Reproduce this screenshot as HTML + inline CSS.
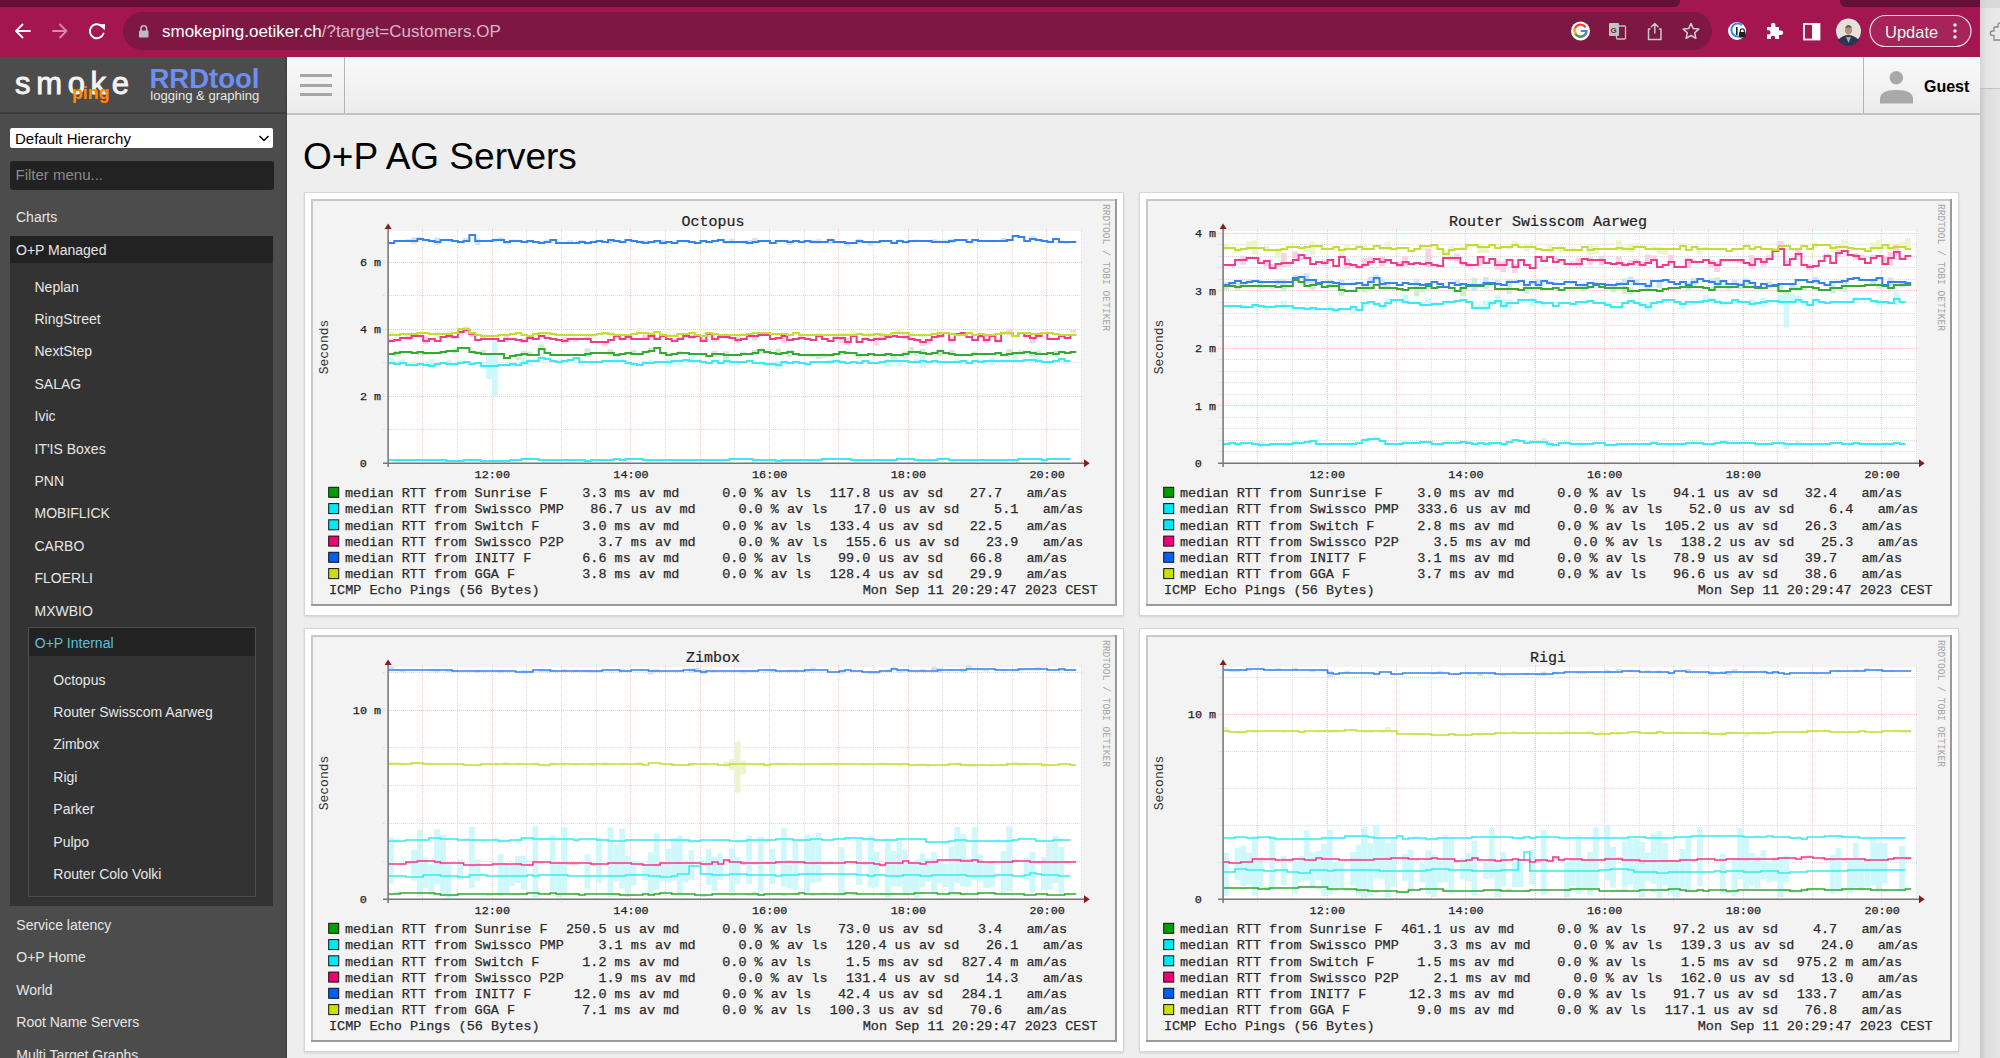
<!DOCTYPE html>
<html><head><meta charset="utf-8"><title>SmokePing</title>
<style>
html,body{margin:0;padding:0;width:2000px;height:1058px;overflow:hidden;background:#eee;font-family:"Liberation Sans",sans-serif}
</style></head><body>
<div style="position:absolute;left:0;top:0;width:1980px;height:57px;background:#a3164f"></div>
<div style="position:absolute;left:0;top:0;width:1680px;height:7px;background:#660f36;border-bottom-right-radius:6px"></div>
<div style="position:absolute;left:1840px;top:0;width:140px;height:7px;background:#660f36;border-bottom-left-radius:6px"></div>
<div style="position:absolute;left:123px;top:12px;width:1589px;height:38px;background:#7e1843;border-radius:19px"></div>
<svg style="position:absolute;left:0;top:0" width="1980" height="57">
<g fill="none" stroke="#fff" stroke-width="1.8" stroke-linecap="round" stroke-linejoin="round">
<path d="M16.5 31 L30 31 M22.5 24.5 L16 31 L22.5 37.5"/>
</g>
<g fill="none" stroke="#d98aa8" stroke-width="1.8" stroke-linecap="round" stroke-linejoin="round">
<path d="M53 31 L66.5 31 M60 24.5 L66.5 31 L60 37.5"/>
</g>
<g fill="none" stroke="#fff" stroke-width="1.9" stroke-linecap="round">
<path d="M103.5 33.5 A7 7 0 1 1 101.5 26"/>
</g>
<path d="M98.5 24.5 L105 24 L104.8 30.3 Z" fill="#fff"/>
<rect x="139" y="30.5" width="9.5" height="7" rx="1" fill="#b9bdc0"/>
<path d="M141 31 V28.5 A2.8 2.8 0 0 1 146.6 28.5 V31" fill="none" stroke="#b9bdc0" stroke-width="1.6"/>
<!-- google G -->
<circle cx="1580.5" cy="31" r="9.5" fill="#fff"/>
<path d="M1585.6 27.3 A6 6 0 1 0 1586.4 32" fill="none" stroke="#ea4335" stroke-width="2.2"/>
<path d="M1575.3 28.5 A6 6 0 0 0 1575.5 34" fill="none" stroke="#fbbc05" stroke-width="2.2"/>
<path d="M1575.5 34 A6 6 0 0 0 1584.5 35.5" fill="none" stroke="#34a853" stroke-width="2.2"/>
<path d="M1580.8 31 H1586.5 A6 6 0 0 1 1584.5 35.5" fill="none" stroke="#4285f4" stroke-width="2.2"/>
<!-- translate -->
<rect x="1609" y="23" width="10" height="13" rx="1" fill="#c2c2c2"/>
<rect x="1616.5" y="26" width="9" height="13" rx="1" fill="none" stroke="#c2c2c2" stroke-width="1.3"/>
<text x="1610.5" y="33" font-family='"Liberation Sans",sans-serif' font-size="8" font-weight="bold" fill="#7e1843">G</text>
<!-- share -->
<path d="M1650 29 H1648.5 V39.5 H1661 V29 H1659.5 M1654.8 33 V23.5 M1651.5 26.8 L1654.8 23.5 L1658 26.8" fill="none" stroke="#c7c7c7" stroke-width="1.5" stroke-linejoin="round" stroke-linecap="round"/>
<!-- star -->
<path d="M1691 23.5 L1693.3 28.6 L1698.8 29.1 L1694.7 32.8 L1695.9 38.3 L1691 35.5 L1686.1 38.3 L1687.3 32.8 L1683.2 29.1 L1688.7 28.6 Z" fill="none" stroke="#d0d0d0" stroke-width="1.5" stroke-linejoin="round"/>
<!-- 1password-ish -->
<circle cx="1737" cy="31" r="9" fill="#fff"/>
<path d="M1742 25 A6.5 6.5 0 1 0 1743 34" fill="none" stroke="#2f8cf0" stroke-width="2"/>
<rect x="1736" y="27" width="1.6" height="8" fill="#222"/>
<rect x="1739" y="32" width="6.5" height="5.5" rx="0.8" fill="#222"/>
<path d="M1740.3 32.5 V30.8 A2 2 0 0 1 1744.3 30.8 V32.5" fill="none" stroke="#222" stroke-width="1.2"/>
<!-- puzzle -->
<path d="M1767 27 H1771 V25 A2.2 2.2 0 0 1 1775.4 25 V27 H1779 V30.5 H1781 A2.2 2.2 0 0 1 1781 34.9 H1779 V39 H1775 V37 A2.2 2.2 0 0 0 1771 37 V39 H1767 V34.5 H1769 A2.2 2.2 0 0 0 1769 30.3 H1767 Z" fill="#fff"/>
<!-- sidebar icon -->
<rect x="1804" y="24" width="15.5" height="15.5" fill="none" stroke="#fff" stroke-width="1.8"/>
<rect x="1812" y="24" width="7.5" height="15.5" fill="#fff"/>
<!-- avatar -->
<circle cx="1848.5" cy="31" r="12.5" fill="#e6e2da"/>
<path d="M1838 40 Q1848 30 1859 40 A12.5 12.5 0 0 1 1838 40 Z" fill="#2a3550"/>
<path d="M1846 37 L1848.5 43 L1851 37 Z" fill="#b5a89a"/>
<ellipse cx="1848.5" cy="30" rx="3.6" ry="4.6" fill="#b89078"/>
<path d="M1844.8 27.5 Q1848.5 22.5 1852.2 27.5 Z" fill="#555"/>
<!-- update btn -->
<rect x="1870" y="15.5" width="101" height="31" rx="15.5" fill="#a6245a" stroke="#e8d8de" stroke-width="1.2"/>
<circle cx="1955" cy="25" r="1.7" fill="#e3f5e6"/><circle cx="1955" cy="31" r="1.7" fill="#e3f5e6"/><circle cx="1955" cy="37" r="1.7" fill="#e3f5e6"/>
</svg>
<div style="position:absolute;left:162px;top:22px;font:17px 'Liberation Sans', sans-serif;color:#fff;white-space:nowrap;line-height:20px">smokeping.oetiker.ch<span style="color:#d8b5c6">/?target=Customers.OP</span></div>
<div style="position:absolute;left:1885px;top:21.5px;font:16.5px 'Liberation Sans', sans-serif;color:#e3f5e6;white-space:nowrap;line-height:20px">Update</div>
<div style="position:absolute;left:1980px;top:0;width:20px;height:1058px;background:linear-gradient(to right,#c8c8c8,#dcdcdc 30%,#e6e6e6)"></div>
<div style="position:absolute;left:1980px;top:0;width:20px;height:88px;background:linear-gradient(to right,#d4d4d4,#e6e6e6 35%,#e9e9e9);border-bottom:1px solid #c4c4c4"></div>
<div style="position:absolute;left:1980px;top:0;width:20px;height:8px;background:linear-gradient(to right,#cfcfcf,#dadada 35%)"></div>
<svg style="position:absolute;left:1980px;top:0" width="20" height="60"><path d="M14 27 H18 V25 A2.2 2.2 0 0 1 22.4 25 V27 M14 27 V31 H12.5 A2.2 2.2 0 0 0 12.5 35.4 H14 V40 H22" fill="none" stroke="#8a8a8a" stroke-width="1.3"/></svg>
<div style="position:absolute;left:0;top:57px;width:287px;height:1001px;background:#4c4c4c"></div>
<div style="position:absolute;left:285px;top:57px;width:2px;height:1001px;background:#444"></div>
<div style="position:absolute;left:0;top:112px;width:287px;height:2px;background:#3c3c3c"></div>
<svg style="position:absolute;left:0;top:57px" width="287" height="56">
<text x="15" y="37" font-family='"Liberation Sans",sans-serif' font-size="31" fill="#f4f4f4" stroke="#f4f4f4" stroke-width="0.9" textLength="114" lengthAdjust="spacing">smoke</text>
<text x="72" y="42.3" font-family='"Liberation Sans",sans-serif' font-size="18" font-weight="bold" fill="#ff8a00" textLength="37.5" lengthAdjust="spacingAndGlyphs">ping</text>
<text x="149.5" y="30.5" font-family='"Liberation Sans",sans-serif' font-size="27" font-weight="bold" fill="#6b8ff5" textLength="110" lengthAdjust="spacingAndGlyphs">RRDtool</text>
<text x="150.3" y="43.3" font-family='"Liberation Sans",sans-serif' font-size="12.5" fill="#e8e8e8" textLength="109" lengthAdjust="spacingAndGlyphs">logging &amp; graphing</text>
</svg>
<div style="position:absolute;left:10px;top:128px;width:263px;height:20px;background:#fff;border-radius:2px"></div>
<div style="position:absolute;left:15px;top:128.5px;font:15px 'Liberation Sans', sans-serif;color:#000;line-height:20px;white-space:nowrap">Default Hierarchy</div>
<svg style="position:absolute;left:258px;top:133px" width="12" height="10"><path d="M1.5 3 L6 7.5 L10.5 3" fill="none" stroke="#000" stroke-width="1.5"/></svg>
<div style="position:absolute;left:10px;top:161px;width:264px;height:29px;background:#222;border-radius:3px"></div>
<div style="position:absolute;left:15.5px;top:165px;font:15px 'Liberation Sans', sans-serif;color:#8a8a8a;line-height:20px;white-space:nowrap">Filter menu...</div>
<div style="position:absolute;left:16px;top:209.2px;font:14px 'Liberation Sans', sans-serif;color:#e6e6e6;line-height:16px;white-space:nowrap">Charts</div>
<div style="position:absolute;left:10px;top:236px;width:263px;height:670px;background:#333"></div>
<div style="position:absolute;left:10px;top:236px;width:263px;height:27px;background:#222"></div>
<div style="position:absolute;left:16px;top:241.7px;font:14px 'Liberation Sans', sans-serif;color:#e6e6e6;line-height:16px;white-space:nowrap">O+P Managed</div>
<div style="position:absolute;left:34.5px;top:278.5px;font:14px 'Liberation Sans', sans-serif;color:#e6e6e6;line-height:16px;white-space:nowrap">Neplan</div>
<div style="position:absolute;left:34.5px;top:310.9px;font:14px 'Liberation Sans', sans-serif;color:#e6e6e6;line-height:16px;white-space:nowrap">RingStreet</div>
<div style="position:absolute;left:34.5px;top:343.3px;font:14px 'Liberation Sans', sans-serif;color:#e6e6e6;line-height:16px;white-space:nowrap">NextStep</div>
<div style="position:absolute;left:34.5px;top:375.7px;font:14px 'Liberation Sans', sans-serif;color:#e6e6e6;line-height:16px;white-space:nowrap">SALAG</div>
<div style="position:absolute;left:34.5px;top:408.09999999999997px;font:14px 'Liberation Sans', sans-serif;color:#e6e6e6;line-height:16px;white-space:nowrap">Ivic</div>
<div style="position:absolute;left:34.5px;top:440.5px;font:14px 'Liberation Sans', sans-serif;color:#e6e6e6;line-height:16px;white-space:nowrap">IT'IS Boxes</div>
<div style="position:absolute;left:34.5px;top:472.9px;font:14px 'Liberation Sans', sans-serif;color:#e6e6e6;line-height:16px;white-space:nowrap">PNN</div>
<div style="position:absolute;left:34.5px;top:505.3px;font:14px 'Liberation Sans', sans-serif;color:#e6e6e6;line-height:16px;white-space:nowrap">MOBIFLICK</div>
<div style="position:absolute;left:34.5px;top:537.7px;font:14px 'Liberation Sans', sans-serif;color:#e6e6e6;line-height:16px;white-space:nowrap">CARBO</div>
<div style="position:absolute;left:34.5px;top:570.1px;font:14px 'Liberation Sans', sans-serif;color:#e6e6e6;line-height:16px;white-space:nowrap">FLOERLI</div>
<div style="position:absolute;left:34.5px;top:602.5px;font:14px 'Liberation Sans', sans-serif;color:#e6e6e6;line-height:16px;white-space:nowrap">MXWBIO</div>
<div style="position:absolute;left:28px;top:627px;width:226px;height:268px;border:1px solid #4e4e4e;background:#333"></div>
<div style="position:absolute;left:29px;top:628px;width:226px;height:28px;background:#222"></div>
<div style="position:absolute;left:34.8px;top:635.0px;font:14px 'Liberation Sans', sans-serif;color:#5bc0de;line-height:16px;white-space:nowrap">O+P Internal</div>
<div style="position:absolute;left:53.3px;top:671.6px;font:14px 'Liberation Sans', sans-serif;color:#e6e6e6;line-height:16px;white-space:nowrap">Octopus</div>
<div style="position:absolute;left:53.3px;top:704.0px;font:14px 'Liberation Sans', sans-serif;color:#e6e6e6;line-height:16px;white-space:nowrap">Router Swisscom Aarweg</div>
<div style="position:absolute;left:53.3px;top:736.4px;font:14px 'Liberation Sans', sans-serif;color:#e6e6e6;line-height:16px;white-space:nowrap">Zimbox</div>
<div style="position:absolute;left:53.3px;top:768.8px;font:14px 'Liberation Sans', sans-serif;color:#e6e6e6;line-height:16px;white-space:nowrap">Rigi</div>
<div style="position:absolute;left:53.3px;top:801.2px;font:14px 'Liberation Sans', sans-serif;color:#e6e6e6;line-height:16px;white-space:nowrap">Parker</div>
<div style="position:absolute;left:53.3px;top:833.6px;font:14px 'Liberation Sans', sans-serif;color:#e6e6e6;line-height:16px;white-space:nowrap">Pulpo</div>
<div style="position:absolute;left:53.3px;top:866.0px;font:14px 'Liberation Sans', sans-serif;color:#e6e6e6;line-height:16px;white-space:nowrap">Router Colo Volki</div>
<div style="position:absolute;left:16.3px;top:917.0px;font:14px 'Liberation Sans', sans-serif;color:#e6e6e6;line-height:16px;white-space:nowrap">Service latency</div>
<div style="position:absolute;left:16.3px;top:949.4px;font:14px 'Liberation Sans', sans-serif;color:#e6e6e6;line-height:16px;white-space:nowrap">O+P Home</div>
<div style="position:absolute;left:16.3px;top:981.8px;font:14px 'Liberation Sans', sans-serif;color:#e6e6e6;line-height:16px;white-space:nowrap">World</div>
<div style="position:absolute;left:16.3px;top:1014.2px;font:14px 'Liberation Sans', sans-serif;color:#e6e6e6;line-height:16px;white-space:nowrap">Root Name Servers</div>
<div style="position:absolute;left:16.3px;top:1046.6px;font:14px 'Liberation Sans', sans-serif;color:#e6e6e6;line-height:16px;white-space:nowrap">Multi Target Graphs</div>
<div style="position:absolute;left:287px;top:57px;width:1693px;height:56px;background:linear-gradient(#f9f9f9,#ececec)"></div>
<div style="position:absolute;left:287px;top:113px;width:1693px;height:2px;background:#c2c2c2"></div>
<div style="position:absolute;left:287px;top:115px;width:1693px;height:943px;background:#eeeeee"></div>
<div style="position:absolute;left:344px;top:57px;width:1px;height:56px;background:#b4b4b4"></div>
<div style="position:absolute;left:1863px;top:57px;width:1px;height:56px;background:#b4b4b4"></div>
<div style="position:absolute;left:299.5px;top:74.3px;width:32.5px;height:3px;background:#a6a6a6"></div>
<div style="position:absolute;left:299.5px;top:83.6px;width:32.5px;height:3px;background:#a6a6a6"></div>
<div style="position:absolute;left:299.5px;top:92.9px;width:32.5px;height:3px;background:#a6a6a6"></div>
<svg style="position:absolute;left:1870px;top:60px" width="60" height="50">
<circle cx="26.3" cy="17.7" r="6.8" fill="#a9a9a9"/>
<path d="M10 43.5 V39 Q10 30 26.3 30 Q43 30 43 39 V43.5 Z" fill="#a9a9a9"/>
</svg>
<div style="position:absolute;left:1924px;top:76.5px;font:bold 16px 'Liberation Sans', sans-serif;color:#000;line-height:20px;white-space:nowrap">Guest</div>
<div style="position:absolute;left:303px;top:134.5px;font:37px 'Liberation Sans', sans-serif;color:#000;line-height:44px;white-space:nowrap">O+P AG Servers</div>
<div style="position:absolute;left:304px;top:192px;width:818px;height:422px;background:#fff;border:1px solid #d6d6d6;box-shadow:0 1px 2px rgba(0,0,0,0.12)"></div>
<div style="position:absolute;left:1139px;top:192px;width:818px;height:422px;background:#fff;border:1px solid #d6d6d6;box-shadow:0 1px 2px rgba(0,0,0,0.12)"></div>
<div style="position:absolute;left:304px;top:628px;width:818px;height:422px;background:#fff;border:1px solid #d6d6d6;box-shadow:0 1px 2px rgba(0,0,0,0.12)"></div>
<div style="position:absolute;left:1139px;top:628px;width:818px;height:422px;background:#fff;border:1px solid #d6d6d6;box-shadow:0 1px 2px rgba(0,0,0,0.12)"></div>
<svg width="806" height="407" style="position:absolute;left:311px;top:199px" shape-rendering="auto">
<rect x="0" y="0" width="806" height="407" fill="#f3f3f3"/>
<rect x="0" y="0" width="806" height="2" fill="#c9c9c9"/><rect x="0" y="0" width="2" height="407" fill="#c9c9c9"/>
<rect x="0" y="405" width="806" height="2" fill="#9a9a9a"/><rect x="804" y="0" width="2" height="407" fill="#9a9a9a"/>
<rect x="78" y="32.0" width="693.0" height="231.8" fill="#ffffff"/>
<path d="M72 230.5 H772.0" stroke="#dcdcdc" stroke-width="1" stroke-dasharray="1,1"/>
<path d="M72 163.5 H772.0" stroke="#dcdcdc" stroke-width="1" stroke-dasharray="1,1"/>
<path d="M72 96.5 H772.0" stroke="#dcdcdc" stroke-width="1" stroke-dasharray="1,1"/>
<path d="M72 264.5 H772.0" stroke="#f8c8c8" stroke-width="1" stroke-dasharray="1,1"/>
<path d="M72 197.5 H772.0" stroke="#f8c8c8" stroke-width="1" stroke-dasharray="1,1"/>
<path d="M72 130.5 H772.0" stroke="#f8c8c8" stroke-width="1" stroke-dasharray="1,1"/>
<path d="M72 63.5 H772.0" stroke="#f8c8c8" stroke-width="1" stroke-dasharray="1,1"/>
<path d="M111.5 30.0 V267.8" stroke="#f8c8c8" stroke-width="1" stroke-dasharray="1,1"/>
<path d="M146.5 30.0 V265.8" stroke="#dedede" stroke-width="1" stroke-dasharray="1,1"/>
<path d="M181.5 30.0 V267.8" stroke="#f8c8c8" stroke-width="1" stroke-dasharray="1,1"/>
<path d="M215.5 30.0 V265.8" stroke="#dedede" stroke-width="1" stroke-dasharray="1,1"/>
<path d="M250.5 30.0 V267.8" stroke="#f8c8c8" stroke-width="1" stroke-dasharray="1,1"/>
<path d="M285.5 30.0 V265.8" stroke="#dedede" stroke-width="1" stroke-dasharray="1,1"/>
<path d="M319.5 30.0 V267.8" stroke="#f8c8c8" stroke-width="1" stroke-dasharray="1,1"/>
<path d="M354.5 30.0 V265.8" stroke="#dedede" stroke-width="1" stroke-dasharray="1,1"/>
<path d="M389.5 30.0 V267.8" stroke="#f8c8c8" stroke-width="1" stroke-dasharray="1,1"/>
<path d="M423.5 30.0 V265.8" stroke="#dedede" stroke-width="1" stroke-dasharray="1,1"/>
<path d="M458.5 30.0 V267.8" stroke="#f8c8c8" stroke-width="1" stroke-dasharray="1,1"/>
<path d="M493.5 30.0 V265.8" stroke="#dedede" stroke-width="1" stroke-dasharray="1,1"/>
<path d="M527.5 30.0 V267.8" stroke="#f8c8c8" stroke-width="1" stroke-dasharray="1,1"/>
<path d="M562.5 30.0 V265.8" stroke="#dedede" stroke-width="1" stroke-dasharray="1,1"/>
<path d="M597.5 30.0 V267.8" stroke="#f8c8c8" stroke-width="1" stroke-dasharray="1,1"/>
<path d="M631.5 30.0 V265.8" stroke="#dedede" stroke-width="1" stroke-dasharray="1,1"/>
<path d="M666.5 30.0 V267.8" stroke="#f8c8c8" stroke-width="1" stroke-dasharray="1,1"/>
<path d="M701.5 30.0 V265.8" stroke="#dedede" stroke-width="1" stroke-dasharray="1,1"/>
<path d="M735.5 30.0 V267.8" stroke="#f8c8c8" stroke-width="1" stroke-dasharray="1,1"/>
<path d="M770.5 30.0 V265.8" stroke="#dedede" stroke-width="1" stroke-dasharray="1,1"/>
<rect x="77.00" y="158.44" width="5.78" height="7.89" fill="#cef8fa"/>
<rect x="82.78" y="161.59" width="5.78" height="3.73" fill="#cef8fa"/>
<rect x="88.56" y="160.34" width="5.78" height="4.05" fill="#cef8fa"/>
<rect x="100.12" y="165.99" width="5.78" height="2.00" fill="#cef8fa"/>
<rect x="117.45" y="160.02" width="5.78" height="7.66" fill="#cef8fa"/>
<rect x="134.79" y="161.36" width="5.78" height="3.58" fill="#cef8fa"/>
<rect x="140.57" y="163.89" width="5.78" height="2.59" fill="#cef8fa"/>
<rect x="146.35" y="161.29" width="5.78" height="3.46" fill="#cef8fa"/>
<rect x="169.47" y="165.35" width="5.78" height="4.07" fill="#cef8fa"/>
<rect x="175.25" y="158.06" width="5.78" height="8.97" fill="#cef8fa"/>
<rect x="192.58" y="165.22" width="5.78" height="2.48" fill="#cef8fa"/>
<rect x="198.36" y="164.87" width="5.78" height="2.97" fill="#cef8fa"/>
<rect x="209.92" y="159.09" width="5.78" height="6.36" fill="#cef8fa"/>
<rect x="215.70" y="160.18" width="5.78" height="7.16" fill="#cef8fa"/>
<rect x="221.48" y="159.68" width="5.78" height="3.01" fill="#cef8fa"/>
<rect x="227.26" y="155.31" width="5.78" height="6.57" fill="#cef8fa"/>
<rect x="233.04" y="157.85" width="5.78" height="3.31" fill="#cef8fa"/>
<rect x="250.38" y="161.97" width="5.78" height="2.00" fill="#cef8fa"/>
<rect x="256.15" y="160.11" width="5.78" height="2.09" fill="#cef8fa"/>
<rect x="267.71" y="161.29" width="5.78" height="5.63" fill="#cef8fa"/>
<rect x="273.49" y="162.58" width="5.78" height="2.00" fill="#cef8fa"/>
<rect x="279.27" y="162.91" width="5.78" height="2.56" fill="#cef8fa"/>
<rect x="296.61" y="160.97" width="5.78" height="2.60" fill="#cef8fa"/>
<rect x="302.39" y="159.31" width="5.78" height="5.38" fill="#cef8fa"/>
<rect x="308.17" y="160.50" width="5.78" height="2.00" fill="#cef8fa"/>
<rect x="313.95" y="163.41" width="5.78" height="2.71" fill="#cef8fa"/>
<rect x="319.72" y="164.11" width="5.78" height="2.00" fill="#cef8fa"/>
<rect x="331.28" y="161.67" width="5.78" height="3.61" fill="#cef8fa"/>
<rect x="337.06" y="161.12" width="5.78" height="3.76" fill="#cef8fa"/>
<rect x="354.40" y="160.08" width="5.78" height="8.14" fill="#cef8fa"/>
<rect x="365.96" y="160.38" width="5.78" height="5.70" fill="#cef8fa"/>
<rect x="377.52" y="156.73" width="5.78" height="6.97" fill="#cef8fa"/>
<rect x="389.07" y="162.28" width="5.78" height="2.00" fill="#cef8fa"/>
<rect x="400.63" y="161.77" width="5.78" height="2.56" fill="#cef8fa"/>
<rect x="417.97" y="161.47" width="5.78" height="5.74" fill="#cef8fa"/>
<rect x="423.75" y="162.94" width="5.78" height="3.86" fill="#cef8fa"/>
<rect x="441.09" y="162.53" width="5.78" height="2.47" fill="#cef8fa"/>
<rect x="446.87" y="163.40" width="5.78" height="3.24" fill="#cef8fa"/>
<rect x="452.65" y="163.48" width="5.78" height="3.45" fill="#cef8fa"/>
<rect x="464.20" y="161.85" width="5.78" height="7.95" fill="#cef8fa"/>
<rect x="493.10" y="164.65" width="5.78" height="2.00" fill="#cef8fa"/>
<rect x="516.22" y="160.86" width="5.78" height="4.33" fill="#cef8fa"/>
<rect x="527.77" y="161.82" width="5.78" height="2.00" fill="#cef8fa"/>
<rect x="574.01" y="160.07" width="5.78" height="7.57" fill="#cef8fa"/>
<rect x="585.57" y="160.65" width="5.78" height="6.52" fill="#cef8fa"/>
<rect x="602.90" y="160.22" width="5.78" height="5.01" fill="#cef8fa"/>
<rect x="608.68" y="156.92" width="5.78" height="11.94" fill="#cef8fa"/>
<rect x="626.02" y="162.54" width="5.78" height="3.85" fill="#cef8fa"/>
<rect x="631.80" y="162.29" width="5.78" height="2.00" fill="#cef8fa"/>
<rect x="643.36" y="160.41" width="5.78" height="4.29" fill="#cef8fa"/>
<rect x="649.14" y="160.65" width="5.78" height="3.98" fill="#cef8fa"/>
<rect x="666.47" y="161.14" width="5.78" height="2.42" fill="#cef8fa"/>
<rect x="678.03" y="158.84" width="5.78" height="7.91" fill="#cef8fa"/>
<rect x="689.59" y="160.50" width="5.78" height="3.35" fill="#cef8fa"/>
<rect x="701.15" y="157.25" width="5.78" height="6.44" fill="#cef8fa"/>
<rect x="718.49" y="159.10" width="5.78" height="3.19" fill="#cef8fa"/>
<rect x="724.27" y="156.90" width="5.78" height="5.21" fill="#cef8fa"/>
<rect x="747.38" y="158.48" width="5.78" height="3.99" fill="#cef8fa"/>
<rect x="753.16" y="161.73" width="5.78" height="3.32" fill="#cef8fa"/>
<rect x="181.02" y="139.96" width="5.78" height="56.90" fill="#cef8fa"/>
<rect x="175.25" y="156.70" width="5.78" height="23.43" fill="#cef8fa"/>
<rect x="82.78" y="151.81" width="5.78" height="5.89" fill="#d2ecd2"/>
<rect x="94.34" y="152.37" width="5.78" height="2.00" fill="#d2ecd2"/>
<rect x="105.90" y="152.12" width="5.78" height="3.73" fill="#d2ecd2"/>
<rect x="111.68" y="154.01" width="5.78" height="2.00" fill="#d2ecd2"/>
<rect x="117.45" y="153.62" width="5.78" height="2.00" fill="#d2ecd2"/>
<rect x="129.01" y="152.44" width="5.78" height="2.00" fill="#d2ecd2"/>
<rect x="140.57" y="149.51" width="5.78" height="4.83" fill="#d2ecd2"/>
<rect x="163.69" y="152.15" width="5.78" height="2.00" fill="#d2ecd2"/>
<rect x="169.47" y="151.00" width="5.78" height="4.30" fill="#d2ecd2"/>
<rect x="175.25" y="154.35" width="5.78" height="2.44" fill="#d2ecd2"/>
<rect x="204.14" y="155.07" width="5.78" height="6.25" fill="#d2ecd2"/>
<rect x="209.92" y="151.93" width="5.78" height="4.96" fill="#d2ecd2"/>
<rect x="215.70" y="152.73" width="5.78" height="4.09" fill="#d2ecd2"/>
<rect x="227.26" y="145.38" width="5.78" height="6.39" fill="#d2ecd2"/>
<rect x="244.60" y="154.95" width="5.78" height="2.21" fill="#d2ecd2"/>
<rect x="273.49" y="149.33" width="5.78" height="9.18" fill="#d2ecd2"/>
<rect x="296.61" y="150.23" width="5.78" height="6.36" fill="#d2ecd2"/>
<rect x="302.39" y="154.21" width="5.78" height="3.45" fill="#d2ecd2"/>
<rect x="319.72" y="150.80" width="5.78" height="4.95" fill="#d2ecd2"/>
<rect x="325.50" y="154.91" width="5.78" height="2.00" fill="#d2ecd2"/>
<rect x="331.28" y="152.95" width="5.78" height="2.00" fill="#d2ecd2"/>
<rect x="337.06" y="148.64" width="5.78" height="4.13" fill="#d2ecd2"/>
<rect x="360.18" y="153.71" width="5.78" height="2.00" fill="#d2ecd2"/>
<rect x="365.96" y="152.21" width="5.78" height="2.24" fill="#d2ecd2"/>
<rect x="400.63" y="151.68" width="5.78" height="6.40" fill="#d2ecd2"/>
<rect x="412.19" y="152.23" width="5.78" height="8.61" fill="#d2ecd2"/>
<rect x="429.53" y="152.65" width="5.78" height="3.32" fill="#d2ecd2"/>
<rect x="441.09" y="150.83" width="5.78" height="3.31" fill="#d2ecd2"/>
<rect x="446.87" y="149.67" width="5.78" height="3.81" fill="#d2ecd2"/>
<rect x="452.65" y="152.94" width="5.78" height="2.00" fill="#d2ecd2"/>
<rect x="464.20" y="149.53" width="5.78" height="6.54" fill="#d2ecd2"/>
<rect x="469.98" y="152.92" width="5.78" height="2.00" fill="#d2ecd2"/>
<rect x="475.76" y="151.23" width="5.78" height="6.63" fill="#d2ecd2"/>
<rect x="481.54" y="154.72" width="5.78" height="2.02" fill="#d2ecd2"/>
<rect x="498.88" y="156.31" width="5.78" height="2.00" fill="#d2ecd2"/>
<rect x="504.66" y="155.89" width="5.78" height="4.04" fill="#d2ecd2"/>
<rect x="510.44" y="154.40" width="5.78" height="4.57" fill="#d2ecd2"/>
<rect x="516.22" y="156.26" width="5.78" height="2.00" fill="#d2ecd2"/>
<rect x="527.77" y="152.32" width="5.78" height="3.66" fill="#d2ecd2"/>
<rect x="533.55" y="151.88" width="5.78" height="3.42" fill="#d2ecd2"/>
<rect x="545.11" y="155.46" width="5.78" height="4.11" fill="#d2ecd2"/>
<rect x="579.79" y="156.15" width="5.78" height="4.51" fill="#d2ecd2"/>
<rect x="591.35" y="152.55" width="5.78" height="6.97" fill="#d2ecd2"/>
<rect x="597.12" y="148.00" width="5.78" height="4.95" fill="#d2ecd2"/>
<rect x="602.90" y="152.65" width="5.78" height="4.02" fill="#d2ecd2"/>
<rect x="608.68" y="149.97" width="5.78" height="6.16" fill="#d2ecd2"/>
<rect x="614.46" y="154.35" width="5.78" height="2.00" fill="#d2ecd2"/>
<rect x="620.24" y="153.43" width="5.78" height="2.00" fill="#d2ecd2"/>
<rect x="626.02" y="150.25" width="5.78" height="6.83" fill="#d2ecd2"/>
<rect x="637.58" y="150.71" width="5.78" height="4.09" fill="#d2ecd2"/>
<rect x="654.92" y="154.87" width="5.78" height="2.00" fill="#d2ecd2"/>
<rect x="660.70" y="152.68" width="5.78" height="3.57" fill="#d2ecd2"/>
<rect x="672.25" y="154.37" width="5.78" height="2.08" fill="#d2ecd2"/>
<rect x="695.37" y="150.02" width="5.78" height="7.52" fill="#d2ecd2"/>
<rect x="701.15" y="153.93" width="5.78" height="2.27" fill="#d2ecd2"/>
<rect x="706.93" y="151.13" width="5.78" height="2.71" fill="#d2ecd2"/>
<rect x="718.49" y="152.23" width="5.78" height="5.67" fill="#d2ecd2"/>
<rect x="724.27" y="151.32" width="5.78" height="4.78" fill="#d2ecd2"/>
<rect x="730.05" y="154.53" width="5.78" height="2.00" fill="#d2ecd2"/>
<rect x="741.60" y="151.70" width="5.78" height="5.92" fill="#d2ecd2"/>
<rect x="77.00" y="139.68" width="5.78" height="4.43" fill="#f9d2e4"/>
<rect x="94.34" y="135.00" width="5.78" height="6.09" fill="#f9d2e4"/>
<rect x="111.68" y="137.51" width="5.78" height="7.72" fill="#f9d2e4"/>
<rect x="134.79" y="136.48" width="5.78" height="2.00" fill="#f9d2e4"/>
<rect x="140.57" y="138.02" width="5.78" height="2.00" fill="#f9d2e4"/>
<rect x="146.35" y="130.21" width="5.78" height="5.28" fill="#f9d2e4"/>
<rect x="152.13" y="127.67" width="5.78" height="5.08" fill="#f9d2e4"/>
<rect x="157.91" y="133.38" width="5.78" height="4.80" fill="#f9d2e4"/>
<rect x="169.47" y="135.79" width="5.78" height="3.84" fill="#f9d2e4"/>
<rect x="192.58" y="136.87" width="5.78" height="6.19" fill="#f9d2e4"/>
<rect x="198.36" y="139.45" width="5.78" height="2.00" fill="#f9d2e4"/>
<rect x="204.14" y="139.99" width="5.78" height="2.00" fill="#f9d2e4"/>
<rect x="209.92" y="139.44" width="5.78" height="4.70" fill="#f9d2e4"/>
<rect x="250.38" y="138.55" width="5.78" height="6.30" fill="#f9d2e4"/>
<rect x="256.15" y="138.54" width="5.78" height="2.10" fill="#f9d2e4"/>
<rect x="261.93" y="138.45" width="5.78" height="4.26" fill="#f9d2e4"/>
<rect x="273.49" y="137.34" width="5.78" height="3.58" fill="#f9d2e4"/>
<rect x="290.83" y="142.61" width="5.78" height="4.68" fill="#f9d2e4"/>
<rect x="302.39" y="136.88" width="5.78" height="2.66" fill="#f9d2e4"/>
<rect x="308.17" y="139.60" width="5.78" height="2.00" fill="#f9d2e4"/>
<rect x="313.95" y="137.80" width="5.78" height="2.74" fill="#f9d2e4"/>
<rect x="331.28" y="133.55" width="5.78" height="6.88" fill="#f9d2e4"/>
<rect x="337.06" y="134.65" width="5.78" height="3.94" fill="#f9d2e4"/>
<rect x="342.84" y="138.00" width="5.78" height="2.31" fill="#f9d2e4"/>
<rect x="365.96" y="134.74" width="5.78" height="5.54" fill="#f9d2e4"/>
<rect x="377.52" y="135.78" width="5.78" height="4.18" fill="#f9d2e4"/>
<rect x="383.30" y="133.54" width="5.78" height="4.16" fill="#f9d2e4"/>
<rect x="389.07" y="138.53" width="5.78" height="5.12" fill="#f9d2e4"/>
<rect x="394.85" y="134.63" width="5.78" height="3.80" fill="#f9d2e4"/>
<rect x="400.63" y="139.40" width="5.78" height="3.82" fill="#f9d2e4"/>
<rect x="423.75" y="136.23" width="5.78" height="7.98" fill="#f9d2e4"/>
<rect x="441.09" y="136.80" width="5.78" height="4.58" fill="#f9d2e4"/>
<rect x="469.98" y="136.60" width="5.78" height="7.53" fill="#f9d2e4"/>
<rect x="487.32" y="137.13" width="5.78" height="2.77" fill="#f9d2e4"/>
<rect x="493.10" y="138.74" width="5.78" height="2.00" fill="#f9d2e4"/>
<rect x="504.66" y="133.91" width="5.78" height="5.52" fill="#f9d2e4"/>
<rect x="522.00" y="137.28" width="5.78" height="2.07" fill="#f9d2e4"/>
<rect x="527.77" y="138.93" width="5.78" height="5.28" fill="#f9d2e4"/>
<rect x="533.55" y="139.04" width="5.78" height="6.89" fill="#f9d2e4"/>
<rect x="550.89" y="137.79" width="5.78" height="2.79" fill="#f9d2e4"/>
<rect x="562.45" y="135.39" width="5.78" height="11.21" fill="#f9d2e4"/>
<rect x="568.23" y="135.75" width="5.78" height="5.56" fill="#f9d2e4"/>
<rect x="579.79" y="136.18" width="5.78" height="2.00" fill="#f9d2e4"/>
<rect x="591.35" y="135.41" width="5.78" height="4.71" fill="#f9d2e4"/>
<rect x="597.12" y="139.08" width="5.78" height="2.96" fill="#f9d2e4"/>
<rect x="608.68" y="142.22" width="5.78" height="4.74" fill="#f9d2e4"/>
<rect x="614.46" y="139.95" width="5.78" height="5.49" fill="#f9d2e4"/>
<rect x="626.02" y="135.08" width="5.78" height="3.54" fill="#f9d2e4"/>
<rect x="637.58" y="137.74" width="5.78" height="5.95" fill="#f9d2e4"/>
<rect x="666.47" y="136.25" width="5.78" height="2.90" fill="#f9d2e4"/>
<rect x="672.25" y="135.45" width="5.78" height="8.74" fill="#f9d2e4"/>
<rect x="683.81" y="140.60" width="5.78" height="3.60" fill="#f9d2e4"/>
<rect x="689.59" y="132.27" width="5.78" height="3.72" fill="#f9d2e4"/>
<rect x="695.37" y="129.97" width="5.78" height="6.27" fill="#f9d2e4"/>
<rect x="718.49" y="138.44" width="5.78" height="5.83" fill="#f9d2e4"/>
<rect x="724.27" y="133.46" width="5.78" height="3.64" fill="#f9d2e4"/>
<rect x="758.94" y="131.09" width="5.78" height="5.88" fill="#f9d2e4"/>
<rect x="77.00" y="132.74" width="5.78" height="4.47" fill="#eef4cc"/>
<rect x="88.56" y="134.51" width="5.78" height="2.00" fill="#eef4cc"/>
<rect x="105.90" y="133.74" width="5.78" height="3.99" fill="#eef4cc"/>
<rect x="123.23" y="132.49" width="5.78" height="7.26" fill="#eef4cc"/>
<rect x="134.79" y="131.78" width="5.78" height="3.87" fill="#eef4cc"/>
<rect x="152.13" y="128.63" width="5.78" height="4.01" fill="#eef4cc"/>
<rect x="209.92" y="134.61" width="5.78" height="2.00" fill="#eef4cc"/>
<rect x="227.26" y="133.70" width="5.78" height="2.00" fill="#eef4cc"/>
<rect x="233.04" y="132.99" width="5.78" height="6.51" fill="#eef4cc"/>
<rect x="238.82" y="134.89" width="5.78" height="2.00" fill="#eef4cc"/>
<rect x="256.15" y="134.07" width="5.78" height="2.91" fill="#eef4cc"/>
<rect x="273.49" y="135.13" width="5.78" height="2.00" fill="#eef4cc"/>
<rect x="279.27" y="135.31" width="5.78" height="3.47" fill="#eef4cc"/>
<rect x="290.83" y="133.73" width="5.78" height="2.15" fill="#eef4cc"/>
<rect x="296.61" y="135.17" width="5.78" height="2.00" fill="#eef4cc"/>
<rect x="313.95" y="135.32" width="5.78" height="4.46" fill="#eef4cc"/>
<rect x="325.50" y="129.03" width="5.78" height="6.29" fill="#eef4cc"/>
<rect x="331.28" y="133.73" width="5.78" height="2.00" fill="#eef4cc"/>
<rect x="348.62" y="133.74" width="5.78" height="2.80" fill="#eef4cc"/>
<rect x="354.40" y="133.72" width="5.78" height="3.11" fill="#eef4cc"/>
<rect x="360.18" y="134.73" width="5.78" height="2.42" fill="#eef4cc"/>
<rect x="365.96" y="134.33" width="5.78" height="3.96" fill="#eef4cc"/>
<rect x="377.52" y="132.87" width="5.78" height="2.45" fill="#eef4cc"/>
<rect x="383.30" y="133.95" width="5.78" height="3.42" fill="#eef4cc"/>
<rect x="400.63" y="134.13" width="5.78" height="2.00" fill="#eef4cc"/>
<rect x="412.19" y="134.44" width="5.78" height="5.19" fill="#eef4cc"/>
<rect x="423.75" y="135.20" width="5.78" height="3.56" fill="#eef4cc"/>
<rect x="429.53" y="133.36" width="5.78" height="2.52" fill="#eef4cc"/>
<rect x="452.65" y="133.87" width="5.78" height="2.53" fill="#eef4cc"/>
<rect x="464.20" y="134.62" width="5.78" height="2.00" fill="#eef4cc"/>
<rect x="481.54" y="133.52" width="5.78" height="2.36" fill="#eef4cc"/>
<rect x="487.32" y="134.08" width="5.78" height="2.31" fill="#eef4cc"/>
<rect x="493.10" y="135.71" width="5.78" height="2.26" fill="#eef4cc"/>
<rect x="504.66" y="133.84" width="5.78" height="3.14" fill="#eef4cc"/>
<rect x="527.77" y="133.86" width="5.78" height="4.47" fill="#eef4cc"/>
<rect x="533.55" y="133.56" width="5.78" height="2.92" fill="#eef4cc"/>
<rect x="539.33" y="132.01" width="5.78" height="3.78" fill="#eef4cc"/>
<rect x="545.11" y="133.66" width="5.78" height="2.35" fill="#eef4cc"/>
<rect x="550.89" y="134.49" width="5.78" height="2.06" fill="#eef4cc"/>
<rect x="556.67" y="133.81" width="5.78" height="4.19" fill="#eef4cc"/>
<rect x="562.45" y="133.89" width="5.78" height="4.10" fill="#eef4cc"/>
<rect x="568.23" y="133.69" width="5.78" height="3.31" fill="#eef4cc"/>
<rect x="579.79" y="133.09" width="5.78" height="2.00" fill="#eef4cc"/>
<rect x="585.57" y="130.99" width="5.78" height="4.19" fill="#eef4cc"/>
<rect x="597.12" y="132.47" width="5.78" height="5.33" fill="#eef4cc"/>
<rect x="608.68" y="135.95" width="5.78" height="2.00" fill="#eef4cc"/>
<rect x="614.46" y="134.95" width="5.78" height="2.00" fill="#eef4cc"/>
<rect x="626.02" y="131.48" width="5.78" height="3.10" fill="#eef4cc"/>
<rect x="643.36" y="134.59" width="5.78" height="2.82" fill="#eef4cc"/>
<rect x="649.14" y="133.07" width="5.78" height="4.35" fill="#eef4cc"/>
<rect x="678.03" y="135.23" width="5.78" height="2.50" fill="#eef4cc"/>
<rect x="689.59" y="132.65" width="5.78" height="3.39" fill="#eef4cc"/>
<rect x="712.71" y="133.93" width="5.78" height="4.76" fill="#eef4cc"/>
<rect x="724.27" y="133.79" width="5.78" height="2.00" fill="#eef4cc"/>
<rect x="758.94" y="132.95" width="5.78" height="3.61" fill="#eef4cc"/>
<rect x="77.00" y="43.31" width="5.78" height="2.00" fill="#d2e2fa"/>
<rect x="94.34" y="40.17" width="5.78" height="2.11" fill="#d2e2fa"/>
<rect x="100.12" y="38.39" width="5.78" height="6.38" fill="#d2e2fa"/>
<rect x="105.90" y="38.12" width="5.78" height="2.91" fill="#d2e2fa"/>
<rect x="123.23" y="38.61" width="5.78" height="7.20" fill="#d2e2fa"/>
<rect x="140.57" y="40.98" width="5.78" height="2.00" fill="#d2e2fa"/>
<rect x="152.13" y="38.78" width="5.78" height="4.23" fill="#d2e2fa"/>
<rect x="157.91" y="35.01" width="5.78" height="2.00" fill="#d2e2fa"/>
<rect x="163.69" y="39.50" width="5.78" height="6.56" fill="#d2e2fa"/>
<rect x="181.03" y="39.60" width="5.78" height="3.71" fill="#d2e2fa"/>
<rect x="186.80" y="38.37" width="5.78" height="4.18" fill="#d2e2fa"/>
<rect x="192.58" y="42.76" width="5.78" height="2.37" fill="#d2e2fa"/>
<rect x="198.36" y="40.48" width="5.78" height="3.06" fill="#d2e2fa"/>
<rect x="204.14" y="40.83" width="5.78" height="2.00" fill="#d2e2fa"/>
<rect x="215.70" y="41.31" width="5.78" height="2.00" fill="#d2e2fa"/>
<rect x="227.26" y="41.68" width="5.78" height="2.76" fill="#d2e2fa"/>
<rect x="233.04" y="40.66" width="5.78" height="3.22" fill="#d2e2fa"/>
<rect x="256.15" y="41.21" width="5.78" height="3.30" fill="#d2e2fa"/>
<rect x="267.71" y="41.02" width="5.78" height="2.85" fill="#d2e2fa"/>
<rect x="290.83" y="41.79" width="5.78" height="2.05" fill="#d2e2fa"/>
<rect x="296.61" y="40.35" width="5.78" height="4.10" fill="#d2e2fa"/>
<rect x="319.72" y="41.60" width="5.78" height="2.00" fill="#d2e2fa"/>
<rect x="325.50" y="41.48" width="5.78" height="2.52" fill="#d2e2fa"/>
<rect x="331.28" y="41.43" width="5.78" height="3.27" fill="#d2e2fa"/>
<rect x="342.84" y="41.54" width="5.78" height="2.16" fill="#d2e2fa"/>
<rect x="348.62" y="41.05" width="5.78" height="4.88" fill="#d2e2fa"/>
<rect x="371.74" y="41.72" width="5.78" height="2.00" fill="#d2e2fa"/>
<rect x="394.85" y="42.42" width="5.78" height="2.00" fill="#d2e2fa"/>
<rect x="412.19" y="42.95" width="5.78" height="2.00" fill="#d2e2fa"/>
<rect x="417.97" y="39.72" width="5.78" height="4.65" fill="#d2e2fa"/>
<rect x="429.53" y="41.62" width="5.78" height="3.12" fill="#d2e2fa"/>
<rect x="435.31" y="40.89" width="5.78" height="4.21" fill="#d2e2fa"/>
<rect x="441.09" y="39.10" width="5.78" height="3.94" fill="#d2e2fa"/>
<rect x="452.65" y="41.22" width="5.78" height="2.00" fill="#d2e2fa"/>
<rect x="469.98" y="40.78" width="5.78" height="2.15" fill="#d2e2fa"/>
<rect x="475.76" y="41.38" width="5.78" height="4.66" fill="#d2e2fa"/>
<rect x="487.32" y="42.27" width="5.78" height="2.00" fill="#d2e2fa"/>
<rect x="498.88" y="40.89" width="5.78" height="3.78" fill="#d2e2fa"/>
<rect x="504.66" y="40.26" width="5.78" height="4.72" fill="#d2e2fa"/>
<rect x="516.22" y="39.59" width="5.78" height="5.03" fill="#d2e2fa"/>
<rect x="522.00" y="41.95" width="5.78" height="2.00" fill="#d2e2fa"/>
<rect x="527.77" y="42.73" width="5.78" height="2.00" fill="#d2e2fa"/>
<rect x="533.55" y="44.17" width="5.78" height="2.69" fill="#d2e2fa"/>
<rect x="545.11" y="39.77" width="5.78" height="4.78" fill="#d2e2fa"/>
<rect x="556.67" y="41.80" width="5.78" height="4.84" fill="#d2e2fa"/>
<rect x="568.23" y="41.14" width="5.78" height="2.00" fill="#d2e2fa"/>
<rect x="579.79" y="42.37" width="5.78" height="2.39" fill="#d2e2fa"/>
<rect x="585.57" y="40.49" width="5.78" height="2.00" fill="#d2e2fa"/>
<rect x="591.35" y="42.77" width="5.78" height="2.00" fill="#d2e2fa"/>
<rect x="597.12" y="41.56" width="5.78" height="2.00" fill="#d2e2fa"/>
<rect x="602.90" y="40.57" width="5.78" height="2.00" fill="#d2e2fa"/>
<rect x="620.24" y="40.29" width="5.78" height="3.37" fill="#d2e2fa"/>
<rect x="626.02" y="41.22" width="5.78" height="2.63" fill="#d2e2fa"/>
<rect x="631.80" y="40.74" width="5.78" height="3.09" fill="#d2e2fa"/>
<rect x="637.58" y="40.01" width="5.78" height="4.05" fill="#d2e2fa"/>
<rect x="678.03" y="41.41" width="5.78" height="2.00" fill="#d2e2fa"/>
<rect x="689.59" y="38.92" width="5.78" height="3.74" fill="#d2e2fa"/>
<rect x="706.93" y="36.92" width="5.78" height="2.00" fill="#d2e2fa"/>
<rect x="718.49" y="37.30" width="5.78" height="2.70" fill="#d2e2fa"/>
<rect x="741.60" y="39.32" width="5.78" height="2.00" fill="#d2e2fa"/>
<rect x="747.38" y="41.34" width="5.78" height="2.38" fill="#d2e2fa"/>
<rect x="753.16" y="42.81" width="5.78" height="2.00" fill="#d2e2fa"/>
<path d="M77.50 164.00H83.28V165.00H89.06V164.00H94.84V166.00H100.62V166.00H106.40V165.00H112.18V166.00H117.95V167.00H123.73V165.00H129.51V164.00H135.29V165.00H141.07V165.00H146.85V164.00H152.63V163.00H158.41V165.00H164.19V164.00H169.97V167.00H175.75V167.00H181.53V167.00H187.30V166.00H193.08V166.00H198.86V165.00H204.64V166.00H210.42V164.00H216.20V162.00H221.98V162.00H227.76V159.00H233.54V160.00H239.32V162.00H245.10V163.00H250.88V162.00H256.65V161.00H262.43V159.00H268.21V163.00H273.99V163.00H279.77V163.00H285.55V163.00H291.33V162.00H297.11V162.00H302.89V162.00H308.67V162.00H314.45V164.00H320.22V165.00H326.00V166.00H331.78V164.00H337.56V164.00H343.34V163.00H349.12V163.00H354.90V163.00H360.68V162.00H366.46V162.00H372.24V161.00H378.02V162.00H383.80V162.00H389.57V163.00H395.35V164.00H401.13V162.00H406.91V164.00H412.69V162.00H418.47V163.00H424.25V163.00H430.03V163.00H435.81V162.00H441.59V164.00H447.37V164.00H453.15V165.00H458.92V165.00H464.70V166.00H470.48V163.00H476.26V164.00H482.04V163.00H487.82V164.00H493.60V165.00H499.38V163.00H505.16V163.00H510.94V163.00H516.72V163.00H522.50V162.00H528.27V163.00H534.05V164.00H539.83V163.00H545.61V164.00H551.39V162.00H557.17V164.00H562.95V164.00H568.73V163.00H574.51V162.00H580.29V162.00H586.07V162.00H591.85V162.00H597.62V163.00H603.40V163.00H609.18V162.00H614.96V163.00H620.74V162.00H626.52V163.00H632.30V163.00H638.08V163.00H643.86V163.00H649.64V162.00H655.42V164.00H661.20V162.00H666.97V163.00H672.75V162.00H678.53V162.00H684.31V162.00H690.09V162.00H695.87V162.00H701.65V162.00H707.43V162.00H713.21V161.00H718.99V161.00H724.77V162.00H730.55V163.00H736.33V163.00H742.10V162.00H747.88V160.00H753.66V162.00H759.44" fill="none" stroke="#3ce8f4" stroke-width="2" stroke-linejoin="miter"/>
<path d="M77.50 155.00H83.28V154.00H89.06V153.00H94.84V153.00H100.62V154.00H106.40V153.00H112.18V154.00H117.95V154.00H123.73V154.00H129.51V153.00H135.29V152.00H141.07V152.00H146.85V149.00H152.63V149.00H158.41V153.00H164.19V154.00H169.97V155.00H175.75V155.00H181.53V155.00H187.30V155.00H193.08V159.00H198.86V157.00H204.64V156.00H210.42V155.00H216.20V156.00H221.98V156.00H227.76V150.00H233.54V154.00H239.32V156.00H245.10V156.00H250.88V156.00H256.65V156.00H262.43V156.00H268.21V156.00H273.99V155.00H279.77V154.00H285.55V154.00H291.33V154.00H297.11V154.00H302.89V156.00H308.67V155.00H314.45V154.00H320.22V155.00H326.00V155.00H331.78V153.00H337.56V152.00H343.34V149.00H349.12V154.00H354.90V156.00H360.68V155.00H366.46V154.00H372.24V154.00H378.02V155.00H383.80V155.00H389.57V155.00H395.35V157.00H401.13V155.00H406.91V155.00H412.69V156.00H418.47V156.00H424.25V156.00H430.03V155.00H435.81V155.00H441.59V154.00H447.37V151.00H453.15V153.00H458.92V154.00H464.70V155.00H470.48V154.00H476.26V153.00H482.04V155.00H487.82V156.00H493.60V156.00H499.38V156.00H505.16V156.00H510.94V156.00H516.72V156.00H522.50V155.00H528.27V153.00H534.05V154.00H539.83V154.00H545.61V156.00H551.39V156.00H557.17V155.00H562.95V156.00H568.73V156.00H574.51V155.00H580.29V156.00H586.07V156.00H591.85V155.00H597.62V153.00H603.40V153.00H609.18V154.00H614.96V155.00H620.74V154.00H626.52V152.00H632.30V154.00H638.08V155.00H643.86V156.00H649.64V156.00H655.42V156.00H661.20V155.00H666.97V155.00H672.75V155.00H678.53V155.00H684.31V154.00H690.09V156.00H695.87V155.00H701.65V154.00H707.43V154.00H713.21V153.00H718.99V154.00H724.77V155.00H730.55V155.00H736.33V154.00H742.10V155.00H747.88V153.00H753.66V154.00H759.44V153.00H765.22" fill="none" stroke="#36a836" stroke-width="2" stroke-linejoin="miter"/>
<path d="M77.50 142.00H83.28V141.00H89.06V139.00H94.84V139.00H100.62V137.00H106.40V137.00H112.18V142.00H117.95V140.00H123.73V142.00H129.51V138.00H135.29V137.00H141.07V138.00H146.85V133.00H152.63V131.00H158.41V135.00H164.19V141.00H169.97V140.00H175.75V140.00H181.53V140.00H187.30V142.00H193.08V140.00H198.86V140.00H204.64V141.00H210.42V142.00H216.20V139.00H221.98V140.00H227.76V137.00H233.54V139.00H239.32V140.00H245.10V141.00H250.88V142.00H256.65V140.00H262.43V140.00H268.21V140.00H273.99V140.00H279.77V143.00H285.55V143.00H291.33V143.00H297.11V141.00H302.89V137.00H308.67V140.00H314.45V138.00H320.22V140.00H326.00V140.00H331.78V140.00H337.56V137.00H343.34V140.00H349.12V137.00H354.90V140.00H360.68V142.00H366.46V140.00H372.24V137.00H378.02V138.00H383.80V137.00H389.57V142.00H395.35V135.00H401.13V140.00H406.91V138.00H412.69V138.00H418.47V139.00H424.25V141.00H430.03V140.00H435.81V137.00H441.59V137.00H447.37V136.00H453.15V136.00H458.92V140.00H464.70V139.00H470.48V137.00H476.26V141.00H482.04V140.00H487.82V139.00H493.60V140.00H499.38V141.00H505.16V137.00H510.94V140.00H516.72V142.00H522.50V139.00H528.27V139.00H534.05V143.00H539.83V137.00H545.61V143.00H551.39V140.00H557.17V141.00H562.95V140.00H568.73V140.00H574.51V138.00H580.29V137.00H586.07V138.00H591.85V138.00H597.62V140.00H603.40V141.00H609.18V143.00H614.96V141.00H620.74V138.00H626.52V137.00H632.30V134.00H638.08V141.00H643.86V135.00H649.64V134.00H655.42V138.00H661.20V141.00H666.97V137.00H672.75V141.00H678.53V137.00H684.31V142.00H690.09V134.00H695.87V134.00H701.65V137.00H707.43V134.00H713.21V137.00H718.99V139.00H724.77V137.00H730.55V134.00H736.33V140.00H742.10V140.00H747.88V137.00H753.66V139.00H759.44V136.00H765.22" fill="none" stroke="#f03a8c" stroke-width="2" stroke-linejoin="miter"/>
<path d="M77.50 136.00H83.28V136.00H89.06V135.00H94.84V135.00H100.62V135.00H106.40V134.00H112.18V134.00H117.95V135.00H123.73V135.00H129.51V135.00H135.29V135.00H141.07V134.00H146.85V130.00H152.63V130.00H158.41V134.00H164.19V136.00H169.97V137.00H175.75V137.00H181.53V137.00H187.30V136.00H193.08V136.00H198.86V135.00H204.64V134.00H210.42V136.00H216.20V137.00H221.98V135.00H227.76V134.00H233.54V134.00H239.32V135.00H245.10V136.00H250.88V136.00H256.65V136.00H262.43V136.00H268.21V136.00H273.99V136.00H279.77V136.00H285.55V135.00H291.33V134.00H297.11V135.00H302.89V136.00H308.67V136.00H314.45V136.00H320.22V135.00H326.00V134.00H331.78V134.00H337.56V135.00H343.34V133.00H349.12V136.00H354.90V137.00H360.68V137.00H366.46V135.00H372.24V135.00H378.02V134.00H383.80V136.00H389.57V137.00H395.35V134.00H401.13V135.00H406.91V136.00H412.69V136.00H418.47V136.00H424.25V136.00H430.03V136.00H435.81V135.00H441.59V134.00H447.37V134.00H453.15V134.00H458.92V135.00H464.70V135.00H470.48V135.00H476.26V136.00H482.04V134.00H487.82V136.00H493.60V136.00H499.38V136.00H505.16V136.00H510.94V136.00H516.72V136.00H522.50V136.00H528.27V136.00H534.05V136.00H539.83V136.00H545.61V135.00H551.39V136.00H557.17V136.00H562.95V135.00H568.73V136.00H574.51V136.00H580.29V134.00H586.07V134.00H591.85V134.00H597.62V136.00H603.40V136.00H609.18V136.00H614.96V136.00H620.74V135.00H626.52V134.00H632.30V134.00H638.08V135.00H643.86V136.00H649.64V136.00H655.42V134.00H661.20V136.00H666.97V135.00H672.75V136.00H678.53V136.00H684.31V135.00H690.09V134.00H695.87V134.00H701.65V137.00H707.43V134.00H713.21V134.00H718.99V135.00H724.77V135.00H730.55V134.00H736.33V134.00H742.10V135.00H747.88V136.00H753.66V136.00H759.44V136.00H765.22" fill="none" stroke="#c4dc34" stroke-width="2" stroke-linejoin="miter"/>
<path d="M77.50 44.00H83.28V42.00H89.06V42.00H94.84V42.00H100.62V42.00H106.40V40.00H112.18V41.00H117.95V42.00H123.73V43.00H129.51V41.00H135.29V41.00H141.07V42.00H146.85V43.00H152.63V42.00H158.41V36.00H164.19V42.00H169.97V42.00H175.75V42.00H181.53V41.00H187.30V41.00H193.08V43.00H198.86V42.00H204.64V42.00H210.42V43.00H216.20V42.00H221.98V43.00H227.76V44.00H233.54V43.00H239.32V41.00H245.10V44.00H250.88V44.00H256.65V44.00H262.43V44.00H268.21V43.00H273.99V44.00H279.77V43.00H285.55V42.00H291.33V43.00H297.11V41.00H302.89V42.00H308.67V43.00H314.45V41.00H320.22V42.00H326.00V43.00H331.78V44.00H337.56V43.00H343.34V42.00H349.12V44.00H354.90V43.00H360.68V44.00H366.46V42.00H372.24V42.00H378.02V43.00H383.80V44.00H389.57V42.00H395.35V43.00H401.13V42.00H406.91V41.00H412.69V43.00H418.47V43.00H424.25V43.00H430.03V43.00H435.81V44.00H441.59V43.00H447.37V42.00H453.15V42.00H458.92V44.00H464.70V42.00H470.48V42.00H476.26V43.00H482.04V42.00H487.82V43.00H493.60V42.00H499.38V43.00H505.16V43.00H510.94V43.00H516.72V41.00H522.50V43.00H528.27V43.00H534.05V44.00H539.83V44.00H545.61V42.00H551.39V43.00H557.17V43.00H562.95V43.00H568.73V42.00H574.51V42.00H580.29V44.00H586.07V42.00H591.85V43.00H597.62V42.00H603.40V42.00H609.18V42.00H614.96V42.00H620.74V43.00H626.52V43.00H632.30V43.00H638.08V42.00H643.86V41.00H649.64V41.00H655.42V43.00H661.20V41.00H666.97V42.00H672.75V42.00H678.53V42.00H684.31V42.00H690.09V42.00H695.87V41.00H701.65V37.00H707.43V38.00H713.21V42.00H718.99V40.00H724.77V41.00H730.55V42.00H736.33V43.00H742.10V40.00H747.88V43.00H753.66V43.00H759.44V43.00H765.22" fill="none" stroke="#3482ec" stroke-width="2" stroke-linejoin="miter"/>
<path d="M77.50 261.00H83.28V261.00H89.06V261.00H94.84V261.00H100.62V261.00H106.40V261.00H112.18V261.00H117.95V261.00H123.73V261.00H129.51V261.00H135.29V262.00H141.07V262.00H146.85V262.00H152.63V261.00H158.41V261.00H164.19V261.00H169.97V262.00H175.75V262.00H181.53V262.00H187.30V262.00H193.08V262.00H198.86V261.00H204.64V261.00H210.42V260.00H216.20V260.00H221.98V260.00H227.76V261.00H233.54V261.00H239.32V261.00H245.10V261.00H250.88V261.00H256.65V261.00H262.43V261.00H268.21V261.00H273.99V262.00H279.77V261.00H285.55V261.00H291.33V261.00H297.11V261.00H302.89V260.00H308.67V261.00H314.45V260.00H320.22V260.00H326.00V260.00H331.78V261.00H337.56V261.00H343.34V261.00H349.12V261.00H354.90V261.00H360.68V261.00H366.46V261.00H372.24V261.00H378.02V261.00H383.80V261.00H389.57V261.00H395.35V261.00H401.13V261.00H406.91V261.00H412.69V261.00H418.47V260.00H424.25V260.00H430.03V260.00H435.81V260.00H441.59V261.00H447.37V261.00H453.15V261.00H458.92V261.00H464.70V262.00H470.48V261.00H476.26V261.00H482.04V261.00H487.82V261.00H493.60V261.00H499.38V261.00H505.16V261.00H510.94V260.00H516.72V260.00H522.50V260.00H528.27V260.00H534.05V260.00H539.83V261.00H545.61V261.00H551.39V261.00H557.17V261.00H562.95V261.00H568.73V261.00H574.51V261.00H580.29V261.00H586.07V260.00H591.85V260.00H597.62V260.00H603.40V261.00H609.18V261.00H614.96V261.00H620.74V261.00H626.52V260.00H632.30V260.00H638.08V261.00H643.86V261.00H649.64V261.00H655.42V261.00H661.20V261.00H666.97V261.00H672.75V261.00H678.53V261.00H684.31V261.00H690.09V261.00H695.87V261.00H701.65V261.00H707.43V260.00H713.21V260.00H718.99V260.00H724.77V260.00H730.55V261.00H736.33V260.00H742.10V260.00H747.88V260.00H753.66V260.00H759.44" fill="none" stroke="#3ce8f4" stroke-width="2" stroke-linejoin="miter"/>
<path d="M77.1 29 V268" stroke="#757575" stroke-width="1.5"/>
<path d="M72 264.2 H777" stroke="#757575" stroke-width="1.5"/>
<path d="M73.6 30 L77.1 24.5 L80.6 30 Z" fill="#8b1a1a"/>
<path d="M773 260.2 L778.7 264.2 L773 268.2 Z" fill="#8b1a1a"/>
<text x="402" y="27.2" font-family='"Liberation Mono", monospace' font-size="15" fill="#222" stroke="#222" stroke-width="0.2" text-anchor="middle">Octopus</text>
<text x="55.8" y="268.1" font-family='"Liberation Mono", monospace' font-size="11.8" fill="#222" stroke="#222" stroke-width="0.25" text-anchor="end" xml:space="preserve">0</text>
<text x="70.2" y="201.2" font-family='"Liberation Mono", monospace' font-size="11.8" fill="#222" stroke="#222" stroke-width="0.25" text-anchor="end" xml:space="preserve">2 m</text>
<text x="70.2" y="134.2" font-family='"Liberation Mono", monospace' font-size="11.8" fill="#222" stroke="#222" stroke-width="0.25" text-anchor="end" xml:space="preserve">4 m</text>
<text x="70.2" y="67.3" font-family='"Liberation Mono", monospace' font-size="11.8" fill="#222" stroke="#222" stroke-width="0.25" text-anchor="end" xml:space="preserve">6 m</text>
<text x="181.3" y="278.8" font-family='"Liberation Mono", monospace' font-size="11.8" fill="#222" stroke="#222" stroke-width="0.25" text-anchor="middle">12:00</text>
<text x="320.0" y="278.8" font-family='"Liberation Mono", monospace' font-size="11.8" fill="#222" stroke="#222" stroke-width="0.25" text-anchor="middle">14:00</text>
<text x="458.7" y="278.8" font-family='"Liberation Mono", monospace' font-size="11.8" fill="#222" stroke="#222" stroke-width="0.25" text-anchor="middle">16:00</text>
<text x="597.4" y="278.8" font-family='"Liberation Mono", monospace' font-size="11.8" fill="#222" stroke="#222" stroke-width="0.25" text-anchor="middle">18:00</text>
<text x="736.1" y="278.8" font-family='"Liberation Mono", monospace' font-size="11.8" fill="#222" stroke="#222" stroke-width="0.25" text-anchor="middle">20:00</text>
<text transform="translate(16.5,148) rotate(-90)" font-family='"Liberation Mono", monospace' font-size="13" fill="#333" text-anchor="middle">Seconds</text>
<text transform="translate(791.5,5) rotate(90)" font-family='"Liberation Mono", monospace' font-size="10.5" fill="#a8a8a8" textLength="127" lengthAdjust="spacingAndGlyphs">RRDTOOL / TOBI OETIKER</text>
<rect x="17.7" y="288.3" width="10" height="10" fill="#009f00" stroke="#111" stroke-width="1"/>
<text x="34.0" y="298.00" font-family='"Liberation Mono", monospace' font-size="13.5" fill="#2a2a2a" stroke="#2a2a2a" stroke-width="0.25" xml:space="preserve">median RTT from Sunrise F</text>
<text x="255.0" y="298.00" font-family='"Liberation Mono", monospace' font-size="13.5" fill="#2a2a2a" stroke="#2a2a2a" stroke-width="0.25" xml:space="preserve">  3.3 ms av md </text>
<text x="395.0" y="298.00" font-family='"Liberation Mono", monospace' font-size="13.5" fill="#2a2a2a" stroke="#2a2a2a" stroke-width="0.25" xml:space="preserve">  0.0 % av ls</text>
<text x="518.8" y="298.00" font-family='"Liberation Mono", monospace' font-size="13.5" fill="#2a2a2a" stroke="#2a2a2a" stroke-width="0.25" xml:space="preserve">117.8 us av sd</text>
<text x="650.7" y="298.00" font-family='"Liberation Mono", monospace' font-size="13.5" fill="#2a2a2a" stroke="#2a2a2a" stroke-width="0.25" xml:space="preserve"> 27.7   am/as</text>
<rect x="17.7" y="304.6" width="10" height="10" fill="#00e8f4" stroke="#111" stroke-width="1"/>
<text x="34.0" y="314.25" font-family='"Liberation Mono", monospace' font-size="13.5" fill="#2a2a2a" stroke="#2a2a2a" stroke-width="0.25" xml:space="preserve">median RTT from Swissco PMP</text>
<text x="271.2" y="314.25" font-family='"Liberation Mono", monospace' font-size="13.5" fill="#2a2a2a" stroke="#2a2a2a" stroke-width="0.25" xml:space="preserve"> 86.7 us av md </text>
<text x="411.2" y="314.25" font-family='"Liberation Mono", monospace' font-size="13.5" fill="#2a2a2a" stroke="#2a2a2a" stroke-width="0.25" xml:space="preserve">  0.0 % av ls</text>
<text x="535.0" y="314.25" font-family='"Liberation Mono", monospace' font-size="13.5" fill="#2a2a2a" stroke="#2a2a2a" stroke-width="0.25" xml:space="preserve"> 17.0 us av sd</text>
<text x="666.9" y="314.25" font-family='"Liberation Mono", monospace' font-size="13.5" fill="#2a2a2a" stroke="#2a2a2a" stroke-width="0.25" xml:space="preserve">  5.1   am/as</text>
<rect x="17.7" y="320.8" width="10" height="10" fill="#00e8f4" stroke="#111" stroke-width="1"/>
<text x="34.0" y="330.50" font-family='"Liberation Mono", monospace' font-size="13.5" fill="#2a2a2a" stroke="#2a2a2a" stroke-width="0.25" xml:space="preserve">median RTT from Switch F </text>
<text x="255.0" y="330.50" font-family='"Liberation Mono", monospace' font-size="13.5" fill="#2a2a2a" stroke="#2a2a2a" stroke-width="0.25" xml:space="preserve">  3.0 ms av md </text>
<text x="395.0" y="330.50" font-family='"Liberation Mono", monospace' font-size="13.5" fill="#2a2a2a" stroke="#2a2a2a" stroke-width="0.25" xml:space="preserve">  0.0 % av ls</text>
<text x="518.8" y="330.50" font-family='"Liberation Mono", monospace' font-size="13.5" fill="#2a2a2a" stroke="#2a2a2a" stroke-width="0.25" xml:space="preserve">133.4 us av sd</text>
<text x="650.7" y="330.50" font-family='"Liberation Mono", monospace' font-size="13.5" fill="#2a2a2a" stroke="#2a2a2a" stroke-width="0.25" xml:space="preserve"> 22.5   am/as</text>
<rect x="17.7" y="337.1" width="10" height="10" fill="#ee0077" stroke="#111" stroke-width="1"/>
<text x="34.0" y="346.75" font-family='"Liberation Mono", monospace' font-size="13.5" fill="#2a2a2a" stroke="#2a2a2a" stroke-width="0.25" xml:space="preserve">median RTT from Swissco P2P</text>
<text x="271.2" y="346.75" font-family='"Liberation Mono", monospace' font-size="13.5" fill="#2a2a2a" stroke="#2a2a2a" stroke-width="0.25" xml:space="preserve">  3.7 ms av md </text>
<text x="411.2" y="346.75" font-family='"Liberation Mono", monospace' font-size="13.5" fill="#2a2a2a" stroke="#2a2a2a" stroke-width="0.25" xml:space="preserve">  0.0 % av ls</text>
<text x="535.0" y="346.75" font-family='"Liberation Mono", monospace' font-size="13.5" fill="#2a2a2a" stroke="#2a2a2a" stroke-width="0.25" xml:space="preserve">155.6 us av sd</text>
<text x="666.9" y="346.75" font-family='"Liberation Mono", monospace' font-size="13.5" fill="#2a2a2a" stroke="#2a2a2a" stroke-width="0.25" xml:space="preserve"> 23.9   am/as</text>
<rect x="17.7" y="353.3" width="10" height="10" fill="#0061ee" stroke="#111" stroke-width="1"/>
<text x="34.0" y="363.00" font-family='"Liberation Mono", monospace' font-size="13.5" fill="#2a2a2a" stroke="#2a2a2a" stroke-width="0.25" xml:space="preserve">median RTT from INIT7 F  </text>
<text x="255.0" y="363.00" font-family='"Liberation Mono", monospace' font-size="13.5" fill="#2a2a2a" stroke="#2a2a2a" stroke-width="0.25" xml:space="preserve">  6.6 ms av md </text>
<text x="395.0" y="363.00" font-family='"Liberation Mono", monospace' font-size="13.5" fill="#2a2a2a" stroke="#2a2a2a" stroke-width="0.25" xml:space="preserve">  0.0 % av ls</text>
<text x="518.8" y="363.00" font-family='"Liberation Mono", monospace' font-size="13.5" fill="#2a2a2a" stroke="#2a2a2a" stroke-width="0.25" xml:space="preserve"> 99.0 us av sd</text>
<text x="650.7" y="363.00" font-family='"Liberation Mono", monospace' font-size="13.5" fill="#2a2a2a" stroke="#2a2a2a" stroke-width="0.25" xml:space="preserve"> 66.8   am/as</text>
<rect x="17.7" y="369.6" width="10" height="10" fill="#cce000" stroke="#111" stroke-width="1"/>
<text x="34.0" y="379.25" font-family='"Liberation Mono", monospace' font-size="13.5" fill="#2a2a2a" stroke="#2a2a2a" stroke-width="0.25" xml:space="preserve">median RTT from GGA F    </text>
<text x="255.0" y="379.25" font-family='"Liberation Mono", monospace' font-size="13.5" fill="#2a2a2a" stroke="#2a2a2a" stroke-width="0.25" xml:space="preserve">  3.8 ms av md </text>
<text x="395.0" y="379.25" font-family='"Liberation Mono", monospace' font-size="13.5" fill="#2a2a2a" stroke="#2a2a2a" stroke-width="0.25" xml:space="preserve">  0.0 % av ls</text>
<text x="518.8" y="379.25" font-family='"Liberation Mono", monospace' font-size="13.5" fill="#2a2a2a" stroke="#2a2a2a" stroke-width="0.25" xml:space="preserve">128.4 us av sd</text>
<text x="650.7" y="379.25" font-family='"Liberation Mono", monospace' font-size="13.5" fill="#2a2a2a" stroke="#2a2a2a" stroke-width="0.25" xml:space="preserve"> 29.9   am/as</text>
<text x="18" y="394.8" font-family='"Liberation Mono", monospace' font-size="13.5" fill="#2a2a2a" stroke="#2a2a2a" stroke-width="0.25" xml:space="preserve">ICMP Echo Pings (56 Bytes)</text>
<text x="786.7" y="394.8" font-family='"Liberation Mono", monospace' font-size="13.5" fill="#2a2a2a" stroke="#2a2a2a" stroke-width="0.25" text-anchor="end">Mon Sep 11 20:29:47 2023 CEST</text>
</svg>
<svg width="806" height="407" style="position:absolute;left:1146px;top:199px" shape-rendering="auto">
<rect x="0" y="0" width="806" height="407" fill="#f3f3f3"/>
<rect x="0" y="0" width="806" height="2" fill="#c9c9c9"/><rect x="0" y="0" width="2" height="407" fill="#c9c9c9"/>
<rect x="0" y="405" width="806" height="2" fill="#9a9a9a"/><rect x="804" y="0" width="2" height="407" fill="#9a9a9a"/>
<rect x="78" y="32.0" width="693.0" height="231.8" fill="#ffffff"/>
<path d="M72 252.5 H772.0" stroke="#dcdcdc" stroke-width="1" stroke-dasharray="1,1"/>
<path d="M72 241.5 H772.0" stroke="#dcdcdc" stroke-width="1" stroke-dasharray="1,1"/>
<path d="M72 229.5 H772.0" stroke="#dcdcdc" stroke-width="1" stroke-dasharray="1,1"/>
<path d="M72 218.5 H772.0" stroke="#dcdcdc" stroke-width="1" stroke-dasharray="1,1"/>
<path d="M72 195.5 H772.0" stroke="#dcdcdc" stroke-width="1" stroke-dasharray="1,1"/>
<path d="M72 183.5 H772.0" stroke="#dcdcdc" stroke-width="1" stroke-dasharray="1,1"/>
<path d="M72 172.5 H772.0" stroke="#dcdcdc" stroke-width="1" stroke-dasharray="1,1"/>
<path d="M72 160.5 H772.0" stroke="#dcdcdc" stroke-width="1" stroke-dasharray="1,1"/>
<path d="M72 137.5 H772.0" stroke="#dcdcdc" stroke-width="1" stroke-dasharray="1,1"/>
<path d="M72 126.5 H772.0" stroke="#dcdcdc" stroke-width="1" stroke-dasharray="1,1"/>
<path d="M72 114.5 H772.0" stroke="#dcdcdc" stroke-width="1" stroke-dasharray="1,1"/>
<path d="M72 103.5 H772.0" stroke="#dcdcdc" stroke-width="1" stroke-dasharray="1,1"/>
<path d="M72 80.5 H772.0" stroke="#dcdcdc" stroke-width="1" stroke-dasharray="1,1"/>
<path d="M72 68.5 H772.0" stroke="#dcdcdc" stroke-width="1" stroke-dasharray="1,1"/>
<path d="M72 57.5 H772.0" stroke="#dcdcdc" stroke-width="1" stroke-dasharray="1,1"/>
<path d="M72 45.5 H772.0" stroke="#dcdcdc" stroke-width="1" stroke-dasharray="1,1"/>
<path d="M72 264.5 H772.0" stroke="#f8c8c8" stroke-width="1" stroke-dasharray="1,1"/>
<path d="M72 206.5 H772.0" stroke="#f8c8c8" stroke-width="1" stroke-dasharray="1,1"/>
<path d="M72 149.5 H772.0" stroke="#f8c8c8" stroke-width="1" stroke-dasharray="1,1"/>
<path d="M72 91.5 H772.0" stroke="#f8c8c8" stroke-width="1" stroke-dasharray="1,1"/>
<path d="M72 34.5 H772.0" stroke="#f8c8c8" stroke-width="1" stroke-dasharray="1,1"/>
<path d="M111.5 30.0 V267.8" stroke="#f8c8c8" stroke-width="1" stroke-dasharray="1,1"/>
<path d="M146.5 30.0 V265.8" stroke="#dedede" stroke-width="1" stroke-dasharray="1,1"/>
<path d="M181.5 30.0 V267.8" stroke="#f8c8c8" stroke-width="1" stroke-dasharray="1,1"/>
<path d="M215.5 30.0 V265.8" stroke="#dedede" stroke-width="1" stroke-dasharray="1,1"/>
<path d="M250.5 30.0 V267.8" stroke="#f8c8c8" stroke-width="1" stroke-dasharray="1,1"/>
<path d="M285.5 30.0 V265.8" stroke="#dedede" stroke-width="1" stroke-dasharray="1,1"/>
<path d="M319.5 30.0 V267.8" stroke="#f8c8c8" stroke-width="1" stroke-dasharray="1,1"/>
<path d="M354.5 30.0 V265.8" stroke="#dedede" stroke-width="1" stroke-dasharray="1,1"/>
<path d="M389.5 30.0 V267.8" stroke="#f8c8c8" stroke-width="1" stroke-dasharray="1,1"/>
<path d="M423.5 30.0 V265.8" stroke="#dedede" stroke-width="1" stroke-dasharray="1,1"/>
<path d="M458.5 30.0 V267.8" stroke="#f8c8c8" stroke-width="1" stroke-dasharray="1,1"/>
<path d="M493.5 30.0 V265.8" stroke="#dedede" stroke-width="1" stroke-dasharray="1,1"/>
<path d="M527.5 30.0 V267.8" stroke="#f8c8c8" stroke-width="1" stroke-dasharray="1,1"/>
<path d="M562.5 30.0 V265.8" stroke="#dedede" stroke-width="1" stroke-dasharray="1,1"/>
<path d="M597.5 30.0 V267.8" stroke="#f8c8c8" stroke-width="1" stroke-dasharray="1,1"/>
<path d="M631.5 30.0 V265.8" stroke="#dedede" stroke-width="1" stroke-dasharray="1,1"/>
<path d="M666.5 30.0 V267.8" stroke="#f8c8c8" stroke-width="1" stroke-dasharray="1,1"/>
<path d="M701.5 30.0 V265.8" stroke="#dedede" stroke-width="1" stroke-dasharray="1,1"/>
<path d="M735.5 30.0 V267.8" stroke="#f8c8c8" stroke-width="1" stroke-dasharray="1,1"/>
<path d="M770.5 30.0 V265.8" stroke="#dedede" stroke-width="1" stroke-dasharray="1,1"/>
<rect x="94.34" y="105.21" width="5.78" height="5.02" fill="#cef8fa"/>
<rect x="105.90" y="104.82" width="5.78" height="4.84" fill="#cef8fa"/>
<rect x="111.68" y="106.63" width="5.78" height="2.00" fill="#cef8fa"/>
<rect x="117.45" y="107.35" width="5.78" height="4.40" fill="#cef8fa"/>
<rect x="134.79" y="101.73" width="5.78" height="7.79" fill="#cef8fa"/>
<rect x="163.69" y="108.92" width="5.78" height="3.51" fill="#cef8fa"/>
<rect x="181.03" y="106.64" width="5.78" height="5.37" fill="#cef8fa"/>
<rect x="198.36" y="108.63" width="5.78" height="3.08" fill="#cef8fa"/>
<rect x="204.14" y="105.42" width="5.78" height="8.52" fill="#cef8fa"/>
<rect x="209.92" y="109.69" width="5.78" height="2.22" fill="#cef8fa"/>
<rect x="215.70" y="103.16" width="5.78" height="5.17" fill="#cef8fa"/>
<rect x="227.26" y="102.80" width="5.78" height="4.03" fill="#cef8fa"/>
<rect x="233.04" y="105.75" width="5.78" height="5.05" fill="#cef8fa"/>
<rect x="238.82" y="99.15" width="5.78" height="8.50" fill="#cef8fa"/>
<rect x="256.15" y="95.57" width="5.78" height="9.61" fill="#cef8fa"/>
<rect x="273.49" y="104.47" width="5.78" height="2.00" fill="#cef8fa"/>
<rect x="279.27" y="99.40" width="5.78" height="7.15" fill="#cef8fa"/>
<rect x="325.50" y="105.81" width="5.78" height="3.86" fill="#cef8fa"/>
<rect x="331.28" y="105.69" width="5.78" height="5.22" fill="#cef8fa"/>
<rect x="337.06" y="101.38" width="5.78" height="11.18" fill="#cef8fa"/>
<rect x="342.84" y="101.03" width="5.78" height="5.94" fill="#cef8fa"/>
<rect x="348.62" y="96.04" width="5.78" height="7.80" fill="#cef8fa"/>
<rect x="354.40" y="100.30" width="5.78" height="10.06" fill="#cef8fa"/>
<rect x="360.18" y="100.38" width="5.78" height="10.11" fill="#cef8fa"/>
<rect x="383.30" y="98.97" width="5.78" height="8.37" fill="#cef8fa"/>
<rect x="394.85" y="103.41" width="5.78" height="4.40" fill="#cef8fa"/>
<rect x="423.75" y="102.64" width="5.78" height="4.39" fill="#cef8fa"/>
<rect x="441.09" y="100.79" width="5.78" height="2.00" fill="#cef8fa"/>
<rect x="458.42" y="102.53" width="5.78" height="5.07" fill="#cef8fa"/>
<rect x="464.20" y="108.19" width="5.78" height="2.00" fill="#cef8fa"/>
<rect x="469.98" y="107.83" width="5.78" height="2.29" fill="#cef8fa"/>
<rect x="481.54" y="101.23" width="5.78" height="2.83" fill="#cef8fa"/>
<rect x="487.32" y="102.61" width="5.78" height="2.00" fill="#cef8fa"/>
<rect x="498.88" y="106.64" width="5.78" height="5.60" fill="#cef8fa"/>
<rect x="516.22" y="100.07" width="5.78" height="2.05" fill="#cef8fa"/>
<rect x="533.55" y="104.23" width="5.78" height="5.97" fill="#cef8fa"/>
<rect x="545.11" y="101.99" width="5.78" height="4.26" fill="#cef8fa"/>
<rect x="550.89" y="100.29" width="5.78" height="3.85" fill="#cef8fa"/>
<rect x="556.67" y="96.03" width="5.78" height="8.65" fill="#cef8fa"/>
<rect x="562.45" y="98.40" width="5.78" height="3.38" fill="#cef8fa"/>
<rect x="568.23" y="100.60" width="5.78" height="3.33" fill="#cef8fa"/>
<rect x="574.01" y="101.43" width="5.78" height="5.72" fill="#cef8fa"/>
<rect x="579.79" y="102.17" width="5.78" height="2.11" fill="#cef8fa"/>
<rect x="591.35" y="100.97" width="5.78" height="3.77" fill="#cef8fa"/>
<rect x="602.90" y="100.23" width="5.78" height="5.41" fill="#cef8fa"/>
<rect x="608.68" y="103.43" width="5.78" height="3.57" fill="#cef8fa"/>
<rect x="614.46" y="98.67" width="5.78" height="9.23" fill="#cef8fa"/>
<rect x="620.24" y="101.87" width="5.78" height="3.71" fill="#cef8fa"/>
<rect x="631.80" y="95.88" width="5.78" height="10.39" fill="#cef8fa"/>
<rect x="643.36" y="95.12" width="5.78" height="8.67" fill="#cef8fa"/>
<rect x="649.14" y="96.54" width="5.78" height="5.28" fill="#cef8fa"/>
<rect x="654.92" y="102.21" width="5.78" height="4.30" fill="#cef8fa"/>
<rect x="695.37" y="102.34" width="5.78" height="2.15" fill="#cef8fa"/>
<rect x="706.93" y="97.68" width="5.78" height="4.04" fill="#cef8fa"/>
<rect x="730.05" y="99.76" width="5.78" height="7.07" fill="#cef8fa"/>
<rect x="747.38" y="92.47" width="5.78" height="13.76" fill="#cef8fa"/>
<rect x="637.58" y="94.08" width="5.78" height="34.56" fill="#cef8fa"/>
<rect x="77.00" y="82.90" width="5.78" height="8.42" fill="#d2ecd2"/>
<rect x="88.56" y="83.74" width="5.78" height="7.78" fill="#d2ecd2"/>
<rect x="105.90" y="85.90" width="5.78" height="2.00" fill="#d2ecd2"/>
<rect x="111.68" y="81.13" width="5.78" height="8.61" fill="#d2ecd2"/>
<rect x="123.23" y="86.82" width="5.78" height="3.08" fill="#d2ecd2"/>
<rect x="134.79" y="83.92" width="5.78" height="8.66" fill="#d2ecd2"/>
<rect x="163.69" y="79.83" width="5.78" height="10.89" fill="#d2ecd2"/>
<rect x="181.03" y="80.79" width="5.78" height="8.65" fill="#d2ecd2"/>
<rect x="186.80" y="86.02" width="5.78" height="2.00" fill="#d2ecd2"/>
<rect x="192.58" y="83.51" width="5.78" height="13.19" fill="#d2ecd2"/>
<rect x="215.70" y="87.05" width="5.78" height="6.39" fill="#d2ecd2"/>
<rect x="221.48" y="85.82" width="5.78" height="5.72" fill="#d2ecd2"/>
<rect x="233.04" y="85.44" width="5.78" height="5.18" fill="#d2ecd2"/>
<rect x="238.82" y="87.13" width="5.78" height="4.18" fill="#d2ecd2"/>
<rect x="267.71" y="83.88" width="5.78" height="13.29" fill="#d2ecd2"/>
<rect x="273.49" y="88.49" width="5.78" height="4.80" fill="#d2ecd2"/>
<rect x="290.83" y="86.89" width="5.78" height="2.00" fill="#d2ecd2"/>
<rect x="313.95" y="86.23" width="5.78" height="10.90" fill="#d2ecd2"/>
<rect x="325.50" y="78.87" width="5.78" height="12.39" fill="#d2ecd2"/>
<rect x="331.28" y="86.24" width="5.78" height="2.00" fill="#d2ecd2"/>
<rect x="337.06" y="83.07" width="5.78" height="6.84" fill="#d2ecd2"/>
<rect x="360.18" y="80.18" width="5.78" height="14.47" fill="#d2ecd2"/>
<rect x="377.52" y="88.47" width="5.78" height="6.11" fill="#d2ecd2"/>
<rect x="383.30" y="88.08" width="5.78" height="2.86" fill="#d2ecd2"/>
<rect x="389.07" y="84.28" width="5.78" height="6.63" fill="#d2ecd2"/>
<rect x="394.85" y="89.84" width="5.78" height="2.00" fill="#d2ecd2"/>
<rect x="435.31" y="88.06" width="5.78" height="4.03" fill="#d2ecd2"/>
<rect x="458.42" y="88.14" width="5.78" height="2.00" fill="#d2ecd2"/>
<rect x="464.20" y="86.72" width="5.78" height="6.45" fill="#d2ecd2"/>
<rect x="475.76" y="86.94" width="5.78" height="7.86" fill="#d2ecd2"/>
<rect x="481.54" y="88.71" width="5.78" height="6.44" fill="#d2ecd2"/>
<rect x="498.88" y="84.46" width="5.78" height="6.56" fill="#d2ecd2"/>
<rect x="539.33" y="82.93" width="5.78" height="8.99" fill="#d2ecd2"/>
<rect x="562.45" y="87.50" width="5.78" height="3.42" fill="#d2ecd2"/>
<rect x="568.23" y="78.22" width="5.78" height="9.96" fill="#d2ecd2"/>
<rect x="579.79" y="88.08" width="5.78" height="3.37" fill="#d2ecd2"/>
<rect x="591.35" y="84.02" width="5.78" height="6.03" fill="#d2ecd2"/>
<rect x="597.12" y="83.63" width="5.78" height="5.60" fill="#d2ecd2"/>
<rect x="620.24" y="82.35" width="5.78" height="6.41" fill="#d2ecd2"/>
<rect x="631.80" y="84.14" width="5.78" height="10.09" fill="#d2ecd2"/>
<rect x="637.58" y="91.35" width="5.78" height="4.13" fill="#d2ecd2"/>
<rect x="649.14" y="87.35" width="5.78" height="5.06" fill="#d2ecd2"/>
<rect x="654.92" y="87.20" width="5.78" height="4.32" fill="#d2ecd2"/>
<rect x="666.47" y="89.12" width="5.78" height="2.36" fill="#d2ecd2"/>
<rect x="683.81" y="85.58" width="5.78" height="8.43" fill="#d2ecd2"/>
<rect x="695.37" y="86.26" width="5.78" height="6.54" fill="#d2ecd2"/>
<rect x="730.05" y="84.58" width="5.78" height="5.32" fill="#d2ecd2"/>
<rect x="82.78" y="83.49" width="5.78" height="4.15" fill="#d2e2fa"/>
<rect x="88.56" y="80.77" width="5.78" height="2.29" fill="#d2e2fa"/>
<rect x="94.34" y="82.50" width="5.78" height="3.34" fill="#d2e2fa"/>
<rect x="100.12" y="80.21" width="5.78" height="2.91" fill="#d2e2fa"/>
<rect x="129.01" y="80.46" width="5.78" height="5.58" fill="#d2e2fa"/>
<rect x="134.79" y="80.38" width="5.78" height="3.30" fill="#d2e2fa"/>
<rect x="146.35" y="76.01" width="5.78" height="5.61" fill="#d2e2fa"/>
<rect x="157.91" y="74.18" width="5.78" height="10.38" fill="#d2e2fa"/>
<rect x="181.03" y="82.29" width="5.78" height="5.32" fill="#d2e2fa"/>
<rect x="192.58" y="80.93" width="5.78" height="4.73" fill="#d2e2fa"/>
<rect x="204.14" y="82.85" width="5.78" height="3.54" fill="#d2e2fa"/>
<rect x="215.70" y="84.53" width="5.78" height="2.00" fill="#d2e2fa"/>
<rect x="221.48" y="77.58" width="5.78" height="7.58" fill="#d2e2fa"/>
<rect x="227.26" y="75.40" width="5.78" height="6.00" fill="#d2e2fa"/>
<rect x="233.04" y="80.32" width="5.78" height="6.38" fill="#d2e2fa"/>
<rect x="238.82" y="83.33" width="5.78" height="4.40" fill="#d2e2fa"/>
<rect x="267.71" y="79.67" width="5.78" height="5.10" fill="#d2e2fa"/>
<rect x="308.17" y="81.26" width="5.78" height="5.25" fill="#d2e2fa"/>
<rect x="325.50" y="85.08" width="5.78" height="6.71" fill="#d2e2fa"/>
<rect x="337.06" y="78.01" width="5.78" height="7.13" fill="#d2e2fa"/>
<rect x="348.62" y="80.80" width="5.78" height="4.07" fill="#d2e2fa"/>
<rect x="365.96" y="81.12" width="5.78" height="2.00" fill="#d2e2fa"/>
<rect x="377.52" y="85.50" width="5.78" height="2.00" fill="#d2e2fa"/>
<rect x="383.30" y="83.28" width="5.78" height="2.00" fill="#d2e2fa"/>
<rect x="389.07" y="80.24" width="5.78" height="6.96" fill="#d2e2fa"/>
<rect x="394.85" y="80.64" width="5.78" height="2.80" fill="#d2e2fa"/>
<rect x="400.63" y="82.19" width="5.78" height="3.39" fill="#d2e2fa"/>
<rect x="406.41" y="83.08" width="5.78" height="2.46" fill="#d2e2fa"/>
<rect x="412.19" y="83.91" width="5.78" height="2.00" fill="#d2e2fa"/>
<rect x="423.75" y="82.83" width="5.78" height="2.00" fill="#d2e2fa"/>
<rect x="429.53" y="85.80" width="5.78" height="2.00" fill="#d2e2fa"/>
<rect x="435.31" y="84.33" width="5.78" height="4.47" fill="#d2e2fa"/>
<rect x="446.87" y="83.10" width="5.78" height="3.23" fill="#d2e2fa"/>
<rect x="458.42" y="84.28" width="5.78" height="2.62" fill="#d2e2fa"/>
<rect x="464.20" y="85.83" width="5.78" height="2.00" fill="#d2e2fa"/>
<rect x="469.98" y="82.52" width="5.78" height="4.94" fill="#d2e2fa"/>
<rect x="475.76" y="79.38" width="5.78" height="5.52" fill="#d2e2fa"/>
<rect x="481.54" y="77.56" width="5.78" height="5.29" fill="#d2e2fa"/>
<rect x="487.32" y="80.59" width="5.78" height="4.17" fill="#d2e2fa"/>
<rect x="498.88" y="85.21" width="5.78" height="3.48" fill="#d2e2fa"/>
<rect x="510.44" y="81.47" width="5.78" height="7.40" fill="#d2e2fa"/>
<rect x="545.11" y="79.03" width="5.78" height="7.05" fill="#d2e2fa"/>
<rect x="562.45" y="79.43" width="5.78" height="4.60" fill="#d2e2fa"/>
<rect x="568.23" y="84.16" width="5.78" height="2.46" fill="#d2e2fa"/>
<rect x="574.01" y="81.55" width="5.78" height="2.00" fill="#d2e2fa"/>
<rect x="585.57" y="80.66" width="5.78" height="5.90" fill="#d2e2fa"/>
<rect x="597.12" y="79.12" width="5.78" height="4.78" fill="#d2e2fa"/>
<rect x="602.90" y="82.51" width="5.78" height="2.00" fill="#d2e2fa"/>
<rect x="608.68" y="87.27" width="5.78" height="2.00" fill="#d2e2fa"/>
<rect x="614.46" y="84.17" width="5.78" height="2.00" fill="#d2e2fa"/>
<rect x="631.80" y="84.00" width="5.78" height="2.30" fill="#d2e2fa"/>
<rect x="643.36" y="84.44" width="5.78" height="6.87" fill="#d2e2fa"/>
<rect x="649.14" y="79.79" width="5.78" height="3.60" fill="#d2e2fa"/>
<rect x="666.47" y="77.80" width="5.78" height="6.58" fill="#d2e2fa"/>
<rect x="683.81" y="83.31" width="5.78" height="2.00" fill="#d2e2fa"/>
<rect x="689.59" y="81.36" width="5.78" height="2.52" fill="#d2e2fa"/>
<rect x="695.37" y="80.35" width="5.78" height="4.49" fill="#d2e2fa"/>
<rect x="724.27" y="79.52" width="5.78" height="6.22" fill="#d2e2fa"/>
<rect x="735.83" y="85.28" width="5.78" height="2.00" fill="#d2e2fa"/>
<rect x="741.60" y="78.51" width="5.78" height="9.90" fill="#d2e2fa"/>
<rect x="753.16" y="82.65" width="5.78" height="5.89" fill="#d2e2fa"/>
<rect x="82.78" y="65.54" width="5.78" height="2.00" fill="#f9d2e4"/>
<rect x="94.34" y="56.65" width="5.78" height="9.07" fill="#f9d2e4"/>
<rect x="100.12" y="57.97" width="5.78" height="2.00" fill="#f9d2e4"/>
<rect x="117.45" y="60.78" width="5.78" height="6.77" fill="#f9d2e4"/>
<rect x="123.23" y="64.93" width="5.78" height="4.87" fill="#f9d2e4"/>
<rect x="129.01" y="63.99" width="5.78" height="4.51" fill="#f9d2e4"/>
<rect x="134.79" y="53.73" width="5.78" height="14.41" fill="#f9d2e4"/>
<rect x="140.57" y="62.57" width="5.78" height="4.73" fill="#f9d2e4"/>
<rect x="146.35" y="52.36" width="5.78" height="9.17" fill="#f9d2e4"/>
<rect x="152.13" y="55.20" width="5.78" height="5.76" fill="#f9d2e4"/>
<rect x="175.25" y="60.37" width="5.78" height="6.60" fill="#f9d2e4"/>
<rect x="192.58" y="55.37" width="5.78" height="3.12" fill="#f9d2e4"/>
<rect x="198.36" y="59.86" width="5.78" height="9.97" fill="#f9d2e4"/>
<rect x="204.14" y="65.94" width="5.78" height="2.15" fill="#f9d2e4"/>
<rect x="209.92" y="67.72" width="5.78" height="2.00" fill="#f9d2e4"/>
<rect x="215.70" y="58.69" width="5.78" height="7.47" fill="#f9d2e4"/>
<rect x="221.48" y="57.61" width="5.78" height="8.27" fill="#f9d2e4"/>
<rect x="233.04" y="57.36" width="5.78" height="10.11" fill="#f9d2e4"/>
<rect x="250.38" y="62.58" width="5.78" height="5.46" fill="#f9d2e4"/>
<rect x="256.15" y="56.93" width="5.78" height="10.81" fill="#f9d2e4"/>
<rect x="261.93" y="64.36" width="5.78" height="2.00" fill="#f9d2e4"/>
<rect x="279.27" y="49.23" width="5.78" height="18.89" fill="#f9d2e4"/>
<rect x="302.39" y="58.11" width="5.78" height="3.84" fill="#f9d2e4"/>
<rect x="308.17" y="54.62" width="5.78" height="8.69" fill="#f9d2e4"/>
<rect x="313.95" y="63.46" width="5.78" height="3.40" fill="#f9d2e4"/>
<rect x="319.72" y="63.60" width="5.78" height="4.76" fill="#f9d2e4"/>
<rect x="331.28" y="57.13" width="5.78" height="10.01" fill="#f9d2e4"/>
<rect x="342.84" y="58.51" width="5.78" height="2.23" fill="#f9d2e4"/>
<rect x="348.62" y="60.89" width="5.78" height="9.85" fill="#f9d2e4"/>
<rect x="354.40" y="62.51" width="5.78" height="10.48" fill="#f9d2e4"/>
<rect x="365.96" y="65.01" width="5.78" height="8.96" fill="#f9d2e4"/>
<rect x="394.85" y="59.07" width="5.78" height="4.13" fill="#f9d2e4"/>
<rect x="406.41" y="58.41" width="5.78" height="4.27" fill="#f9d2e4"/>
<rect x="423.75" y="62.41" width="5.78" height="4.62" fill="#f9d2e4"/>
<rect x="429.53" y="58.51" width="5.78" height="9.45" fill="#f9d2e4"/>
<rect x="441.09" y="58.11" width="5.78" height="7.76" fill="#f9d2e4"/>
<rect x="452.65" y="56.90" width="5.78" height="9.49" fill="#f9d2e4"/>
<rect x="469.98" y="57.27" width="5.78" height="9.30" fill="#f9d2e4"/>
<rect x="475.76" y="63.18" width="5.78" height="4.33" fill="#f9d2e4"/>
<rect x="481.54" y="60.76" width="5.78" height="5.46" fill="#f9d2e4"/>
<rect x="487.32" y="59.65" width="5.78" height="3.81" fill="#f9d2e4"/>
<rect x="493.10" y="62.52" width="5.78" height="4.85" fill="#f9d2e4"/>
<rect x="498.88" y="55.69" width="5.78" height="8.23" fill="#f9d2e4"/>
<rect x="504.66" y="56.40" width="5.78" height="5.43" fill="#f9d2e4"/>
<rect x="522.00" y="55.78" width="5.78" height="8.03" fill="#f9d2e4"/>
<rect x="539.33" y="58.63" width="5.78" height="10.43" fill="#f9d2e4"/>
<rect x="545.11" y="61.19" width="5.78" height="2.47" fill="#f9d2e4"/>
<rect x="562.45" y="60.76" width="5.78" height="7.74" fill="#f9d2e4"/>
<rect x="568.23" y="62.37" width="5.78" height="10.62" fill="#f9d2e4"/>
<rect x="574.01" y="60.44" width="5.78" height="2.49" fill="#f9d2e4"/>
<rect x="579.79" y="60.65" width="5.78" height="2.00" fill="#f9d2e4"/>
<rect x="585.57" y="60.55" width="5.78" height="2.00" fill="#f9d2e4"/>
<rect x="591.35" y="60.29" width="5.78" height="4.02" fill="#f9d2e4"/>
<rect x="602.90" y="56.09" width="5.78" height="13.61" fill="#f9d2e4"/>
<rect x="614.46" y="59.33" width="5.78" height="8.44" fill="#f9d2e4"/>
<rect x="620.24" y="56.14" width="5.78" height="4.38" fill="#f9d2e4"/>
<rect x="626.02" y="50.79" width="5.78" height="2.00" fill="#f9d2e4"/>
<rect x="631.80" y="41.99" width="5.78" height="8.67" fill="#f9d2e4"/>
<rect x="637.58" y="62.01" width="5.78" height="4.20" fill="#f9d2e4"/>
<rect x="649.14" y="50.77" width="5.78" height="7.10" fill="#f9d2e4"/>
<rect x="660.70" y="65.06" width="5.78" height="5.95" fill="#f9d2e4"/>
<rect x="678.03" y="54.46" width="5.78" height="3.91" fill="#f9d2e4"/>
<rect x="683.81" y="62.62" width="5.78" height="2.55" fill="#f9d2e4"/>
<rect x="689.59" y="44.82" width="5.78" height="13.27" fill="#f9d2e4"/>
<rect x="706.93" y="54.43" width="5.78" height="6.34" fill="#f9d2e4"/>
<rect x="712.71" y="55.98" width="5.78" height="4.13" fill="#f9d2e4"/>
<rect x="724.27" y="55.78" width="5.78" height="3.43" fill="#f9d2e4"/>
<rect x="735.83" y="57.51" width="5.78" height="7.87" fill="#f9d2e4"/>
<rect x="741.60" y="53.13" width="5.78" height="13.57" fill="#f9d2e4"/>
<rect x="747.38" y="45.03" width="5.78" height="11.40" fill="#f9d2e4"/>
<rect x="77.00" y="45.89" width="5.78" height="5.51" fill="#eef4cc"/>
<rect x="88.56" y="49.44" width="5.78" height="4.16" fill="#eef4cc"/>
<rect x="100.12" y="41.92" width="5.78" height="9.29" fill="#eef4cc"/>
<rect x="105.90" y="41.53" width="5.78" height="14.24" fill="#eef4cc"/>
<rect x="117.45" y="47.07" width="5.78" height="4.89" fill="#eef4cc"/>
<rect x="129.01" y="49.56" width="5.78" height="9.54" fill="#eef4cc"/>
<rect x="157.91" y="47.29" width="5.78" height="4.70" fill="#eef4cc"/>
<rect x="163.69" y="42.59" width="5.78" height="13.96" fill="#eef4cc"/>
<rect x="192.58" y="50.49" width="5.78" height="4.67" fill="#eef4cc"/>
<rect x="198.36" y="45.47" width="5.78" height="4.61" fill="#eef4cc"/>
<rect x="204.14" y="48.89" width="5.78" height="2.04" fill="#eef4cc"/>
<rect x="209.92" y="45.82" width="5.78" height="2.97" fill="#eef4cc"/>
<rect x="215.70" y="45.90" width="5.78" height="5.52" fill="#eef4cc"/>
<rect x="233.04" y="49.01" width="5.78" height="2.00" fill="#eef4cc"/>
<rect x="238.82" y="42.64" width="5.78" height="8.31" fill="#eef4cc"/>
<rect x="244.60" y="49.11" width="5.78" height="2.61" fill="#eef4cc"/>
<rect x="273.49" y="46.54" width="5.78" height="4.46" fill="#eef4cc"/>
<rect x="296.61" y="51.28" width="5.78" height="7.10" fill="#eef4cc"/>
<rect x="302.39" y="47.33" width="5.78" height="5.63" fill="#eef4cc"/>
<rect x="313.95" y="47.42" width="5.78" height="3.97" fill="#eef4cc"/>
<rect x="319.72" y="44.84" width="5.78" height="3.94" fill="#eef4cc"/>
<rect x="325.50" y="45.90" width="5.78" height="2.00" fill="#eef4cc"/>
<rect x="331.28" y="45.34" width="5.78" height="8.72" fill="#eef4cc"/>
<rect x="337.06" y="47.15" width="5.78" height="6.87" fill="#eef4cc"/>
<rect x="360.18" y="46.80" width="5.78" height="3.62" fill="#eef4cc"/>
<rect x="365.96" y="42.06" width="5.78" height="4.65" fill="#eef4cc"/>
<rect x="371.74" y="47.44" width="5.78" height="2.00" fill="#eef4cc"/>
<rect x="377.52" y="45.42" width="5.78" height="6.68" fill="#eef4cc"/>
<rect x="400.63" y="45.78" width="5.78" height="7.70" fill="#eef4cc"/>
<rect x="412.19" y="46.68" width="5.78" height="6.80" fill="#eef4cc"/>
<rect x="423.75" y="48.31" width="5.78" height="4.81" fill="#eef4cc"/>
<rect x="441.09" y="45.34" width="5.78" height="11.06" fill="#eef4cc"/>
<rect x="446.87" y="46.80" width="5.78" height="8.13" fill="#eef4cc"/>
<rect x="458.42" y="48.65" width="5.78" height="2.00" fill="#eef4cc"/>
<rect x="469.98" y="41.21" width="5.78" height="10.27" fill="#eef4cc"/>
<rect x="475.76" y="46.96" width="5.78" height="4.52" fill="#eef4cc"/>
<rect x="481.54" y="45.45" width="5.78" height="7.75" fill="#eef4cc"/>
<rect x="487.32" y="44.29" width="5.78" height="3.56" fill="#eef4cc"/>
<rect x="493.10" y="46.08" width="5.78" height="2.86" fill="#eef4cc"/>
<rect x="504.66" y="47.38" width="5.78" height="3.50" fill="#eef4cc"/>
<rect x="510.44" y="47.72" width="5.78" height="6.97" fill="#eef4cc"/>
<rect x="516.22" y="50.09" width="5.78" height="5.72" fill="#eef4cc"/>
<rect x="527.77" y="48.83" width="5.78" height="2.50" fill="#eef4cc"/>
<rect x="533.55" y="43.74" width="5.78" height="4.75" fill="#eef4cc"/>
<rect x="545.11" y="46.53" width="5.78" height="3.02" fill="#eef4cc"/>
<rect x="550.89" y="48.49" width="5.78" height="7.56" fill="#eef4cc"/>
<rect x="556.67" y="48.11" width="5.78" height="2.74" fill="#eef4cc"/>
<rect x="568.23" y="49.74" width="5.78" height="2.00" fill="#eef4cc"/>
<rect x="585.57" y="48.65" width="5.78" height="2.82" fill="#eef4cc"/>
<rect x="626.02" y="48.82" width="5.78" height="2.49" fill="#eef4cc"/>
<rect x="643.36" y="49.08" width="5.78" height="2.00" fill="#eef4cc"/>
<rect x="666.47" y="43.42" width="5.78" height="5.52" fill="#eef4cc"/>
<rect x="683.81" y="46.41" width="5.78" height="6.52" fill="#eef4cc"/>
<rect x="689.59" y="45.27" width="5.78" height="5.82" fill="#eef4cc"/>
<rect x="695.37" y="41.30" width="5.78" height="6.52" fill="#eef4cc"/>
<rect x="718.49" y="49.40" width="5.78" height="3.51" fill="#eef4cc"/>
<rect x="724.27" y="43.52" width="5.78" height="6.12" fill="#eef4cc"/>
<rect x="730.05" y="41.14" width="5.78" height="10.32" fill="#eef4cc"/>
<rect x="735.83" y="46.17" width="5.78" height="4.07" fill="#eef4cc"/>
<rect x="753.16" y="42.64" width="5.78" height="6.66" fill="#eef4cc"/>
<rect x="758.94" y="39.32" width="5.78" height="11.82" fill="#eef4cc"/>
<rect x="94.34" y="243.12" width="5.78" height="2.00" fill="#cef8fa"/>
<rect x="111.68" y="242.12" width="5.78" height="5.78" fill="#cef8fa"/>
<rect x="123.23" y="244.32" width="5.78" height="2.00" fill="#cef8fa"/>
<rect x="134.79" y="244.52" width="5.78" height="2.00" fill="#cef8fa"/>
<rect x="140.57" y="245.28" width="5.78" height="2.11" fill="#cef8fa"/>
<rect x="146.35" y="241.22" width="5.78" height="5.05" fill="#cef8fa"/>
<rect x="152.13" y="243.84" width="5.78" height="2.24" fill="#cef8fa"/>
<rect x="169.47" y="244.23" width="5.78" height="2.28" fill="#cef8fa"/>
<rect x="181.03" y="244.96" width="5.78" height="2.35" fill="#cef8fa"/>
<rect x="204.14" y="244.19" width="5.78" height="4.79" fill="#cef8fa"/>
<rect x="209.92" y="243.20" width="5.78" height="2.00" fill="#cef8fa"/>
<rect x="215.70" y="239.38" width="5.78" height="2.86" fill="#cef8fa"/>
<rect x="227.26" y="237.20" width="5.78" height="3.21" fill="#cef8fa"/>
<rect x="250.38" y="243.65" width="5.78" height="2.00" fill="#cef8fa"/>
<rect x="256.15" y="241.43" width="5.78" height="3.40" fill="#cef8fa"/>
<rect x="261.93" y="243.18" width="5.78" height="2.49" fill="#cef8fa"/>
<rect x="279.27" y="242.69" width="5.78" height="2.26" fill="#cef8fa"/>
<rect x="319.72" y="241.86" width="5.78" height="3.07" fill="#cef8fa"/>
<rect x="337.06" y="243.29" width="5.78" height="2.20" fill="#cef8fa"/>
<rect x="342.84" y="243.85" width="5.78" height="2.00" fill="#cef8fa"/>
<rect x="348.62" y="243.71" width="5.78" height="2.00" fill="#cef8fa"/>
<rect x="354.40" y="243.64" width="5.78" height="2.05" fill="#cef8fa"/>
<rect x="394.85" y="238.85" width="5.78" height="4.48" fill="#cef8fa"/>
<rect x="400.63" y="242.58" width="5.78" height="5.95" fill="#cef8fa"/>
<rect x="417.97" y="241.88" width="5.78" height="3.69" fill="#cef8fa"/>
<rect x="423.75" y="245.30" width="5.78" height="2.00" fill="#cef8fa"/>
<rect x="429.53" y="243.35" width="5.78" height="5.01" fill="#cef8fa"/>
<rect x="446.87" y="242.37" width="5.78" height="2.65" fill="#cef8fa"/>
<rect x="458.42" y="245.04" width="5.78" height="2.79" fill="#cef8fa"/>
<rect x="464.20" y="245.83" width="5.78" height="2.00" fill="#cef8fa"/>
<rect x="475.76" y="244.59" width="5.78" height="2.52" fill="#cef8fa"/>
<rect x="504.66" y="241.97" width="5.78" height="2.40" fill="#cef8fa"/>
<rect x="522.00" y="244.34" width="5.78" height="3.57" fill="#cef8fa"/>
<rect x="539.33" y="243.04" width="5.78" height="2.00" fill="#cef8fa"/>
<rect x="545.11" y="242.07" width="5.78" height="4.02" fill="#cef8fa"/>
<rect x="556.67" y="245.32" width="5.78" height="2.00" fill="#cef8fa"/>
<rect x="562.45" y="244.79" width="5.78" height="2.00" fill="#cef8fa"/>
<rect x="574.01" y="240.79" width="5.78" height="3.18" fill="#cef8fa"/>
<rect x="585.57" y="242.36" width="5.78" height="3.06" fill="#cef8fa"/>
<rect x="602.90" y="243.28" width="5.78" height="2.00" fill="#cef8fa"/>
<rect x="608.68" y="245.28" width="5.78" height="2.00" fill="#cef8fa"/>
<rect x="620.24" y="244.09" width="5.78" height="2.04" fill="#cef8fa"/>
<rect x="631.80" y="243.75" width="5.78" height="2.00" fill="#cef8fa"/>
<rect x="637.58" y="244.83" width="5.78" height="5.40" fill="#cef8fa"/>
<rect x="649.14" y="241.45" width="5.78" height="4.96" fill="#cef8fa"/>
<rect x="654.92" y="244.47" width="5.78" height="2.00" fill="#cef8fa"/>
<rect x="660.70" y="244.94" width="5.78" height="2.00" fill="#cef8fa"/>
<rect x="672.25" y="244.88" width="5.78" height="2.00" fill="#cef8fa"/>
<rect x="678.03" y="245.13" width="5.78" height="2.00" fill="#cef8fa"/>
<rect x="689.59" y="242.84" width="5.78" height="2.00" fill="#cef8fa"/>
<rect x="701.15" y="243.03" width="5.78" height="4.01" fill="#cef8fa"/>
<rect x="712.71" y="244.16" width="5.78" height="2.31" fill="#cef8fa"/>
<rect x="724.27" y="245.25" width="5.78" height="2.37" fill="#cef8fa"/>
<rect x="730.05" y="245.03" width="5.78" height="2.00" fill="#cef8fa"/>
<rect x="735.83" y="243.03" width="5.78" height="5.50" fill="#cef8fa"/>
<rect x="741.60" y="244.32" width="5.78" height="2.00" fill="#cef8fa"/>
<rect x="753.16" y="244.77" width="5.78" height="2.00" fill="#cef8fa"/>
<path d="M77.50 107.00H83.28V107.00H89.06V107.00H94.84V108.00H100.62V108.00H106.40V106.00H112.18V107.00H117.95V108.00H123.73V108.00H129.51V107.00H135.29V107.00H141.07V107.00H146.85V109.00H152.63V109.00H158.41V110.00H164.19V109.00H169.97V110.00H175.75V110.00H181.53V110.00H187.30V111.00H193.08V110.00H198.86V110.00H204.64V108.00H210.42V111.00H216.20V104.00H221.98V103.00H227.76V105.00H233.54V107.00H239.32V104.00H245.10V101.00H250.88V101.00H256.65V103.00H262.43V104.00H268.21V104.00H273.99V106.00H279.77V106.00H285.55V105.00H291.33V105.00H297.11V103.00H302.89V103.00H308.67V102.00H314.45V101.00H320.22V103.00H326.00V109.00H331.78V109.00H337.56V109.00H343.34V104.00H349.12V102.00H354.90V107.00H360.68V104.00H366.46V104.00H372.24V101.00H378.02V101.00H383.80V101.00H389.57V103.00H395.35V104.00H401.13V104.00H406.91V107.00H412.69V104.00H418.47V104.00H424.25V105.00H430.03V103.00H435.81V103.00H441.59V102.00H447.37V104.00H453.15V104.00H458.92V106.00H464.70V108.00H470.48V108.00H476.26V104.00H482.04V102.00H487.82V104.00H493.60V106.00H499.38V108.00H505.16V104.00H510.94V103.00H516.72V101.00H522.50V101.00H528.27V103.00H534.05V105.00H539.83V103.00H545.61V103.00H551.39V103.00H557.17V102.00H562.95V101.00H568.73V103.00H574.51V104.00H580.29V104.00H586.07V101.00H591.85V103.00H597.62V103.00H603.40V105.00H609.18V104.00H614.96V103.00H620.74V102.00H626.52V102.00H632.30V103.00H638.08V103.00H643.86V103.00H649.64V101.00H655.42V103.00H661.20V106.00H666.97V101.00H672.75V103.00H678.53V104.00H684.31V103.00H690.09V103.00H695.87V103.00H701.65V103.00H707.43V100.00H713.21V100.00H718.99V100.00H724.77V102.00H730.55V103.00H736.33V103.00H742.10V104.00H747.88V100.00H753.66V103.00H759.44" fill="none" stroke="#3ce8f4" stroke-width="2" stroke-linejoin="miter"/>
<path d="M77.50 87.00H83.28V87.00H89.06V88.00H94.84V87.00H100.62V87.00H106.40V87.00H112.18V87.00H117.95V87.00H123.73V87.00H129.51V88.00H135.29V87.00H141.07V87.00H146.85V81.00H152.63V83.00H158.41V87.00H164.19V86.00H169.97V85.00H175.75V88.00H181.53V87.00H187.30V87.00H193.08V91.00H198.86V92.00H204.64V92.00H210.42V89.00H216.20V89.00H221.98V89.00H227.76V86.00H233.54V89.00H239.32V89.00H245.10V89.00H250.88V90.00H256.65V91.00H262.43V89.00H268.21V89.00H273.99V89.00H279.77V87.00H285.55V89.00H291.33V88.00H297.11V88.00H302.89V89.00H308.67V92.00H314.45V89.00H320.22V87.00H326.00V87.00H331.78V87.00H337.56V85.00H343.34V85.00H349.12V90.00H354.90V90.00H360.68V90.00H366.46V90.00H372.24V91.00H378.02V89.00H383.80V89.00H389.57V89.00H395.35V90.00H401.13V90.00H406.91V89.00H412.69V91.00H418.47V89.00H424.25V89.00H430.03V89.00H435.81V89.00H441.59V88.00H447.37V86.00H453.15V88.00H458.92V89.00H464.70V89.00H470.48V89.00H476.26V89.00H482.04V92.00H487.82V92.00H493.60V91.00H499.38V91.00H505.16V91.00H510.94V92.00H516.72V90.00H522.50V89.00H528.27V89.00H534.05V88.00H539.83V88.00H545.61V88.00H551.39V88.00H557.17V89.00H562.95V91.00H568.73V88.00H574.51V88.00H580.29V88.00H586.07V88.00H591.85V86.00H597.62V88.00H603.40V88.00H609.18V89.00H614.96V89.00H620.74V87.00H626.52V87.00H632.30V92.00H638.08V92.00H643.86V90.00H649.64V90.00H655.42V88.00H661.20V88.00H666.97V89.00H672.75V91.00H678.53V91.00H684.31V89.00H690.09V89.00H695.87V87.00H701.65V87.00H707.43V87.00H713.21V87.00H718.99V86.00H724.77V86.00H730.55V86.00H736.33V87.00H742.10V89.00H747.88V86.00H753.66V86.00H759.44V86.00H765.22" fill="none" stroke="#36a836" stroke-width="2" stroke-linejoin="miter"/>
<path d="M77.50 86.00H83.28V84.00H89.06V82.00H94.84V84.00H100.62V83.00H106.40V82.00H112.18V83.00H117.95V83.00H123.73V83.00H129.51V83.00H135.29V83.00H141.07V83.00H146.85V79.00H152.63V78.00H158.41V81.00H164.19V81.00H169.97V84.00H175.75V83.00H181.53V83.00H187.30V84.00H193.08V85.00H198.86V85.00H204.64V85.00H210.42V84.00H216.20V86.00H221.98V83.00H227.76V79.00H233.54V85.00H239.32V84.00H245.10V84.00H250.88V86.00H256.65V84.00H262.43V85.00H268.21V85.00H273.99V86.00H279.77V85.00H285.55V83.00H291.33V85.00H297.11V88.00H302.89V84.00H308.67V86.00H314.45V85.00H320.22V86.00H326.00V86.00H331.78V86.00H337.56V84.00H343.34V84.00H349.12V85.00H354.90V86.00H360.68V83.00H366.46V83.00H372.24V82.00H378.02V86.00H383.80V83.00H389.57V86.00H395.35V82.00H401.13V84.00H406.91V85.00H412.69V85.00H418.47V83.00H424.25V83.00H430.03V86.00H435.81V86.00H441.59V84.00H447.37V85.00H453.15V85.00H458.92V86.00H464.70V86.00H470.48V85.00H476.26V85.00H482.04V82.00H487.82V85.00H493.60V85.00H499.38V87.00H505.16V82.00H510.94V82.00H516.72V81.00H522.50V83.00H528.27V85.00H534.05V83.00H539.83V86.00H545.61V83.00H551.39V80.00H557.17V82.00H562.95V83.00H568.73V85.00H574.51V82.00H580.29V85.00H586.07V85.00H591.85V86.00H597.62V82.00H603.40V84.00H609.18V88.00H614.96V85.00H620.74V87.00H626.52V86.00H632.30V85.00H638.08V85.00H643.86V85.00H649.64V81.00H655.42V81.00H661.20V83.00H666.97V82.00H672.75V84.00H678.53V86.00H684.31V83.00H690.09V83.00H695.87V82.00H701.65V80.00H707.43V79.00H713.21V81.00H718.99V81.00H724.77V81.00H730.55V79.00H736.33V86.00H742.10V83.00H747.88V83.00H753.66V83.00H759.44V84.00H765.22" fill="none" stroke="#3482ec" stroke-width="2" stroke-linejoin="miter"/>
<path d="M77.50 66.00H83.28V66.00H89.06V61.00H94.84V61.00H100.62V59.00H106.40V59.00H112.18V64.00H117.95V62.00H123.73V69.00H129.51V65.00H135.29V64.00H141.07V64.00H146.85V61.00H152.63V56.00H158.41V59.00H164.19V65.00H169.97V63.00H175.75V64.00H181.53V61.00H187.30V67.00H193.08V58.00H198.86V65.00H204.64V66.00H210.42V68.00H216.20V66.00H221.98V63.00H227.76V60.00H233.54V63.00H239.32V61.00H245.10V64.00H250.88V66.00H256.65V63.00H262.43V65.00H268.21V64.00H273.99V65.00H279.77V64.00H285.55V66.00H291.33V67.00H297.11V59.00H302.89V59.00H308.67V59.00H314.45V64.00H320.22V66.00H326.00V66.00H331.78V58.00H337.56V64.00H343.34V60.00H349.12V66.00H354.90V66.00H360.68V61.00H366.46V68.00H372.24V61.00H378.02V66.00H383.80V69.00H389.57V58.00H395.35V62.00H401.13V58.00H406.91V63.00H412.69V61.00H418.47V65.00H424.25V65.00H430.03V65.00H435.81V60.00H441.59V61.00H447.37V61.00H453.15V61.00H458.92V64.00H464.70V65.00H470.48V64.00H476.26V66.00H482.04V65.00H487.82V63.00H493.60V66.00H499.38V64.00H505.16V61.00H510.94V68.00H516.72V66.00H522.50V63.00H528.27V68.00H534.05V68.00H539.83V61.00H545.61V63.00H551.39V63.00H557.17V61.00H562.95V64.00H568.73V66.00H574.51V61.00H580.29V61.00H586.07V61.00H591.85V61.00H597.62V64.00H603.40V66.00H609.18V60.00H614.96V63.00H620.74V60.00H626.52V52.00H632.30V50.00H638.08V66.00H643.86V60.00H649.64V55.00H655.42V66.00H661.20V68.00H666.97V67.00H672.75V62.00H678.53V57.00H684.31V64.00H690.09V54.00H695.87V52.00H701.65V56.00H707.43V57.00H713.21V60.00H718.99V64.00H724.77V59.00H730.55V57.00H736.33V65.00H742.10V59.00H747.88V53.00H753.66V60.00H759.44V57.00H765.22" fill="none" stroke="#f03a8c" stroke-width="2" stroke-linejoin="miter"/>
<path d="M77.50 49.00H83.28V49.00H89.06V51.00H94.84V50.00H100.62V49.00H106.40V49.00H112.18V49.00H117.95V51.00H123.73V51.00H129.51V51.00H135.29V50.00H141.07V48.00H146.85V48.00H152.63V49.00H158.41V48.00H164.19V47.00H169.97V47.00H175.75V50.00H181.53V50.00H187.30V48.00H193.08V51.00H198.86V50.00H204.64V50.00H210.42V48.00H216.20V50.00H221.98V50.00H227.76V47.00H233.54V49.00H239.32V49.00H245.10V50.00H250.88V49.00H256.65V49.00H262.43V52.00H268.21V50.00H273.99V47.00H279.77V47.00H285.55V46.00H291.33V50.00H297.11V55.00H302.89V51.00H308.67V50.00H314.45V50.00H320.22V46.00H326.00V46.00H331.78V48.00H337.56V48.00H343.34V46.00H349.12V49.00H354.90V48.00H360.68V48.00H366.46V46.00H372.24V48.00H378.02V48.00H383.80V48.00H389.57V50.00H395.35V51.00H401.13V51.00H406.91V49.00H412.69V49.00H418.47V51.00H424.25V51.00H430.03V51.00H435.81V48.00H441.59V51.00H447.37V50.00H453.15V50.00H458.92V50.00H464.70V50.00H470.48V49.00H476.26V50.00H482.04V50.00H487.82V48.00H493.60V48.00H499.38V50.00H505.16V50.00H510.94V50.00H516.72V50.00H522.50V50.00H528.27V50.00H534.05V47.00H539.83V51.00H545.61V48.00H551.39V50.00H557.17V50.00H562.95V50.00H568.73V50.00H574.51V50.00H580.29V52.00H586.07V50.00H591.85V50.00H597.62V47.00H603.40V50.00H609.18V48.00H614.96V50.00H620.74V50.00H626.52V51.00H632.30V47.00H638.08V47.00H643.86V50.00H649.64V50.00H655.42V47.00H661.20V50.00H666.97V46.00H672.75V46.00H678.53V46.00H684.31V49.00H690.09V48.00H695.87V48.00H701.65V49.00H707.43V50.00H713.21V50.00H718.99V52.00H724.77V49.00H730.55V49.00H736.33V46.00H742.10V49.00H747.88V48.00H753.66V48.00H759.44V50.00H765.22" fill="none" stroke="#c4dc34" stroke-width="2" stroke-linejoin="miter"/>
<path d="M77.50 245.00H83.28V244.00H89.06V245.00H94.84V244.00H100.62V244.00H106.40V245.00H112.18V246.00H117.95V246.00H123.73V245.00H129.51V245.00H135.29V245.00H141.07V245.00H146.85V244.00H152.63V244.00H158.41V243.00H164.19V242.00H169.97V245.00H175.75V245.00H181.53V245.00H187.30V245.00H193.08V245.00H198.86V245.00H204.64V245.00H210.42V244.00H216.20V241.00H221.98V240.00H227.76V240.00H233.54V242.00H239.32V245.00H245.10V245.00H250.88V245.00H256.65V244.00H262.43V244.00H268.21V244.00H273.99V243.00H279.77V243.00H285.55V245.00H291.33V245.00H297.11V244.00H302.89V244.00H308.67V244.00H314.45V243.00H320.22V244.00H326.00V245.00H331.78V244.00H337.56V245.00H343.34V244.00H349.12V244.00H354.90V245.00H360.68V243.00H366.46V241.00H372.24V242.00H378.02V244.00H383.80V243.00H389.57V243.00H395.35V243.00H401.13V245.00H406.91V246.00H412.69V244.00H418.47V244.00H424.25V245.00H430.03V245.00H435.81V245.00H441.59V245.00H447.37V244.00H453.15V244.00H458.92V246.00H464.70V246.00H470.48V245.00H476.26V245.00H482.04V245.00H487.82V245.00H493.60V245.00H499.38V245.00H505.16V244.00H510.94V245.00H516.72V245.00H522.50V245.00H528.27V245.00H534.05V245.00H539.83V244.00H545.61V244.00H551.39V244.00H557.17V245.00H562.95V245.00H568.73V244.00H574.51V243.00H580.29V244.00H586.07V244.00H591.85V244.00H597.62V244.00H603.40V244.00H609.18V245.00H614.96V245.00H620.74V245.00H626.52V244.00H632.30V244.00H638.08V245.00H643.86V245.00H649.64V245.00H655.42V245.00H661.20V245.00H666.97V245.00H672.75V245.00H678.53V245.00H684.31V244.00H690.09V244.00H695.87V245.00H701.65V245.00H707.43V244.00H713.21V245.00H718.99V245.00H724.77V245.00H730.55V245.00H736.33V245.00H742.10V245.00H747.88V244.00H753.66V245.00H759.44" fill="none" stroke="#3ce8f4" stroke-width="2" stroke-linejoin="miter"/>
<path d="M77.1 29 V268" stroke="#757575" stroke-width="1.5"/>
<path d="M72 264.2 H777" stroke="#757575" stroke-width="1.5"/>
<path d="M73.6 30 L77.1 24.5 L80.6 30 Z" fill="#8b1a1a"/>
<path d="M773 260.2 L778.7 264.2 L773 268.2 Z" fill="#8b1a1a"/>
<text x="402" y="27.2" font-family='"Liberation Mono", monospace' font-size="15" fill="#222" stroke="#222" stroke-width="0.2" text-anchor="middle">Router Swisscom Aarweg</text>
<text x="55.8" y="268.3" font-family='"Liberation Mono", monospace' font-size="11.8" fill="#222" stroke="#222" stroke-width="0.25" text-anchor="end" xml:space="preserve">0</text>
<text x="70.2" y="210.7" font-family='"Liberation Mono", monospace' font-size="11.8" fill="#222" stroke="#222" stroke-width="0.25" text-anchor="end" xml:space="preserve">1 m</text>
<text x="70.2" y="153.1" font-family='"Liberation Mono", monospace' font-size="11.8" fill="#222" stroke="#222" stroke-width="0.25" text-anchor="end" xml:space="preserve">2 m</text>
<text x="70.2" y="95.5" font-family='"Liberation Mono", monospace' font-size="11.8" fill="#222" stroke="#222" stroke-width="0.25" text-anchor="end" xml:space="preserve">3 m</text>
<text x="70.2" y="37.9" font-family='"Liberation Mono", monospace' font-size="11.8" fill="#222" stroke="#222" stroke-width="0.25" text-anchor="end" xml:space="preserve">4 m</text>
<text x="181.3" y="278.8" font-family='"Liberation Mono", monospace' font-size="11.8" fill="#222" stroke="#222" stroke-width="0.25" text-anchor="middle">12:00</text>
<text x="320.0" y="278.8" font-family='"Liberation Mono", monospace' font-size="11.8" fill="#222" stroke="#222" stroke-width="0.25" text-anchor="middle">14:00</text>
<text x="458.7" y="278.8" font-family='"Liberation Mono", monospace' font-size="11.8" fill="#222" stroke="#222" stroke-width="0.25" text-anchor="middle">16:00</text>
<text x="597.4" y="278.8" font-family='"Liberation Mono", monospace' font-size="11.8" fill="#222" stroke="#222" stroke-width="0.25" text-anchor="middle">18:00</text>
<text x="736.1" y="278.8" font-family='"Liberation Mono", monospace' font-size="11.8" fill="#222" stroke="#222" stroke-width="0.25" text-anchor="middle">20:00</text>
<text transform="translate(16.5,148) rotate(-90)" font-family='"Liberation Mono", monospace' font-size="13" fill="#333" text-anchor="middle">Seconds</text>
<text transform="translate(791.5,5) rotate(90)" font-family='"Liberation Mono", monospace' font-size="10.5" fill="#a8a8a8" textLength="127" lengthAdjust="spacingAndGlyphs">RRDTOOL / TOBI OETIKER</text>
<rect x="17.7" y="288.3" width="10" height="10" fill="#009f00" stroke="#111" stroke-width="1"/>
<text x="34.0" y="298.00" font-family='"Liberation Mono", monospace' font-size="13.5" fill="#2a2a2a" stroke="#2a2a2a" stroke-width="0.25" xml:space="preserve">median RTT from Sunrise F</text>
<text x="255.0" y="298.00" font-family='"Liberation Mono", monospace' font-size="13.5" fill="#2a2a2a" stroke="#2a2a2a" stroke-width="0.25" xml:space="preserve">  3.0 ms av md </text>
<text x="395.0" y="298.00" font-family='"Liberation Mono", monospace' font-size="13.5" fill="#2a2a2a" stroke="#2a2a2a" stroke-width="0.25" xml:space="preserve">  0.0 % av ls</text>
<text x="518.8" y="298.00" font-family='"Liberation Mono", monospace' font-size="13.5" fill="#2a2a2a" stroke="#2a2a2a" stroke-width="0.25" xml:space="preserve"> 94.1 us av sd</text>
<text x="650.7" y="298.00" font-family='"Liberation Mono", monospace' font-size="13.5" fill="#2a2a2a" stroke="#2a2a2a" stroke-width="0.25" xml:space="preserve"> 32.4   am/as</text>
<rect x="17.7" y="304.6" width="10" height="10" fill="#00e8f4" stroke="#111" stroke-width="1"/>
<text x="34.0" y="314.25" font-family='"Liberation Mono", monospace' font-size="13.5" fill="#2a2a2a" stroke="#2a2a2a" stroke-width="0.25" xml:space="preserve">median RTT from Swissco PMP</text>
<text x="271.2" y="314.25" font-family='"Liberation Mono", monospace' font-size="13.5" fill="#2a2a2a" stroke="#2a2a2a" stroke-width="0.25" xml:space="preserve">333.6 us av md </text>
<text x="411.2" y="314.25" font-family='"Liberation Mono", monospace' font-size="13.5" fill="#2a2a2a" stroke="#2a2a2a" stroke-width="0.25" xml:space="preserve">  0.0 % av ls</text>
<text x="535.0" y="314.25" font-family='"Liberation Mono", monospace' font-size="13.5" fill="#2a2a2a" stroke="#2a2a2a" stroke-width="0.25" xml:space="preserve"> 52.0 us av sd</text>
<text x="666.9" y="314.25" font-family='"Liberation Mono", monospace' font-size="13.5" fill="#2a2a2a" stroke="#2a2a2a" stroke-width="0.25" xml:space="preserve">  6.4   am/as</text>
<rect x="17.7" y="320.8" width="10" height="10" fill="#00e8f4" stroke="#111" stroke-width="1"/>
<text x="34.0" y="330.50" font-family='"Liberation Mono", monospace' font-size="13.5" fill="#2a2a2a" stroke="#2a2a2a" stroke-width="0.25" xml:space="preserve">median RTT from Switch F </text>
<text x="255.0" y="330.50" font-family='"Liberation Mono", monospace' font-size="13.5" fill="#2a2a2a" stroke="#2a2a2a" stroke-width="0.25" xml:space="preserve">  2.8 ms av md </text>
<text x="395.0" y="330.50" font-family='"Liberation Mono", monospace' font-size="13.5" fill="#2a2a2a" stroke="#2a2a2a" stroke-width="0.25" xml:space="preserve">  0.0 % av ls</text>
<text x="518.8" y="330.50" font-family='"Liberation Mono", monospace' font-size="13.5" fill="#2a2a2a" stroke="#2a2a2a" stroke-width="0.25" xml:space="preserve">105.2 us av sd</text>
<text x="650.7" y="330.50" font-family='"Liberation Mono", monospace' font-size="13.5" fill="#2a2a2a" stroke="#2a2a2a" stroke-width="0.25" xml:space="preserve"> 26.3   am/as</text>
<rect x="17.7" y="337.1" width="10" height="10" fill="#ee0077" stroke="#111" stroke-width="1"/>
<text x="34.0" y="346.75" font-family='"Liberation Mono", monospace' font-size="13.5" fill="#2a2a2a" stroke="#2a2a2a" stroke-width="0.25" xml:space="preserve">median RTT from Swissco P2P</text>
<text x="271.2" y="346.75" font-family='"Liberation Mono", monospace' font-size="13.5" fill="#2a2a2a" stroke="#2a2a2a" stroke-width="0.25" xml:space="preserve">  3.5 ms av md </text>
<text x="411.2" y="346.75" font-family='"Liberation Mono", monospace' font-size="13.5" fill="#2a2a2a" stroke="#2a2a2a" stroke-width="0.25" xml:space="preserve">  0.0 % av ls</text>
<text x="535.0" y="346.75" font-family='"Liberation Mono", monospace' font-size="13.5" fill="#2a2a2a" stroke="#2a2a2a" stroke-width="0.25" xml:space="preserve">138.2 us av sd</text>
<text x="666.9" y="346.75" font-family='"Liberation Mono", monospace' font-size="13.5" fill="#2a2a2a" stroke="#2a2a2a" stroke-width="0.25" xml:space="preserve"> 25.3   am/as</text>
<rect x="17.7" y="353.3" width="10" height="10" fill="#0061ee" stroke="#111" stroke-width="1"/>
<text x="34.0" y="363.00" font-family='"Liberation Mono", monospace' font-size="13.5" fill="#2a2a2a" stroke="#2a2a2a" stroke-width="0.25" xml:space="preserve">median RTT from INIT7 F  </text>
<text x="255.0" y="363.00" font-family='"Liberation Mono", monospace' font-size="13.5" fill="#2a2a2a" stroke="#2a2a2a" stroke-width="0.25" xml:space="preserve">  3.1 ms av md </text>
<text x="395.0" y="363.00" font-family='"Liberation Mono", monospace' font-size="13.5" fill="#2a2a2a" stroke="#2a2a2a" stroke-width="0.25" xml:space="preserve">  0.0 % av ls</text>
<text x="518.8" y="363.00" font-family='"Liberation Mono", monospace' font-size="13.5" fill="#2a2a2a" stroke="#2a2a2a" stroke-width="0.25" xml:space="preserve"> 78.9 us av sd</text>
<text x="650.7" y="363.00" font-family='"Liberation Mono", monospace' font-size="13.5" fill="#2a2a2a" stroke="#2a2a2a" stroke-width="0.25" xml:space="preserve"> 39.7   am/as</text>
<rect x="17.7" y="369.6" width="10" height="10" fill="#cce000" stroke="#111" stroke-width="1"/>
<text x="34.0" y="379.25" font-family='"Liberation Mono", monospace' font-size="13.5" fill="#2a2a2a" stroke="#2a2a2a" stroke-width="0.25" xml:space="preserve">median RTT from GGA F    </text>
<text x="255.0" y="379.25" font-family='"Liberation Mono", monospace' font-size="13.5" fill="#2a2a2a" stroke="#2a2a2a" stroke-width="0.25" xml:space="preserve">  3.7 ms av md </text>
<text x="395.0" y="379.25" font-family='"Liberation Mono", monospace' font-size="13.5" fill="#2a2a2a" stroke="#2a2a2a" stroke-width="0.25" xml:space="preserve">  0.0 % av ls</text>
<text x="518.8" y="379.25" font-family='"Liberation Mono", monospace' font-size="13.5" fill="#2a2a2a" stroke="#2a2a2a" stroke-width="0.25" xml:space="preserve"> 96.6 us av sd</text>
<text x="650.7" y="379.25" font-family='"Liberation Mono", monospace' font-size="13.5" fill="#2a2a2a" stroke="#2a2a2a" stroke-width="0.25" xml:space="preserve"> 38.6   am/as</text>
<text x="18" y="394.8" font-family='"Liberation Mono", monospace' font-size="13.5" fill="#2a2a2a" stroke="#2a2a2a" stroke-width="0.25" xml:space="preserve">ICMP Echo Pings (56 Bytes)</text>
<text x="786.7" y="394.8" font-family='"Liberation Mono", monospace' font-size="13.5" fill="#2a2a2a" stroke="#2a2a2a" stroke-width="0.25" text-anchor="end">Mon Sep 11 20:29:47 2023 CEST</text>
</svg>
<svg width="806" height="407" style="position:absolute;left:311px;top:635px" shape-rendering="auto">
<rect x="0" y="0" width="806" height="407" fill="#f3f3f3"/>
<rect x="0" y="0" width="806" height="2" fill="#c9c9c9"/><rect x="0" y="0" width="2" height="407" fill="#c9c9c9"/>
<rect x="0" y="405" width="806" height="2" fill="#9a9a9a"/><rect x="804" y="0" width="2" height="407" fill="#9a9a9a"/>
<rect x="78" y="32.0" width="693.0" height="231.8" fill="#ffffff"/>
<path d="M72 226.5 H772.0" stroke="#dcdcdc" stroke-width="1" stroke-dasharray="1,1"/>
<path d="M72 188.5 H772.0" stroke="#dcdcdc" stroke-width="1" stroke-dasharray="1,1"/>
<path d="M72 150.5 H772.0" stroke="#dcdcdc" stroke-width="1" stroke-dasharray="1,1"/>
<path d="M72 112.5 H772.0" stroke="#dcdcdc" stroke-width="1" stroke-dasharray="1,1"/>
<path d="M72 37.5 H772.0" stroke="#dcdcdc" stroke-width="1" stroke-dasharray="1,1"/>
<path d="M72 264.5 H772.0" stroke="#f8c8c8" stroke-width="1" stroke-dasharray="1,1"/>
<path d="M72 75.5 H772.0" stroke="#f8c8c8" stroke-width="1" stroke-dasharray="1,1"/>
<path d="M111.5 30.0 V267.8" stroke="#f8c8c8" stroke-width="1" stroke-dasharray="1,1"/>
<path d="M146.5 30.0 V265.8" stroke="#dedede" stroke-width="1" stroke-dasharray="1,1"/>
<path d="M181.5 30.0 V267.8" stroke="#f8c8c8" stroke-width="1" stroke-dasharray="1,1"/>
<path d="M215.5 30.0 V265.8" stroke="#dedede" stroke-width="1" stroke-dasharray="1,1"/>
<path d="M250.5 30.0 V267.8" stroke="#f8c8c8" stroke-width="1" stroke-dasharray="1,1"/>
<path d="M285.5 30.0 V265.8" stroke="#dedede" stroke-width="1" stroke-dasharray="1,1"/>
<path d="M319.5 30.0 V267.8" stroke="#f8c8c8" stroke-width="1" stroke-dasharray="1,1"/>
<path d="M354.5 30.0 V265.8" stroke="#dedede" stroke-width="1" stroke-dasharray="1,1"/>
<path d="M389.5 30.0 V267.8" stroke="#f8c8c8" stroke-width="1" stroke-dasharray="1,1"/>
<path d="M423.5 30.0 V265.8" stroke="#dedede" stroke-width="1" stroke-dasharray="1,1"/>
<path d="M458.5 30.0 V267.8" stroke="#f8c8c8" stroke-width="1" stroke-dasharray="1,1"/>
<path d="M493.5 30.0 V265.8" stroke="#dedede" stroke-width="1" stroke-dasharray="1,1"/>
<path d="M527.5 30.0 V267.8" stroke="#f8c8c8" stroke-width="1" stroke-dasharray="1,1"/>
<path d="M562.5 30.0 V265.8" stroke="#dedede" stroke-width="1" stroke-dasharray="1,1"/>
<path d="M597.5 30.0 V267.8" stroke="#f8c8c8" stroke-width="1" stroke-dasharray="1,1"/>
<path d="M631.5 30.0 V265.8" stroke="#dedede" stroke-width="1" stroke-dasharray="1,1"/>
<path d="M666.5 30.0 V267.8" stroke="#f8c8c8" stroke-width="1" stroke-dasharray="1,1"/>
<path d="M701.5 30.0 V265.8" stroke="#dedede" stroke-width="1" stroke-dasharray="1,1"/>
<path d="M735.5 30.0 V267.8" stroke="#f8c8c8" stroke-width="1" stroke-dasharray="1,1"/>
<path d="M770.5 30.0 V265.8" stroke="#dedede" stroke-width="1" stroke-dasharray="1,1"/>
<rect x="77.00" y="202.63" width="5.78" height="45.93" fill="#cef8fa"/>
<rect x="100.12" y="214.86" width="5.78" height="30.90" fill="#cef8fa"/>
<rect x="105.90" y="194.89" width="5.78" height="66.57" fill="#cef8fa"/>
<rect x="111.68" y="223.13" width="5.78" height="30.19" fill="#cef8fa"/>
<rect x="117.45" y="229.42" width="5.78" height="30.08" fill="#cef8fa"/>
<rect x="123.23" y="194.11" width="5.78" height="55.01" fill="#cef8fa"/>
<rect x="129.01" y="199.99" width="5.78" height="60.99" fill="#cef8fa"/>
<rect x="134.79" y="226.85" width="5.78" height="36.71" fill="#cef8fa"/>
<rect x="146.35" y="224.16" width="5.78" height="20.86" fill="#cef8fa"/>
<rect x="157.91" y="191.83" width="5.78" height="61.58" fill="#cef8fa"/>
<rect x="163.69" y="224.51" width="5.78" height="21.30" fill="#cef8fa"/>
<rect x="186.80" y="218.99" width="5.78" height="41.47" fill="#cef8fa"/>
<rect x="192.58" y="228.42" width="5.78" height="29.48" fill="#cef8fa"/>
<rect x="198.36" y="229.54" width="5.78" height="21.24" fill="#cef8fa"/>
<rect x="204.14" y="220.90" width="5.78" height="27.22" fill="#cef8fa"/>
<rect x="209.92" y="220.69" width="5.78" height="33.81" fill="#cef8fa"/>
<rect x="221.48" y="191.13" width="5.78" height="72.04" fill="#cef8fa"/>
<rect x="238.82" y="200.44" width="5.78" height="56.23" fill="#cef8fa"/>
<rect x="244.60" y="229.47" width="5.78" height="33.24" fill="#cef8fa"/>
<rect x="250.38" y="192.15" width="5.78" height="67.73" fill="#cef8fa"/>
<rect x="273.49" y="219.24" width="5.78" height="34.44" fill="#cef8fa"/>
<rect x="285.05" y="202.32" width="5.78" height="46.21" fill="#cef8fa"/>
<rect x="296.61" y="192.63" width="5.78" height="69.25" fill="#cef8fa"/>
<rect x="302.39" y="208.64" width="5.78" height="37.60" fill="#cef8fa"/>
<rect x="308.17" y="193.72" width="5.78" height="59.57" fill="#cef8fa"/>
<rect x="313.95" y="220.65" width="5.78" height="39.59" fill="#cef8fa"/>
<rect x="319.72" y="226.22" width="5.78" height="24.34" fill="#cef8fa"/>
<rect x="331.28" y="228.78" width="5.78" height="16.16" fill="#cef8fa"/>
<rect x="337.06" y="217.26" width="5.78" height="41.85" fill="#cef8fa"/>
<rect x="342.84" y="198.57" width="5.78" height="56.41" fill="#cef8fa"/>
<rect x="348.62" y="228.63" width="5.78" height="17.65" fill="#cef8fa"/>
<rect x="354.40" y="213.70" width="5.78" height="34.04" fill="#cef8fa"/>
<rect x="360.18" y="203.11" width="5.78" height="42.53" fill="#cef8fa"/>
<rect x="365.96" y="200.43" width="5.78" height="61.16" fill="#cef8fa"/>
<rect x="371.74" y="226.21" width="5.78" height="21.41" fill="#cef8fa"/>
<rect x="377.52" y="215.37" width="5.78" height="29.33" fill="#cef8fa"/>
<rect x="394.85" y="213.93" width="5.78" height="35.88" fill="#cef8fa"/>
<rect x="400.63" y="221.58" width="5.78" height="34.38" fill="#cef8fa"/>
<rect x="406.41" y="218.39" width="5.78" height="26.52" fill="#cef8fa"/>
<rect x="417.97" y="213.46" width="5.78" height="43.74" fill="#cef8fa"/>
<rect x="423.75" y="222.24" width="5.78" height="26.57" fill="#cef8fa"/>
<rect x="435.31" y="200.52" width="5.78" height="48.42" fill="#cef8fa"/>
<rect x="446.87" y="201.78" width="5.78" height="54.94" fill="#cef8fa"/>
<rect x="458.42" y="214.03" width="5.78" height="35.01" fill="#cef8fa"/>
<rect x="469.98" y="192.64" width="5.78" height="58.68" fill="#cef8fa"/>
<rect x="475.76" y="229.44" width="5.78" height="23.82" fill="#cef8fa"/>
<rect x="481.54" y="205.89" width="5.78" height="48.95" fill="#cef8fa"/>
<rect x="493.10" y="199.96" width="5.78" height="57.06" fill="#cef8fa"/>
<rect x="498.88" y="202.82" width="5.78" height="45.12" fill="#cef8fa"/>
<rect x="504.66" y="197.76" width="5.78" height="49.39" fill="#cef8fa"/>
<rect x="527.77" y="212.19" width="5.78" height="48.26" fill="#cef8fa"/>
<rect x="545.11" y="204.98" width="5.78" height="45.01" fill="#cef8fa"/>
<rect x="556.67" y="200.79" width="5.78" height="51.82" fill="#cef8fa"/>
<rect x="562.45" y="216.67" width="5.78" height="35.13" fill="#cef8fa"/>
<rect x="574.01" y="203.63" width="5.78" height="59.44" fill="#cef8fa"/>
<rect x="579.79" y="215.86" width="5.78" height="35.45" fill="#cef8fa"/>
<rect x="585.57" y="205.23" width="5.78" height="46.44" fill="#cef8fa"/>
<rect x="591.35" y="214.62" width="5.78" height="44.71" fill="#cef8fa"/>
<rect x="597.12" y="226.66" width="5.78" height="30.94" fill="#cef8fa"/>
<rect x="602.90" y="224.87" width="5.78" height="38.05" fill="#cef8fa"/>
<rect x="608.68" y="218.26" width="5.78" height="33.77" fill="#cef8fa"/>
<rect x="614.46" y="223.42" width="5.78" height="23.10" fill="#cef8fa"/>
<rect x="620.24" y="217.28" width="5.78" height="41.05" fill="#cef8fa"/>
<rect x="626.02" y="227.17" width="5.78" height="20.71" fill="#cef8fa"/>
<rect x="631.80" y="229.03" width="5.78" height="22.96" fill="#cef8fa"/>
<rect x="637.58" y="211.51" width="5.78" height="45.67" fill="#cef8fa"/>
<rect x="643.36" y="191.99" width="5.78" height="56.13" fill="#cef8fa"/>
<rect x="649.14" y="199.22" width="5.78" height="52.23" fill="#cef8fa"/>
<rect x="654.92" y="226.42" width="5.78" height="25.91" fill="#cef8fa"/>
<rect x="660.70" y="192.05" width="5.78" height="53.25" fill="#cef8fa"/>
<rect x="666.47" y="219.38" width="5.78" height="27.33" fill="#cef8fa"/>
<rect x="672.25" y="227.36" width="5.78" height="25.54" fill="#cef8fa"/>
<rect x="678.03" y="226.46" width="5.78" height="25.24" fill="#cef8fa"/>
<rect x="689.59" y="216.24" width="5.78" height="43.08" fill="#cef8fa"/>
<rect x="695.37" y="191.27" width="5.78" height="65.15" fill="#cef8fa"/>
<rect x="712.71" y="222.68" width="5.78" height="22.37" fill="#cef8fa"/>
<rect x="718.49" y="216.88" width="5.78" height="40.68" fill="#cef8fa"/>
<rect x="730.05" y="221.75" width="5.78" height="32.83" fill="#cef8fa"/>
<rect x="735.83" y="208.16" width="5.78" height="47.06" fill="#cef8fa"/>
<rect x="741.60" y="200.73" width="5.78" height="47.23" fill="#cef8fa"/>
<rect x="747.38" y="212.06" width="5.78" height="46.37" fill="#cef8fa"/>
<rect x="77.00" y="258.53" width="5.78" height="2.00" fill="#d2ecd2"/>
<rect x="82.78" y="256.53" width="5.78" height="2.37" fill="#d2ecd2"/>
<rect x="105.90" y="257.10" width="5.78" height="2.00" fill="#d2ecd2"/>
<rect x="117.45" y="256.97" width="5.78" height="2.58" fill="#d2ecd2"/>
<rect x="123.23" y="258.58" width="5.78" height="2.00" fill="#d2ecd2"/>
<rect x="140.57" y="258.97" width="5.78" height="2.00" fill="#d2ecd2"/>
<rect x="146.35" y="258.55" width="5.78" height="2.00" fill="#d2ecd2"/>
<rect x="175.25" y="259.18" width="5.78" height="2.03" fill="#d2ecd2"/>
<rect x="181.03" y="257.69" width="5.78" height="2.00" fill="#d2ecd2"/>
<rect x="186.80" y="258.61" width="5.78" height="2.00" fill="#d2ecd2"/>
<rect x="198.36" y="258.70" width="5.78" height="2.00" fill="#d2ecd2"/>
<rect x="204.14" y="258.55" width="5.78" height="2.00" fill="#d2ecd2"/>
<rect x="209.92" y="257.89" width="5.78" height="2.13" fill="#d2ecd2"/>
<rect x="233.04" y="257.94" width="5.78" height="2.31" fill="#d2ecd2"/>
<rect x="244.60" y="258.25" width="5.78" height="2.00" fill="#d2ecd2"/>
<rect x="261.93" y="257.92" width="5.78" height="2.23" fill="#d2ecd2"/>
<rect x="302.39" y="259.36" width="5.78" height="2.00" fill="#d2ecd2"/>
<rect x="313.95" y="259.10" width="5.78" height="2.62" fill="#d2ecd2"/>
<rect x="319.72" y="259.00" width="5.78" height="2.00" fill="#d2ecd2"/>
<rect x="331.28" y="258.77" width="5.78" height="2.00" fill="#d2ecd2"/>
<rect x="337.06" y="258.90" width="5.78" height="2.00" fill="#d2ecd2"/>
<rect x="342.84" y="257.65" width="5.78" height="2.00" fill="#d2ecd2"/>
<rect x="348.62" y="256.65" width="5.78" height="2.00" fill="#d2ecd2"/>
<rect x="360.18" y="258.21" width="5.78" height="2.00" fill="#d2ecd2"/>
<rect x="365.96" y="257.48" width="5.78" height="2.00" fill="#d2ecd2"/>
<rect x="371.74" y="258.13" width="5.78" height="2.00" fill="#d2ecd2"/>
<rect x="389.07" y="260.00" width="5.78" height="2.00" fill="#d2ecd2"/>
<rect x="406.41" y="257.65" width="5.78" height="2.00" fill="#d2ecd2"/>
<rect x="412.19" y="257.98" width="5.78" height="2.00" fill="#d2ecd2"/>
<rect x="417.97" y="258.91" width="5.78" height="2.00" fill="#d2ecd2"/>
<rect x="435.31" y="258.91" width="5.78" height="2.00" fill="#d2ecd2"/>
<rect x="441.09" y="256.71" width="5.78" height="4.12" fill="#d2ecd2"/>
<rect x="446.87" y="258.69" width="5.78" height="2.18" fill="#d2ecd2"/>
<rect x="452.65" y="258.69" width="5.78" height="2.00" fill="#d2ecd2"/>
<rect x="458.42" y="257.86" width="5.78" height="2.38" fill="#d2ecd2"/>
<rect x="464.20" y="257.74" width="5.78" height="2.00" fill="#d2ecd2"/>
<rect x="469.98" y="259.28" width="5.78" height="2.00" fill="#d2ecd2"/>
<rect x="481.54" y="258.39" width="5.78" height="2.00" fill="#d2ecd2"/>
<rect x="498.88" y="258.92" width="5.78" height="2.00" fill="#d2ecd2"/>
<rect x="510.44" y="257.32" width="5.78" height="2.23" fill="#d2ecd2"/>
<rect x="522.00" y="258.78" width="5.78" height="2.00" fill="#d2ecd2"/>
<rect x="527.77" y="258.79" width="5.78" height="2.00" fill="#d2ecd2"/>
<rect x="533.55" y="257.64" width="5.78" height="2.00" fill="#d2ecd2"/>
<rect x="539.33" y="258.09" width="5.78" height="2.00" fill="#d2ecd2"/>
<rect x="568.23" y="258.13" width="5.78" height="2.24" fill="#d2ecd2"/>
<rect x="574.01" y="258.89" width="5.78" height="2.00" fill="#d2ecd2"/>
<rect x="579.79" y="257.62" width="5.78" height="2.00" fill="#d2ecd2"/>
<rect x="591.35" y="258.45" width="5.78" height="2.00" fill="#d2ecd2"/>
<rect x="602.90" y="257.55" width="5.78" height="2.00" fill="#d2ecd2"/>
<rect x="608.68" y="257.39" width="5.78" height="2.00" fill="#d2ecd2"/>
<rect x="637.58" y="257.77" width="5.78" height="2.00" fill="#d2ecd2"/>
<rect x="643.36" y="257.95" width="5.78" height="2.00" fill="#d2ecd2"/>
<rect x="649.14" y="258.89" width="5.78" height="2.00" fill="#d2ecd2"/>
<rect x="666.47" y="256.91" width="5.78" height="2.71" fill="#d2ecd2"/>
<rect x="678.03" y="257.51" width="5.78" height="2.00" fill="#d2ecd2"/>
<rect x="689.59" y="258.49" width="5.78" height="2.00" fill="#d2ecd2"/>
<rect x="695.37" y="258.24" width="5.78" height="2.00" fill="#d2ecd2"/>
<rect x="730.05" y="258.27" width="5.78" height="2.00" fill="#d2ecd2"/>
<rect x="753.16" y="257.89" width="5.78" height="2.00" fill="#d2ecd2"/>
<rect x="88.56" y="228.29" width="5.78" height="2.00" fill="#f9d2e4"/>
<rect x="94.34" y="227.06" width="5.78" height="2.00" fill="#f9d2e4"/>
<rect x="100.12" y="227.02" width="5.78" height="2.00" fill="#f9d2e4"/>
<rect x="105.90" y="224.47" width="5.78" height="2.00" fill="#f9d2e4"/>
<rect x="111.68" y="225.21" width="5.78" height="2.00" fill="#f9d2e4"/>
<rect x="123.23" y="226.36" width="5.78" height="2.00" fill="#f9d2e4"/>
<rect x="129.01" y="227.52" width="5.78" height="2.00" fill="#f9d2e4"/>
<rect x="146.35" y="227.05" width="5.78" height="2.00" fill="#f9d2e4"/>
<rect x="157.91" y="230.02" width="5.78" height="2.00" fill="#f9d2e4"/>
<rect x="163.69" y="228.24" width="5.78" height="2.73" fill="#f9d2e4"/>
<rect x="181.03" y="227.94" width="5.78" height="2.00" fill="#f9d2e4"/>
<rect x="192.58" y="228.08" width="5.78" height="2.00" fill="#f9d2e4"/>
<rect x="204.14" y="227.86" width="5.78" height="2.00" fill="#f9d2e4"/>
<rect x="215.70" y="229.10" width="5.78" height="2.00" fill="#f9d2e4"/>
<rect x="221.48" y="225.55" width="5.78" height="2.90" fill="#f9d2e4"/>
<rect x="227.26" y="226.74" width="5.78" height="2.00" fill="#f9d2e4"/>
<rect x="244.60" y="227.56" width="5.78" height="2.00" fill="#f9d2e4"/>
<rect x="250.38" y="227.21" width="5.78" height="2.00" fill="#f9d2e4"/>
<rect x="256.15" y="228.34" width="5.78" height="2.00" fill="#f9d2e4"/>
<rect x="261.93" y="228.28" width="5.78" height="2.00" fill="#f9d2e4"/>
<rect x="279.27" y="227.87" width="5.78" height="3.19" fill="#f9d2e4"/>
<rect x="302.39" y="227.53" width="5.78" height="2.00" fill="#f9d2e4"/>
<rect x="308.17" y="227.44" width="5.78" height="2.00" fill="#f9d2e4"/>
<rect x="325.50" y="228.48" width="5.78" height="2.00" fill="#f9d2e4"/>
<rect x="342.84" y="229.27" width="5.78" height="2.00" fill="#f9d2e4"/>
<rect x="348.62" y="227.51" width="5.78" height="2.00" fill="#f9d2e4"/>
<rect x="354.40" y="227.55" width="5.78" height="2.00" fill="#f9d2e4"/>
<rect x="365.96" y="227.10" width="5.78" height="2.00" fill="#f9d2e4"/>
<rect x="377.52" y="226.86" width="5.78" height="2.00" fill="#f9d2e4"/>
<rect x="389.07" y="228.03" width="5.78" height="2.00" fill="#f9d2e4"/>
<rect x="394.85" y="228.16" width="5.78" height="2.00" fill="#f9d2e4"/>
<rect x="412.19" y="224.96" width="5.78" height="2.00" fill="#f9d2e4"/>
<rect x="423.75" y="226.54" width="5.78" height="2.00" fill="#f9d2e4"/>
<rect x="429.53" y="226.44" width="5.78" height="3.92" fill="#f9d2e4"/>
<rect x="441.09" y="227.58" width="5.78" height="2.00" fill="#f9d2e4"/>
<rect x="446.87" y="227.06" width="5.78" height="2.00" fill="#f9d2e4"/>
<rect x="452.65" y="226.75" width="5.78" height="2.00" fill="#f9d2e4"/>
<rect x="464.20" y="226.37" width="5.78" height="2.00" fill="#f9d2e4"/>
<rect x="469.98" y="226.09" width="5.78" height="2.00" fill="#f9d2e4"/>
<rect x="475.76" y="225.12" width="5.78" height="2.62" fill="#f9d2e4"/>
<rect x="481.54" y="226.55" width="5.78" height="2.00" fill="#f9d2e4"/>
<rect x="487.32" y="226.52" width="5.78" height="2.00" fill="#f9d2e4"/>
<rect x="498.88" y="227.65" width="5.78" height="2.00" fill="#f9d2e4"/>
<rect x="504.66" y="225.90" width="5.78" height="2.43" fill="#f9d2e4"/>
<rect x="510.44" y="227.59" width="5.78" height="2.00" fill="#f9d2e4"/>
<rect x="516.22" y="226.73" width="5.78" height="2.24" fill="#f9d2e4"/>
<rect x="539.33" y="226.61" width="5.78" height="2.00" fill="#f9d2e4"/>
<rect x="550.89" y="227.79" width="5.78" height="2.00" fill="#f9d2e4"/>
<rect x="568.23" y="229.82" width="5.78" height="2.00" fill="#f9d2e4"/>
<rect x="585.57" y="227.68" width="5.78" height="2.00" fill="#f9d2e4"/>
<rect x="597.12" y="227.22" width="5.78" height="2.00" fill="#f9d2e4"/>
<rect x="602.90" y="227.41" width="5.78" height="2.00" fill="#f9d2e4"/>
<rect x="620.24" y="225.41" width="5.78" height="2.00" fill="#f9d2e4"/>
<rect x="643.36" y="224.95" width="5.78" height="2.00" fill="#f9d2e4"/>
<rect x="649.14" y="224.04" width="5.78" height="2.27" fill="#f9d2e4"/>
<rect x="654.92" y="223.96" width="5.78" height="2.18" fill="#f9d2e4"/>
<rect x="660.70" y="224.71" width="5.78" height="2.00" fill="#f9d2e4"/>
<rect x="666.47" y="224.96" width="5.78" height="2.00" fill="#f9d2e4"/>
<rect x="678.03" y="226.27" width="5.78" height="2.00" fill="#f9d2e4"/>
<rect x="701.15" y="224.18" width="5.78" height="2.95" fill="#f9d2e4"/>
<rect x="712.71" y="225.39" width="5.78" height="2.00" fill="#f9d2e4"/>
<rect x="718.49" y="226.46" width="5.78" height="2.00" fill="#f9d2e4"/>
<rect x="724.27" y="226.22" width="5.78" height="2.00" fill="#f9d2e4"/>
<rect x="730.05" y="225.07" width="5.78" height="2.35" fill="#f9d2e4"/>
<rect x="741.60" y="226.75" width="5.78" height="2.00" fill="#f9d2e4"/>
<rect x="753.16" y="226.27" width="5.78" height="2.00" fill="#f9d2e4"/>
<rect x="77.00" y="205.63" width="5.78" height="2.00" fill="#cef8fa"/>
<rect x="82.78" y="203.96" width="5.78" height="3.46" fill="#cef8fa"/>
<rect x="105.90" y="204.38" width="5.78" height="2.00" fill="#cef8fa"/>
<rect x="123.23" y="201.26" width="5.78" height="2.57" fill="#cef8fa"/>
<rect x="129.01" y="203.49" width="5.78" height="2.22" fill="#cef8fa"/>
<rect x="134.79" y="203.09" width="5.78" height="2.00" fill="#cef8fa"/>
<rect x="146.35" y="204.55" width="5.78" height="2.00" fill="#cef8fa"/>
<rect x="152.13" y="202.71" width="5.78" height="2.46" fill="#cef8fa"/>
<rect x="157.91" y="203.80" width="5.78" height="2.00" fill="#cef8fa"/>
<rect x="169.47" y="205.31" width="5.78" height="2.00" fill="#cef8fa"/>
<rect x="181.03" y="203.25" width="5.78" height="2.00" fill="#cef8fa"/>
<rect x="186.80" y="203.67" width="5.78" height="4.21" fill="#cef8fa"/>
<rect x="192.58" y="204.60" width="5.78" height="2.00" fill="#cef8fa"/>
<rect x="204.14" y="204.36" width="5.78" height="4.18" fill="#cef8fa"/>
<rect x="209.92" y="203.20" width="5.78" height="2.00" fill="#cef8fa"/>
<rect x="227.26" y="204.32" width="5.78" height="2.00" fill="#cef8fa"/>
<rect x="233.04" y="202.78" width="5.78" height="2.53" fill="#cef8fa"/>
<rect x="261.93" y="205.13" width="5.78" height="2.00" fill="#cef8fa"/>
<rect x="273.49" y="204.13" width="5.78" height="2.00" fill="#cef8fa"/>
<rect x="313.95" y="204.73" width="5.78" height="2.00" fill="#cef8fa"/>
<rect x="319.72" y="203.91" width="5.78" height="2.00" fill="#cef8fa"/>
<rect x="331.28" y="203.88" width="5.78" height="2.00" fill="#cef8fa"/>
<rect x="337.06" y="204.08" width="5.78" height="2.07" fill="#cef8fa"/>
<rect x="360.18" y="203.41" width="5.78" height="2.51" fill="#cef8fa"/>
<rect x="371.74" y="204.58" width="5.78" height="2.00" fill="#cef8fa"/>
<rect x="377.52" y="205.98" width="5.78" height="2.00" fill="#cef8fa"/>
<rect x="383.30" y="204.88" width="5.78" height="2.00" fill="#cef8fa"/>
<rect x="400.63" y="204.64" width="5.78" height="2.00" fill="#cef8fa"/>
<rect x="406.41" y="204.44" width="5.78" height="2.00" fill="#cef8fa"/>
<rect x="412.19" y="204.41" width="5.78" height="2.27" fill="#cef8fa"/>
<rect x="423.75" y="205.65" width="5.78" height="2.00" fill="#cef8fa"/>
<rect x="429.53" y="205.22" width="5.78" height="2.00" fill="#cef8fa"/>
<rect x="441.09" y="204.51" width="5.78" height="2.00" fill="#cef8fa"/>
<rect x="452.65" y="205.36" width="5.78" height="2.00" fill="#cef8fa"/>
<rect x="464.20" y="204.19" width="5.78" height="2.00" fill="#cef8fa"/>
<rect x="475.76" y="204.21" width="5.78" height="2.00" fill="#cef8fa"/>
<rect x="481.54" y="204.78" width="5.78" height="2.00" fill="#cef8fa"/>
<rect x="487.32" y="204.76" width="5.78" height="2.00" fill="#cef8fa"/>
<rect x="493.10" y="202.91" width="5.78" height="3.33" fill="#cef8fa"/>
<rect x="498.88" y="203.87" width="5.78" height="2.00" fill="#cef8fa"/>
<rect x="504.66" y="203.30" width="5.78" height="2.00" fill="#cef8fa"/>
<rect x="522.00" y="202.91" width="5.78" height="2.00" fill="#cef8fa"/>
<rect x="533.55" y="203.13" width="5.78" height="2.00" fill="#cef8fa"/>
<rect x="550.89" y="204.29" width="5.78" height="2.00" fill="#cef8fa"/>
<rect x="562.45" y="203.77" width="5.78" height="2.00" fill="#cef8fa"/>
<rect x="568.23" y="204.77" width="5.78" height="2.00" fill="#cef8fa"/>
<rect x="579.79" y="204.53" width="5.78" height="2.00" fill="#cef8fa"/>
<rect x="585.57" y="203.89" width="5.78" height="2.00" fill="#cef8fa"/>
<rect x="597.12" y="203.09" width="5.78" height="2.77" fill="#cef8fa"/>
<rect x="602.90" y="203.39" width="5.78" height="2.00" fill="#cef8fa"/>
<rect x="608.68" y="203.65" width="5.78" height="2.00" fill="#cef8fa"/>
<rect x="614.46" y="205.90" width="5.78" height="2.00" fill="#cef8fa"/>
<rect x="631.80" y="206.58" width="5.78" height="3.41" fill="#cef8fa"/>
<rect x="649.14" y="203.76" width="5.78" height="2.00" fill="#cef8fa"/>
<rect x="660.70" y="205.76" width="5.78" height="2.00" fill="#cef8fa"/>
<rect x="672.25" y="205.41" width="5.78" height="2.00" fill="#cef8fa"/>
<rect x="678.03" y="205.83" width="5.78" height="2.00" fill="#cef8fa"/>
<rect x="683.81" y="204.27" width="5.78" height="3.32" fill="#cef8fa"/>
<rect x="689.59" y="205.32" width="5.78" height="2.00" fill="#cef8fa"/>
<rect x="695.37" y="205.28" width="5.78" height="2.00" fill="#cef8fa"/>
<rect x="706.93" y="202.34" width="5.78" height="2.00" fill="#cef8fa"/>
<rect x="724.27" y="205.19" width="5.78" height="2.00" fill="#cef8fa"/>
<rect x="730.05" y="205.35" width="5.78" height="2.00" fill="#cef8fa"/>
<rect x="741.60" y="204.01" width="5.78" height="2.00" fill="#cef8fa"/>
<rect x="747.38" y="203.34" width="5.78" height="2.15" fill="#cef8fa"/>
<rect x="753.16" y="204.04" width="5.78" height="2.00" fill="#cef8fa"/>
<rect x="77.00" y="127.18" width="5.78" height="2.71" fill="#eef4cc"/>
<rect x="82.78" y="127.04" width="5.78" height="2.19" fill="#eef4cc"/>
<rect x="88.56" y="128.22" width="5.78" height="2.00" fill="#eef4cc"/>
<rect x="94.34" y="128.57" width="5.78" height="2.00" fill="#eef4cc"/>
<rect x="100.12" y="127.18" width="5.78" height="2.39" fill="#eef4cc"/>
<rect x="105.90" y="127.98" width="5.78" height="2.00" fill="#eef4cc"/>
<rect x="111.68" y="127.59" width="5.78" height="2.00" fill="#eef4cc"/>
<rect x="117.45" y="127.88" width="5.78" height="2.00" fill="#eef4cc"/>
<rect x="163.69" y="129.43" width="5.78" height="2.00" fill="#eef4cc"/>
<rect x="175.25" y="128.39" width="5.78" height="2.00" fill="#eef4cc"/>
<rect x="181.03" y="127.74" width="5.78" height="3.49" fill="#eef4cc"/>
<rect x="192.58" y="126.99" width="5.78" height="2.68" fill="#eef4cc"/>
<rect x="204.14" y="128.22" width="5.78" height="2.00" fill="#eef4cc"/>
<rect x="221.48" y="127.61" width="5.78" height="2.20" fill="#eef4cc"/>
<rect x="233.04" y="129.79" width="5.78" height="2.00" fill="#eef4cc"/>
<rect x="238.82" y="127.82" width="5.78" height="2.00" fill="#eef4cc"/>
<rect x="250.38" y="128.74" width="5.78" height="2.00" fill="#eef4cc"/>
<rect x="261.93" y="129.28" width="5.78" height="2.00" fill="#eef4cc"/>
<rect x="279.27" y="129.05" width="5.78" height="2.00" fill="#eef4cc"/>
<rect x="290.83" y="127.34" width="5.78" height="3.38" fill="#eef4cc"/>
<rect x="308.17" y="127.74" width="5.78" height="2.30" fill="#eef4cc"/>
<rect x="325.50" y="127.16" width="5.78" height="2.54" fill="#eef4cc"/>
<rect x="360.18" y="128.80" width="5.78" height="2.00" fill="#eef4cc"/>
<rect x="377.52" y="128.21" width="5.78" height="2.94" fill="#eef4cc"/>
<rect x="389.07" y="128.84" width="5.78" height="2.00" fill="#eef4cc"/>
<rect x="412.19" y="126.61" width="5.78" height="5.08" fill="#eef4cc"/>
<rect x="429.53" y="127.92" width="5.78" height="2.00" fill="#eef4cc"/>
<rect x="441.09" y="128.68" width="5.78" height="2.00" fill="#eef4cc"/>
<rect x="446.87" y="128.93" width="5.78" height="2.00" fill="#eef4cc"/>
<rect x="452.65" y="129.60" width="5.78" height="2.00" fill="#eef4cc"/>
<rect x="464.20" y="127.68" width="5.78" height="2.00" fill="#eef4cc"/>
<rect x="469.98" y="128.62" width="5.78" height="2.00" fill="#eef4cc"/>
<rect x="487.32" y="129.06" width="5.78" height="2.31" fill="#eef4cc"/>
<rect x="510.44" y="128.15" width="5.78" height="2.00" fill="#eef4cc"/>
<rect x="516.22" y="128.15" width="5.78" height="2.00" fill="#eef4cc"/>
<rect x="522.00" y="128.03" width="5.78" height="3.04" fill="#eef4cc"/>
<rect x="527.77" y="128.34" width="5.78" height="2.00" fill="#eef4cc"/>
<rect x="550.89" y="128.93" width="5.78" height="2.00" fill="#eef4cc"/>
<rect x="568.23" y="127.75" width="5.78" height="2.38" fill="#eef4cc"/>
<rect x="574.01" y="128.66" width="5.78" height="2.00" fill="#eef4cc"/>
<rect x="579.79" y="128.63" width="5.78" height="2.00" fill="#eef4cc"/>
<rect x="585.57" y="129.19" width="5.78" height="2.00" fill="#eef4cc"/>
<rect x="597.12" y="129.77" width="5.78" height="2.00" fill="#eef4cc"/>
<rect x="602.90" y="128.67" width="5.78" height="2.00" fill="#eef4cc"/>
<rect x="608.68" y="128.37" width="5.78" height="2.60" fill="#eef4cc"/>
<rect x="614.46" y="129.29" width="5.78" height="3.18" fill="#eef4cc"/>
<rect x="620.24" y="129.22" width="5.78" height="2.00" fill="#eef4cc"/>
<rect x="643.36" y="128.45" width="5.78" height="2.00" fill="#eef4cc"/>
<rect x="649.14" y="128.39" width="5.78" height="2.00" fill="#eef4cc"/>
<rect x="654.92" y="130.17" width="5.78" height="2.00" fill="#eef4cc"/>
<rect x="660.70" y="129.49" width="5.78" height="2.25" fill="#eef4cc"/>
<rect x="666.47" y="129.17" width="5.78" height="2.00" fill="#eef4cc"/>
<rect x="678.03" y="129.73" width="5.78" height="2.00" fill="#eef4cc"/>
<rect x="689.59" y="128.75" width="5.78" height="2.00" fill="#eef4cc"/>
<rect x="695.37" y="127.75" width="5.78" height="2.34" fill="#eef4cc"/>
<rect x="701.15" y="126.88" width="5.78" height="2.84" fill="#eef4cc"/>
<rect x="706.93" y="127.54" width="5.78" height="3.68" fill="#eef4cc"/>
<rect x="712.71" y="128.02" width="5.78" height="2.52" fill="#eef4cc"/>
<rect x="730.05" y="128.25" width="5.78" height="3.93" fill="#eef4cc"/>
<rect x="735.83" y="129.41" width="5.78" height="2.00" fill="#eef4cc"/>
<rect x="423.75" y="106.65" width="5.78" height="51.06" fill="#eef4cc"/>
<rect x="429.53" y="125.56" width="5.78" height="13.24" fill="#eef4cc"/>
<rect x="417.97" y="123.67" width="5.78" height="11.35" fill="#eef4cc"/>
<rect x="77.00" y="30.72" width="5.78" height="5.62" fill="#d2e2fa"/>
<rect x="82.78" y="33.97" width="5.78" height="2.21" fill="#d2e2fa"/>
<rect x="88.56" y="34.87" width="5.78" height="2.00" fill="#d2e2fa"/>
<rect x="117.45" y="33.73" width="5.78" height="2.51" fill="#d2e2fa"/>
<rect x="123.23" y="34.77" width="5.78" height="2.00" fill="#d2e2fa"/>
<rect x="134.79" y="34.75" width="5.78" height="2.66" fill="#d2e2fa"/>
<rect x="140.57" y="34.67" width="5.78" height="2.42" fill="#d2e2fa"/>
<rect x="163.69" y="35.71" width="5.78" height="2.27" fill="#d2e2fa"/>
<rect x="186.80" y="35.03" width="5.78" height="3.32" fill="#d2e2fa"/>
<rect x="209.92" y="35.02" width="5.78" height="3.27" fill="#d2e2fa"/>
<rect x="215.70" y="35.13" width="5.78" height="2.00" fill="#d2e2fa"/>
<rect x="227.26" y="34.38" width="5.78" height="2.42" fill="#d2e2fa"/>
<rect x="233.04" y="35.13" width="5.78" height="2.00" fill="#d2e2fa"/>
<rect x="238.82" y="34.64" width="5.78" height="2.00" fill="#d2e2fa"/>
<rect x="250.38" y="34.04" width="5.78" height="2.98" fill="#d2e2fa"/>
<rect x="261.93" y="34.68" width="5.78" height="2.66" fill="#d2e2fa"/>
<rect x="273.49" y="35.57" width="5.78" height="2.00" fill="#d2e2fa"/>
<rect x="279.27" y="35.45" width="5.78" height="2.79" fill="#d2e2fa"/>
<rect x="285.05" y="35.55" width="5.78" height="2.00" fill="#d2e2fa"/>
<rect x="296.61" y="34.39" width="5.78" height="2.00" fill="#d2e2fa"/>
<rect x="308.17" y="33.85" width="5.78" height="2.75" fill="#d2e2fa"/>
<rect x="313.95" y="34.78" width="5.78" height="2.00" fill="#d2e2fa"/>
<rect x="337.06" y="34.74" width="5.78" height="4.73" fill="#d2e2fa"/>
<rect x="342.84" y="34.23" width="5.78" height="2.80" fill="#d2e2fa"/>
<rect x="377.52" y="33.35" width="5.78" height="4.72" fill="#d2e2fa"/>
<rect x="383.30" y="32.92" width="5.78" height="3.41" fill="#d2e2fa"/>
<rect x="389.07" y="34.33" width="5.78" height="4.96" fill="#d2e2fa"/>
<rect x="400.63" y="36.01" width="5.78" height="2.00" fill="#d2e2fa"/>
<rect x="429.53" y="35.84" width="5.78" height="2.79" fill="#d2e2fa"/>
<rect x="435.31" y="35.59" width="5.78" height="2.00" fill="#d2e2fa"/>
<rect x="441.09" y="35.38" width="5.78" height="2.00" fill="#d2e2fa"/>
<rect x="452.65" y="34.36" width="5.78" height="2.00" fill="#d2e2fa"/>
<rect x="458.42" y="33.74" width="5.78" height="3.12" fill="#d2e2fa"/>
<rect x="475.76" y="34.59" width="5.78" height="2.00" fill="#d2e2fa"/>
<rect x="481.54" y="34.60" width="5.78" height="2.00" fill="#d2e2fa"/>
<rect x="493.10" y="34.32" width="5.78" height="2.43" fill="#d2e2fa"/>
<rect x="498.88" y="32.46" width="5.78" height="3.10" fill="#d2e2fa"/>
<rect x="527.77" y="34.64" width="5.78" height="4.30" fill="#d2e2fa"/>
<rect x="556.67" y="36.24" width="5.78" height="2.78" fill="#d2e2fa"/>
<rect x="562.45" y="36.45" width="5.78" height="2.63" fill="#d2e2fa"/>
<rect x="574.01" y="34.37" width="5.78" height="2.91" fill="#d2e2fa"/>
<rect x="579.79" y="32.09" width="5.78" height="3.34" fill="#d2e2fa"/>
<rect x="585.57" y="34.90" width="5.78" height="3.31" fill="#d2e2fa"/>
<rect x="591.35" y="34.80" width="5.78" height="2.00" fill="#d2e2fa"/>
<rect x="608.68" y="33.88" width="5.78" height="2.00" fill="#d2e2fa"/>
<rect x="620.24" y="32.05" width="5.78" height="3.80" fill="#d2e2fa"/>
<rect x="626.02" y="32.95" width="5.78" height="4.82" fill="#d2e2fa"/>
<rect x="637.58" y="34.06" width="5.78" height="2.00" fill="#d2e2fa"/>
<rect x="649.14" y="35.01" width="5.78" height="2.00" fill="#d2e2fa"/>
<rect x="654.92" y="29.92" width="5.78" height="5.33" fill="#d2e2fa"/>
<rect x="660.70" y="33.59" width="5.78" height="2.00" fill="#d2e2fa"/>
<rect x="666.47" y="33.51" width="5.78" height="2.00" fill="#d2e2fa"/>
<rect x="672.25" y="34.34" width="5.78" height="2.26" fill="#d2e2fa"/>
<rect x="689.59" y="33.88" width="5.78" height="2.00" fill="#d2e2fa"/>
<rect x="701.15" y="34.37" width="5.78" height="2.00" fill="#d2e2fa"/>
<rect x="706.93" y="33.21" width="5.78" height="2.97" fill="#d2e2fa"/>
<rect x="712.71" y="33.03" width="5.78" height="2.21" fill="#d2e2fa"/>
<rect x="718.49" y="33.47" width="5.78" height="2.00" fill="#d2e2fa"/>
<rect x="724.27" y="32.07" width="5.78" height="3.57" fill="#d2e2fa"/>
<rect x="747.38" y="33.93" width="5.78" height="2.00" fill="#d2e2fa"/>
<rect x="753.16" y="33.99" width="5.78" height="2.00" fill="#d2e2fa"/>
<rect x="758.94" y="33.99" width="5.78" height="2.00" fill="#d2e2fa"/>
<path d="M77.50 241.00H83.28V241.00H89.06V241.00H94.84V242.00H100.62V242.00H106.40V242.00H112.18V240.00H117.95V240.00H123.73V240.00H129.51V241.00H135.29V241.00H141.07V241.00H146.85V242.00H152.63V242.00H158.41V240.00H164.19V240.00H169.97V240.00H175.75V241.00H181.53V241.00H187.30V241.00H193.08V241.00H198.86V241.00H204.64V241.00H210.42V241.00H216.20V240.00H221.98V241.00H227.76V240.00H233.54V240.00H239.32V240.00H245.10V240.00H250.88V240.00H256.65V241.00H262.43V241.00H268.21V241.00H273.99V241.00H279.77V241.00H285.55V241.00H291.33V241.00H297.11V241.00H302.89V241.00H308.67V241.00H314.45V240.00H320.22V240.00H326.00V240.00H331.78V240.00H337.56V241.00H343.34V241.00H349.12V242.00H354.90V242.00H360.68V241.00H366.46V239.00H372.24V239.00H378.02V231.00H383.80V231.00H389.57V239.00H395.35V239.00H401.13V240.00H406.91V240.00H412.69V240.00H418.47V239.00H424.25V239.00H430.03V239.00H435.81V240.00H441.59V240.00H447.37V240.00H453.15V240.00H458.92V240.00H464.70V241.00H470.48V240.00H476.26V240.00H482.04V240.00H487.82V239.00H493.60V239.00H499.38V239.00H505.16V239.00H510.94V239.00H516.72V239.00H522.50V239.00H528.27V239.00H534.05V239.00H539.83V239.00H545.61V240.00H551.39V240.00H557.17V241.00H562.95V240.00H568.73V240.00H574.51V241.00H580.29V241.00H586.07V241.00H591.85V240.00H597.62V240.00H603.40V240.00H609.18V241.00H614.96V241.00H620.74V240.00H626.52V240.00H632.30V240.00H638.08V240.00H643.86V240.00H649.64V240.00H655.42V241.00H661.20V241.00H666.97V241.00H672.75V241.00H678.53V241.00H684.31V240.00H690.09V240.00H695.87V240.00H701.65V241.00H707.43V241.00H713.21V240.00H718.99V238.00H724.77V239.00H730.55V240.00H736.33V240.00H742.10V240.00H747.88V241.00H753.66V241.00H759.44" fill="none" stroke="#3ce8f4" stroke-width="1.6" stroke-linejoin="miter"/>
<path d="M77.50 259.00H83.28V259.00H89.06V258.00H94.84V258.00H100.62V258.00H106.40V258.00H112.18V258.00H117.95V258.00H123.73V259.00H129.51V260.00H135.29V260.00H141.07V260.00H146.85V259.00H152.63V259.00H158.41V259.00H164.19V259.00H169.97V259.00H175.75V259.00H181.53V259.00H187.30V259.00H193.08V259.00H198.86V259.00H204.64V259.00H210.42V259.00H216.20V258.00H221.98V258.00H227.76V259.00H233.54V259.00H239.32V258.00H245.10V259.00H250.88V259.00H256.65V259.00H262.43V259.00H268.21V260.00H273.99V259.00H279.77V259.00H285.55V259.00H291.33V259.00H297.11V259.00H302.89V259.00H308.67V260.00H314.45V260.00H320.22V260.00H326.00V260.00H331.78V259.00H337.56V260.00H343.34V259.00H349.12V258.00H354.90V258.00H360.68V259.00H366.46V259.00H372.24V259.00H378.02V259.00H383.80V260.00H389.57V260.00H395.35V260.00H401.13V259.00H406.91V259.00H412.69V259.00H418.47V259.00H424.25V259.00H430.03V259.00H435.81V259.00H441.59V259.00H447.37V260.00H453.15V259.00H458.92V259.00H464.70V259.00H470.48V259.00H476.26V259.00H482.04V259.00H487.82V258.00H493.60V259.00H499.38V259.00H505.16V259.00H510.94V259.00H516.72V259.00H522.50V259.00H528.27V259.00H534.05V258.00H539.83V258.00H545.61V259.00H551.39V259.00H557.17V259.00H562.95V259.00H568.73V259.00H574.51V259.00H580.29V259.00H586.07V259.00H591.85V259.00H597.62V259.00H603.40V258.00H609.18V258.00H614.96V258.00H620.74V258.00H626.52V259.00H632.30V259.00H638.08V258.00H643.86V258.00H649.64V259.00H655.42V259.00H661.20V259.00H666.97V258.00H672.75V258.00H678.53V258.00H684.31V259.00H690.09V259.00H695.87V259.00H701.65V259.00H707.43V259.00H713.21V260.00H718.99V260.00H724.77V259.00H730.55V259.00H736.33V260.00H742.10V260.00H747.88V260.00H753.66V259.00H759.44V259.00H765.22" fill="none" stroke="#36a836" stroke-width="1.6" stroke-linejoin="miter"/>
<path d="M77.50 229.00H83.28V229.00H89.06V229.00H94.84V227.00H100.62V227.00H106.40V226.00H112.18V226.00H117.95V226.00H123.73V227.00H129.51V228.00H135.29V228.00H141.07V228.00H146.85V228.00H152.63V230.00H158.41V230.00H164.19V230.00H169.97V230.00H175.75V230.00H181.53V229.00H187.30V229.00H193.08V229.00H198.86V229.00H204.64V229.00H210.42V230.00H216.20V230.00H221.98V227.00H227.76V227.00H233.54V227.00H239.32V228.00H245.10V228.00H250.88V228.00H256.65V228.00H262.43V228.00H268.21V228.00H273.99V228.00H279.77V229.00H285.55V229.00H291.33V229.00H297.11V228.00H302.89V228.00H308.67V228.00H314.45V228.00H320.22V229.00H326.00V229.00H331.78V230.00H337.56V230.00H343.34V230.00H349.12V228.00H354.90V228.00H360.68V228.00H366.46V228.00H372.24V228.00H378.02V228.00H383.80V228.00H389.57V229.00H395.35V229.00H401.13V227.00H406.91V229.00H412.69V225.00H418.47V227.00H424.25V227.00H430.03V228.00H435.81V228.00H441.59V228.00H447.37V228.00H453.15V228.00H458.92V228.00H464.70V227.00H470.48V227.00H476.26V227.00H482.04V227.00H487.82V227.00H493.60V228.00H499.38V228.00H505.16V228.00H510.94V228.00H516.72V228.00H522.50V228.00H528.27V228.00H534.05V227.00H539.83V227.00H545.61V228.00H551.39V228.00H557.17V228.00H562.95V229.00H568.73V230.00H574.51V228.00H580.29V228.00H586.07V228.00H591.85V226.00H597.62V228.00H603.40V228.00H609.18V229.00H614.96V227.00H620.74V227.00H626.52V225.00H632.30V225.00H638.08V225.00H643.86V225.00H649.64V226.00H655.42V226.00H661.20V225.00H666.97V227.00H672.75V227.00H678.53V227.00H684.31V227.00H690.09V227.00H695.87V227.00H701.65V226.00H707.43V226.00H713.21V226.00H718.99V227.00H724.77V227.00H730.55V227.00H736.33V227.00H742.10V227.00H747.88V227.00H753.66V227.00H759.44V227.00H765.22" fill="none" stroke="#f03a8c" stroke-width="1.6" stroke-linejoin="miter"/>
<path d="M77.50 206.00H83.28V206.00H89.06V206.00H94.84V205.00H100.62V205.00H106.40V205.00H112.18V205.00H117.95V203.00H123.73V203.00H129.51V204.00H135.29V204.00H141.07V204.00H146.85V205.00H152.63V205.00H158.41V205.00H164.19V205.00H169.97V205.00H175.75V205.00H181.53V205.00H187.30V206.00H193.08V206.00H198.86V205.00H204.64V205.00H210.42V203.00H216.20V203.00H221.98V204.00H227.76V204.00H233.54V204.00H239.32V204.00H245.10V204.00H250.88V204.00H256.65V204.00H262.43V205.00H268.21V204.00H273.99V204.00H279.77V204.00H285.55V205.00H291.33V205.00H297.11V206.00H302.89V206.00H308.67V206.00H314.45V205.00H320.22V205.00H326.00V205.00H331.78V205.00H337.56V205.00H343.34V205.00H349.12V205.00H354.90V205.00H360.68V205.00H366.46V205.00H372.24V205.00H378.02V206.00H383.80V206.00H389.57V205.00H395.35V205.00H401.13V205.00H406.91V205.00H412.69V205.00H418.47V206.00H424.25V206.00H430.03V206.00H435.81V205.00H441.59V205.00H447.37V205.00H453.15V205.00H458.92V205.00H464.70V204.00H470.48V204.00H476.26V204.00H482.04V205.00H487.82V205.00H493.60V205.00H499.38V204.00H505.16V204.00H510.94V205.00H516.72V205.00H522.50V204.00H528.27V204.00H534.05V203.00H539.83V203.00H545.61V203.00H551.39V204.00H557.17V204.00H562.95V205.00H568.73V205.00H574.51V205.00H580.29V205.00H586.07V204.00H591.85V204.00H597.62V204.00H603.40V204.00H609.18V204.00H614.96V207.00H620.74V207.00H626.52V207.00H632.30V207.00H638.08V206.00H643.86V205.00H649.64V205.00H655.42V206.00H661.20V206.00H666.97V206.00H672.75V206.00H678.53V206.00H684.31V206.00H690.09V206.00H695.87V206.00H701.65V205.00H707.43V204.00H713.21V204.00H718.99V204.00H724.77V206.00H730.55V206.00H736.33V206.00H742.10V205.00H747.88V205.00H753.66V205.00H759.44" fill="none" stroke="#3ce8f4" stroke-width="1.6" stroke-linejoin="miter"/>
<path d="M77.50 129.00H83.28V129.00H89.06V129.00H94.84V129.00H100.62V128.00H106.40V128.00H112.18V129.00H117.95V129.00H123.73V129.00H129.51V129.00H135.29V129.00H141.07V129.00H146.85V129.00H152.63V130.00H158.41V130.00H164.19V130.00H169.97V129.00H175.75V129.00H181.53V129.00H187.30V129.00H193.08V129.00H198.86V129.00H204.64V129.00H210.42V129.00H216.20V129.00H221.98V129.00H227.76V130.00H233.54V130.00H239.32V129.00H245.10V129.00H250.88V129.00H256.65V129.00H262.43V129.00H268.21V129.00H273.99V129.00H279.77V129.00H285.55V129.00H291.33V129.00H297.11V129.00H302.89V129.00H308.67V129.00H314.45V129.00H320.22V129.00H326.00V129.00H331.78V130.00H337.56V128.00H343.34V128.00H349.12V129.00H354.90V129.00H360.68V130.00H366.46V130.00H372.24V130.00H378.02V129.00H383.80V129.00H389.57V129.00H395.35V129.00H401.13V129.00H406.91V130.00H412.69V130.00H418.47V129.00H424.25V129.00H430.03V129.00H435.81V129.00H441.59V129.00H447.37V129.00H453.15V130.00H458.92V129.00H464.70V129.00H470.48V129.00H476.26V129.00H482.04V129.00H487.82V129.00H493.60V129.00H499.38V129.00H505.16V129.00H510.94V129.00H516.72V129.00H522.50V129.00H528.27V129.00H534.05V129.00H539.83V129.00H545.61V129.00H551.39V129.00H557.17V129.00H562.95V129.00H568.73V129.00H574.51V129.00H580.29V129.00H586.07V129.00H591.85V129.00H597.62V130.00H603.40V130.00H609.18V130.00H614.96V130.00H620.74V130.00H626.52V130.00H632.30V130.00H638.08V129.00H643.86V129.00H649.64V130.00H655.42V130.00H661.20V130.00H666.97V130.00H672.75V130.00H678.53V130.00H684.31V130.00H690.09V130.00H695.87V129.00H701.65V129.00H707.43V129.00H713.21V129.00H718.99V129.00H724.77V129.00H730.55V130.00H736.33V130.00H742.10V130.00H747.88V129.00H753.66V129.00H759.44V130.00H765.22" fill="none" stroke="#c4dc34" stroke-width="1.6" stroke-linejoin="miter"/>
<path d="M77.50 35.00H83.28V35.00H89.06V35.00H94.84V35.00H100.62V35.00H106.40V35.00H112.18V35.00H117.95V35.00H123.73V35.00H129.51V35.00H135.29V35.00H141.07V36.00H146.85V36.00H152.63V36.00H158.41V36.00H164.19V36.00H169.97V36.00H175.75V36.00H181.53V36.00H187.30V36.00H193.08V36.00H198.86V36.00H204.64V37.00H210.42V37.00H216.20V37.00H221.98V35.00H227.76V35.00H233.54V35.00H239.32V36.00H245.10V36.00H250.88V36.00H256.65V36.00H262.43V36.00H268.21V36.00H273.99V36.00H279.77V36.00H285.55V36.00H291.33V35.00H297.11V35.00H302.89V35.00H308.67V36.00H314.45V36.00H320.22V35.00H326.00V35.00H331.78V35.00H337.56V36.00H343.34V36.00H349.12V36.00H354.90V36.00H360.68V36.00H366.46V36.00H372.24V35.00H378.02V35.00H383.80V36.00H389.57V37.00H395.35V36.00H401.13V36.00H406.91V36.00H412.69V36.00H418.47V36.00H424.25V36.00H430.03V36.00H435.81V36.00H441.59V36.00H447.37V35.00H453.15V35.00H458.92V35.00H464.70V36.00H470.48V36.00H476.26V36.00H482.04V36.00H487.82V36.00H493.60V35.00H499.38V35.00H505.16V35.00H510.94V35.00H516.72V37.00H522.50V37.00H528.27V36.00H534.05V35.00H539.83V36.00H545.61V36.00H551.39V37.00H557.17V37.00H562.95V37.00H568.73V36.00H574.51V36.00H580.29V34.00H586.07V35.00H591.85V35.00H597.62V36.00H603.40V36.00H609.18V36.00H614.96V36.00H620.74V36.00H626.52V35.00H632.30V35.00H638.08V35.00H643.86V35.00H649.64V35.00H655.42V34.00H661.20V34.00H666.97V34.00H672.75V34.00H678.53V34.00H684.31V35.00H690.09V35.00H695.87V35.00H701.65V35.00H707.43V34.00H713.21V34.00H718.99V34.00H724.77V34.00H730.55V34.00H736.33V35.00H742.10V35.00H747.88V34.00H753.66V35.00H759.44V35.00H765.22" fill="none" stroke="#3482ec" stroke-width="1.6" stroke-linejoin="miter"/>
<path d="M77.1 29 V268" stroke="#757575" stroke-width="1.5"/>
<path d="M72 264.2 H777" stroke="#757575" stroke-width="1.5"/>
<path d="M73.6 30 L77.1 24.5 L80.6 30 Z" fill="#8b1a1a"/>
<path d="M773 260.2 L778.7 264.2 L773 268.2 Z" fill="#8b1a1a"/>
<text x="402" y="27.2" font-family='"Liberation Mono", monospace' font-size="15" fill="#222" stroke="#222" stroke-width="0.2" text-anchor="middle">Zimbox</text>
<text x="55.8" y="267.9" font-family='"Liberation Mono", monospace' font-size="11.8" fill="#222" stroke="#222" stroke-width="0.25" text-anchor="end" xml:space="preserve">0</text>
<text x="70.2" y="78.8" font-family='"Liberation Mono", monospace' font-size="11.8" fill="#222" stroke="#222" stroke-width="0.25" text-anchor="end" xml:space="preserve">10 m</text>
<text x="181.3" y="278.8" font-family='"Liberation Mono", monospace' font-size="11.8" fill="#222" stroke="#222" stroke-width="0.25" text-anchor="middle">12:00</text>
<text x="320.0" y="278.8" font-family='"Liberation Mono", monospace' font-size="11.8" fill="#222" stroke="#222" stroke-width="0.25" text-anchor="middle">14:00</text>
<text x="458.7" y="278.8" font-family='"Liberation Mono", monospace' font-size="11.8" fill="#222" stroke="#222" stroke-width="0.25" text-anchor="middle">16:00</text>
<text x="597.4" y="278.8" font-family='"Liberation Mono", monospace' font-size="11.8" fill="#222" stroke="#222" stroke-width="0.25" text-anchor="middle">18:00</text>
<text x="736.1" y="278.8" font-family='"Liberation Mono", monospace' font-size="11.8" fill="#222" stroke="#222" stroke-width="0.25" text-anchor="middle">20:00</text>
<text transform="translate(16.5,148) rotate(-90)" font-family='"Liberation Mono", monospace' font-size="13" fill="#333" text-anchor="middle">Seconds</text>
<text transform="translate(791.5,5) rotate(90)" font-family='"Liberation Mono", monospace' font-size="10.5" fill="#a8a8a8" textLength="127" lengthAdjust="spacingAndGlyphs">RRDTOOL / TOBI OETIKER</text>
<rect x="17.7" y="288.3" width="10" height="10" fill="#009f00" stroke="#111" stroke-width="1"/>
<text x="34.0" y="298.00" font-family='"Liberation Mono", monospace' font-size="13.5" fill="#2a2a2a" stroke="#2a2a2a" stroke-width="0.25" xml:space="preserve">median RTT from Sunrise F</text>
<text x="255.0" y="298.00" font-family='"Liberation Mono", monospace' font-size="13.5" fill="#2a2a2a" stroke="#2a2a2a" stroke-width="0.25" xml:space="preserve">250.5 us av md </text>
<text x="395.0" y="298.00" font-family='"Liberation Mono", monospace' font-size="13.5" fill="#2a2a2a" stroke="#2a2a2a" stroke-width="0.25" xml:space="preserve">  0.0 % av ls</text>
<text x="518.8" y="298.00" font-family='"Liberation Mono", monospace' font-size="13.5" fill="#2a2a2a" stroke="#2a2a2a" stroke-width="0.25" xml:space="preserve"> 73.0 us av sd</text>
<text x="650.7" y="298.00" font-family='"Liberation Mono", monospace' font-size="13.5" fill="#2a2a2a" stroke="#2a2a2a" stroke-width="0.25" xml:space="preserve">  3.4   am/as</text>
<rect x="17.7" y="304.6" width="10" height="10" fill="#00e8f4" stroke="#111" stroke-width="1"/>
<text x="34.0" y="314.25" font-family='"Liberation Mono", monospace' font-size="13.5" fill="#2a2a2a" stroke="#2a2a2a" stroke-width="0.25" xml:space="preserve">median RTT from Swissco PMP</text>
<text x="271.2" y="314.25" font-family='"Liberation Mono", monospace' font-size="13.5" fill="#2a2a2a" stroke="#2a2a2a" stroke-width="0.25" xml:space="preserve">  3.1 ms av md </text>
<text x="411.2" y="314.25" font-family='"Liberation Mono", monospace' font-size="13.5" fill="#2a2a2a" stroke="#2a2a2a" stroke-width="0.25" xml:space="preserve">  0.0 % av ls</text>
<text x="535.0" y="314.25" font-family='"Liberation Mono", monospace' font-size="13.5" fill="#2a2a2a" stroke="#2a2a2a" stroke-width="0.25" xml:space="preserve">120.4 us av sd</text>
<text x="666.9" y="314.25" font-family='"Liberation Mono", monospace' font-size="13.5" fill="#2a2a2a" stroke="#2a2a2a" stroke-width="0.25" xml:space="preserve"> 26.1   am/as</text>
<rect x="17.7" y="320.8" width="10" height="10" fill="#00e8f4" stroke="#111" stroke-width="1"/>
<text x="34.0" y="330.50" font-family='"Liberation Mono", monospace' font-size="13.5" fill="#2a2a2a" stroke="#2a2a2a" stroke-width="0.25" xml:space="preserve">median RTT from Switch F </text>
<text x="255.0" y="330.50" font-family='"Liberation Mono", monospace' font-size="13.5" fill="#2a2a2a" stroke="#2a2a2a" stroke-width="0.25" xml:space="preserve">  1.2 ms av md </text>
<text x="395.0" y="330.50" font-family='"Liberation Mono", monospace' font-size="13.5" fill="#2a2a2a" stroke="#2a2a2a" stroke-width="0.25" xml:space="preserve">  0.0 % av ls</text>
<text x="518.8" y="330.50" font-family='"Liberation Mono", monospace' font-size="13.5" fill="#2a2a2a" stroke="#2a2a2a" stroke-width="0.25" xml:space="preserve">  1.5 ms av sd</text>
<text x="650.7" y="330.50" font-family='"Liberation Mono", monospace' font-size="13.5" fill="#2a2a2a" stroke="#2a2a2a" stroke-width="0.25" xml:space="preserve">827.4 m am/as</text>
<rect x="17.7" y="337.1" width="10" height="10" fill="#ee0077" stroke="#111" stroke-width="1"/>
<text x="34.0" y="346.75" font-family='"Liberation Mono", monospace' font-size="13.5" fill="#2a2a2a" stroke="#2a2a2a" stroke-width="0.25" xml:space="preserve">median RTT from Swissco P2P</text>
<text x="271.2" y="346.75" font-family='"Liberation Mono", monospace' font-size="13.5" fill="#2a2a2a" stroke="#2a2a2a" stroke-width="0.25" xml:space="preserve">  1.9 ms av md </text>
<text x="411.2" y="346.75" font-family='"Liberation Mono", monospace' font-size="13.5" fill="#2a2a2a" stroke="#2a2a2a" stroke-width="0.25" xml:space="preserve">  0.0 % av ls</text>
<text x="535.0" y="346.75" font-family='"Liberation Mono", monospace' font-size="13.5" fill="#2a2a2a" stroke="#2a2a2a" stroke-width="0.25" xml:space="preserve">131.4 us av sd</text>
<text x="666.9" y="346.75" font-family='"Liberation Mono", monospace' font-size="13.5" fill="#2a2a2a" stroke="#2a2a2a" stroke-width="0.25" xml:space="preserve"> 14.3   am/as</text>
<rect x="17.7" y="353.3" width="10" height="10" fill="#0061ee" stroke="#111" stroke-width="1"/>
<text x="34.0" y="363.00" font-family='"Liberation Mono", monospace' font-size="13.5" fill="#2a2a2a" stroke="#2a2a2a" stroke-width="0.25" xml:space="preserve">median RTT from INIT7 F  </text>
<text x="255.0" y="363.00" font-family='"Liberation Mono", monospace' font-size="13.5" fill="#2a2a2a" stroke="#2a2a2a" stroke-width="0.25" xml:space="preserve"> 12.0 ms av md </text>
<text x="395.0" y="363.00" font-family='"Liberation Mono", monospace' font-size="13.5" fill="#2a2a2a" stroke="#2a2a2a" stroke-width="0.25" xml:space="preserve">  0.0 % av ls</text>
<text x="518.8" y="363.00" font-family='"Liberation Mono", monospace' font-size="13.5" fill="#2a2a2a" stroke="#2a2a2a" stroke-width="0.25" xml:space="preserve"> 42.4 us av sd</text>
<text x="650.7" y="363.00" font-family='"Liberation Mono", monospace' font-size="13.5" fill="#2a2a2a" stroke="#2a2a2a" stroke-width="0.25" xml:space="preserve">284.1   am/as</text>
<rect x="17.7" y="369.6" width="10" height="10" fill="#cce000" stroke="#111" stroke-width="1"/>
<text x="34.0" y="379.25" font-family='"Liberation Mono", monospace' font-size="13.5" fill="#2a2a2a" stroke="#2a2a2a" stroke-width="0.25" xml:space="preserve">median RTT from GGA F    </text>
<text x="255.0" y="379.25" font-family='"Liberation Mono", monospace' font-size="13.5" fill="#2a2a2a" stroke="#2a2a2a" stroke-width="0.25" xml:space="preserve">  7.1 ms av md </text>
<text x="395.0" y="379.25" font-family='"Liberation Mono", monospace' font-size="13.5" fill="#2a2a2a" stroke="#2a2a2a" stroke-width="0.25" xml:space="preserve">  0.0 % av ls</text>
<text x="518.8" y="379.25" font-family='"Liberation Mono", monospace' font-size="13.5" fill="#2a2a2a" stroke="#2a2a2a" stroke-width="0.25" xml:space="preserve">100.3 us av sd</text>
<text x="650.7" y="379.25" font-family='"Liberation Mono", monospace' font-size="13.5" fill="#2a2a2a" stroke="#2a2a2a" stroke-width="0.25" xml:space="preserve"> 70.6   am/as</text>
<text x="18" y="394.8" font-family='"Liberation Mono", monospace' font-size="13.5" fill="#2a2a2a" stroke="#2a2a2a" stroke-width="0.25" xml:space="preserve">ICMP Echo Pings (56 Bytes)</text>
<text x="786.7" y="394.8" font-family='"Liberation Mono", monospace' font-size="13.5" fill="#2a2a2a" stroke="#2a2a2a" stroke-width="0.25" text-anchor="end">Mon Sep 11 20:29:47 2023 CEST</text>
</svg>
<svg width="806" height="407" style="position:absolute;left:1146px;top:635px" shape-rendering="auto">
<rect x="0" y="0" width="806" height="407" fill="#f3f3f3"/>
<rect x="0" y="0" width="806" height="2" fill="#c9c9c9"/><rect x="0" y="0" width="2" height="407" fill="#c9c9c9"/>
<rect x="0" y="405" width="806" height="2" fill="#9a9a9a"/><rect x="804" y="0" width="2" height="407" fill="#9a9a9a"/>
<rect x="78" y="32.0" width="693.0" height="231.8" fill="#ffffff"/>
<path d="M72 227.5 H772.0" stroke="#dcdcdc" stroke-width="1" stroke-dasharray="1,1"/>
<path d="M72 190.5 H772.0" stroke="#dcdcdc" stroke-width="1" stroke-dasharray="1,1"/>
<path d="M72 153.5 H772.0" stroke="#dcdcdc" stroke-width="1" stroke-dasharray="1,1"/>
<path d="M72 116.5 H772.0" stroke="#dcdcdc" stroke-width="1" stroke-dasharray="1,1"/>
<path d="M72 42.5 H772.0" stroke="#dcdcdc" stroke-width="1" stroke-dasharray="1,1"/>
<path d="M72 264.5 H772.0" stroke="#f8c8c8" stroke-width="1" stroke-dasharray="1,1"/>
<path d="M72 79.5 H772.0" stroke="#f8c8c8" stroke-width="1" stroke-dasharray="1,1"/>
<path d="M111.5 30.0 V267.8" stroke="#f8c8c8" stroke-width="1" stroke-dasharray="1,1"/>
<path d="M146.5 30.0 V265.8" stroke="#dedede" stroke-width="1" stroke-dasharray="1,1"/>
<path d="M181.5 30.0 V267.8" stroke="#f8c8c8" stroke-width="1" stroke-dasharray="1,1"/>
<path d="M215.5 30.0 V265.8" stroke="#dedede" stroke-width="1" stroke-dasharray="1,1"/>
<path d="M250.5 30.0 V267.8" stroke="#f8c8c8" stroke-width="1" stroke-dasharray="1,1"/>
<path d="M285.5 30.0 V265.8" stroke="#dedede" stroke-width="1" stroke-dasharray="1,1"/>
<path d="M319.5 30.0 V267.8" stroke="#f8c8c8" stroke-width="1" stroke-dasharray="1,1"/>
<path d="M354.5 30.0 V265.8" stroke="#dedede" stroke-width="1" stroke-dasharray="1,1"/>
<path d="M389.5 30.0 V267.8" stroke="#f8c8c8" stroke-width="1" stroke-dasharray="1,1"/>
<path d="M423.5 30.0 V265.8" stroke="#dedede" stroke-width="1" stroke-dasharray="1,1"/>
<path d="M458.5 30.0 V267.8" stroke="#f8c8c8" stroke-width="1" stroke-dasharray="1,1"/>
<path d="M493.5 30.0 V265.8" stroke="#dedede" stroke-width="1" stroke-dasharray="1,1"/>
<path d="M527.5 30.0 V267.8" stroke="#f8c8c8" stroke-width="1" stroke-dasharray="1,1"/>
<path d="M562.5 30.0 V265.8" stroke="#dedede" stroke-width="1" stroke-dasharray="1,1"/>
<path d="M597.5 30.0 V267.8" stroke="#f8c8c8" stroke-width="1" stroke-dasharray="1,1"/>
<path d="M631.5 30.0 V265.8" stroke="#dedede" stroke-width="1" stroke-dasharray="1,1"/>
<path d="M666.5 30.0 V267.8" stroke="#f8c8c8" stroke-width="1" stroke-dasharray="1,1"/>
<path d="M701.5 30.0 V265.8" stroke="#dedede" stroke-width="1" stroke-dasharray="1,1"/>
<path d="M735.5 30.0 V267.8" stroke="#f8c8c8" stroke-width="1" stroke-dasharray="1,1"/>
<path d="M770.5 30.0 V265.8" stroke="#dedede" stroke-width="1" stroke-dasharray="1,1"/>
<rect x="77.00" y="217.76" width="5.78" height="43.03" fill="#cef8fa"/>
<rect x="88.56" y="212.67" width="5.78" height="32.69" fill="#cef8fa"/>
<rect x="94.34" y="210.53" width="5.78" height="40.55" fill="#cef8fa"/>
<rect x="100.12" y="217.54" width="5.78" height="31.77" fill="#cef8fa"/>
<rect x="105.90" y="203.00" width="5.78" height="57.41" fill="#cef8fa"/>
<rect x="111.68" y="226.30" width="5.78" height="27.02" fill="#cef8fa"/>
<rect x="123.23" y="200.73" width="5.78" height="55.08" fill="#cef8fa"/>
<rect x="134.79" y="220.73" width="5.78" height="29.18" fill="#cef8fa"/>
<rect x="146.35" y="226.89" width="5.78" height="31.30" fill="#cef8fa"/>
<rect x="152.13" y="221.08" width="5.78" height="26.09" fill="#cef8fa"/>
<rect x="157.91" y="195.38" width="5.78" height="50.36" fill="#cef8fa"/>
<rect x="163.69" y="217.55" width="5.78" height="36.06" fill="#cef8fa"/>
<rect x="169.47" y="215.79" width="5.78" height="29.40" fill="#cef8fa"/>
<rect x="175.25" y="208.71" width="5.78" height="52.43" fill="#cef8fa"/>
<rect x="181.03" y="194.95" width="5.78" height="64.53" fill="#cef8fa"/>
<rect x="186.80" y="226.99" width="5.78" height="25.65" fill="#cef8fa"/>
<rect x="192.58" y="226.96" width="5.78" height="26.56" fill="#cef8fa"/>
<rect x="204.14" y="216.82" width="5.78" height="33.81" fill="#cef8fa"/>
<rect x="209.92" y="209.44" width="5.78" height="50.66" fill="#cef8fa"/>
<rect x="215.70" y="191.85" width="5.78" height="70.65" fill="#cef8fa"/>
<rect x="221.48" y="208.29" width="5.78" height="52.27" fill="#cef8fa"/>
<rect x="227.26" y="190.02" width="5.78" height="53.32" fill="#cef8fa"/>
<rect x="233.04" y="203.90" width="5.78" height="40.39" fill="#cef8fa"/>
<rect x="238.82" y="208.09" width="5.78" height="54.64" fill="#cef8fa"/>
<rect x="244.60" y="205.31" width="5.78" height="46.31" fill="#cef8fa"/>
<rect x="256.15" y="218.73" width="5.78" height="27.33" fill="#cef8fa"/>
<rect x="261.93" y="214.75" width="5.78" height="40.69" fill="#cef8fa"/>
<rect x="273.49" y="228.31" width="5.78" height="19.06" fill="#cef8fa"/>
<rect x="279.27" y="215.45" width="5.78" height="43.82" fill="#cef8fa"/>
<rect x="285.05" y="219.54" width="5.78" height="42.25" fill="#cef8fa"/>
<rect x="290.83" y="226.51" width="5.78" height="21.17" fill="#cef8fa"/>
<rect x="296.61" y="200.43" width="5.78" height="46.78" fill="#cef8fa"/>
<rect x="302.39" y="203.71" width="5.78" height="54.84" fill="#cef8fa"/>
<rect x="313.95" y="222.76" width="5.78" height="21.27" fill="#cef8fa"/>
<rect x="319.72" y="217.77" width="5.78" height="28.37" fill="#cef8fa"/>
<rect x="325.50" y="205.60" width="5.78" height="54.52" fill="#cef8fa"/>
<rect x="337.06" y="227.73" width="5.78" height="16.07" fill="#cef8fa"/>
<rect x="342.84" y="192.43" width="5.78" height="51.14" fill="#cef8fa"/>
<rect x="348.62" y="228.40" width="5.78" height="33.96" fill="#cef8fa"/>
<rect x="354.40" y="217.17" width="5.78" height="34.01" fill="#cef8fa"/>
<rect x="365.96" y="225.50" width="5.78" height="26.69" fill="#cef8fa"/>
<rect x="371.74" y="226.91" width="5.78" height="25.40" fill="#cef8fa"/>
<rect x="383.30" y="214.74" width="5.78" height="34.57" fill="#cef8fa"/>
<rect x="394.85" y="195.35" width="5.78" height="64.82" fill="#cef8fa"/>
<rect x="417.97" y="226.60" width="5.78" height="36.01" fill="#cef8fa"/>
<rect x="423.75" y="224.55" width="5.78" height="26.26" fill="#cef8fa"/>
<rect x="429.53" y="200.45" width="5.78" height="58.63" fill="#cef8fa"/>
<rect x="435.31" y="224.48" width="5.78" height="29.85" fill="#cef8fa"/>
<rect x="441.09" y="217.19" width="5.78" height="42.89" fill="#cef8fa"/>
<rect x="446.87" y="192.44" width="5.78" height="60.29" fill="#cef8fa"/>
<rect x="458.42" y="190.10" width="5.78" height="55.44" fill="#cef8fa"/>
<rect x="464.20" y="211.81" width="5.78" height="40.88" fill="#cef8fa"/>
<rect x="475.76" y="206.70" width="5.78" height="45.89" fill="#cef8fa"/>
<rect x="481.54" y="203.01" width="5.78" height="45.96" fill="#cef8fa"/>
<rect x="487.32" y="204.17" width="5.78" height="50.23" fill="#cef8fa"/>
<rect x="493.10" y="206.97" width="5.78" height="55.56" fill="#cef8fa"/>
<rect x="498.88" y="217.76" width="5.78" height="27.99" fill="#cef8fa"/>
<rect x="504.66" y="198.43" width="5.78" height="50.36" fill="#cef8fa"/>
<rect x="510.44" y="195.90" width="5.78" height="66.97" fill="#cef8fa"/>
<rect x="516.22" y="208.00" width="5.78" height="41.84" fill="#cef8fa"/>
<rect x="522.00" y="227.33" width="5.78" height="32.43" fill="#cef8fa"/>
<rect x="527.77" y="224.31" width="5.78" height="37.97" fill="#cef8fa"/>
<rect x="533.55" y="213.99" width="5.78" height="38.74" fill="#cef8fa"/>
<rect x="539.33" y="200.67" width="5.78" height="56.15" fill="#cef8fa"/>
<rect x="550.89" y="192.06" width="5.78" height="59.55" fill="#cef8fa"/>
<rect x="574.01" y="218.67" width="5.78" height="40.23" fill="#cef8fa"/>
<rect x="585.57" y="223.07" width="5.78" height="38.28" fill="#cef8fa"/>
<rect x="591.35" y="192.85" width="5.78" height="50.93" fill="#cef8fa"/>
<rect x="597.12" y="202.27" width="5.78" height="51.84" fill="#cef8fa"/>
<rect x="602.90" y="217.90" width="5.78" height="32.81" fill="#cef8fa"/>
<rect x="608.68" y="221.92" width="5.78" height="31.17" fill="#cef8fa"/>
<rect x="614.46" y="215.22" width="5.78" height="29.21" fill="#cef8fa"/>
<rect x="620.24" y="226.50" width="5.78" height="20.86" fill="#cef8fa"/>
<rect x="626.02" y="222.09" width="5.78" height="24.22" fill="#cef8fa"/>
<rect x="631.80" y="223.09" width="5.78" height="39.32" fill="#cef8fa"/>
<rect x="637.58" y="220.42" width="5.78" height="26.93" fill="#cef8fa"/>
<rect x="683.81" y="219.80" width="5.78" height="38.79" fill="#cef8fa"/>
<rect x="689.59" y="213.12" width="5.78" height="43.43" fill="#cef8fa"/>
<rect x="701.15" y="223.46" width="5.78" height="34.53" fill="#cef8fa"/>
<rect x="706.93" y="208.12" width="5.78" height="43.94" fill="#cef8fa"/>
<rect x="712.71" y="224.16" width="5.78" height="31.27" fill="#cef8fa"/>
<rect x="718.49" y="224.64" width="5.78" height="27.92" fill="#cef8fa"/>
<rect x="724.27" y="203.62" width="5.78" height="46.61" fill="#cef8fa"/>
<rect x="730.05" y="207.47" width="5.78" height="49.27" fill="#cef8fa"/>
<rect x="735.83" y="208.29" width="5.78" height="39.85" fill="#cef8fa"/>
<rect x="753.16" y="211.04" width="5.78" height="45.75" fill="#cef8fa"/>
<rect x="82.78" y="252.05" width="5.78" height="2.00" fill="#d2ecd2"/>
<rect x="94.34" y="252.54" width="5.78" height="2.00" fill="#d2ecd2"/>
<rect x="105.90" y="252.10" width="5.78" height="2.00" fill="#d2ecd2"/>
<rect x="117.45" y="251.61" width="5.78" height="3.47" fill="#d2ecd2"/>
<rect x="152.13" y="250.70" width="5.78" height="2.24" fill="#d2ecd2"/>
<rect x="157.91" y="250.67" width="5.78" height="2.70" fill="#d2ecd2"/>
<rect x="163.69" y="250.45" width="5.78" height="2.25" fill="#d2ecd2"/>
<rect x="169.47" y="252.32" width="5.78" height="2.00" fill="#d2ecd2"/>
<rect x="181.03" y="253.59" width="5.78" height="2.58" fill="#d2ecd2"/>
<rect x="186.80" y="253.87" width="5.78" height="2.02" fill="#d2ecd2"/>
<rect x="198.36" y="254.08" width="5.78" height="2.00" fill="#d2ecd2"/>
<rect x="204.14" y="253.93" width="5.78" height="2.00" fill="#d2ecd2"/>
<rect x="209.92" y="253.32" width="5.78" height="4.17" fill="#d2ecd2"/>
<rect x="215.70" y="254.06" width="5.78" height="2.00" fill="#d2ecd2"/>
<rect x="227.26" y="256.01" width="5.78" height="2.00" fill="#d2ecd2"/>
<rect x="238.82" y="254.89" width="5.78" height="2.00" fill="#d2ecd2"/>
<rect x="250.38" y="256.55" width="5.78" height="2.00" fill="#d2ecd2"/>
<rect x="256.15" y="256.33" width="5.78" height="2.00" fill="#d2ecd2"/>
<rect x="261.93" y="253.16" width="5.78" height="3.13" fill="#d2ecd2"/>
<rect x="296.61" y="254.16" width="5.78" height="2.66" fill="#d2ecd2"/>
<rect x="342.84" y="254.26" width="5.78" height="2.00" fill="#d2ecd2"/>
<rect x="348.62" y="254.72" width="5.78" height="2.00" fill="#d2ecd2"/>
<rect x="354.40" y="254.60" width="5.78" height="2.00" fill="#d2ecd2"/>
<rect x="360.18" y="253.77" width="5.78" height="2.70" fill="#d2ecd2"/>
<rect x="377.52" y="255.12" width="5.78" height="2.00" fill="#d2ecd2"/>
<rect x="417.97" y="253.69" width="5.78" height="3.52" fill="#d2ecd2"/>
<rect x="423.75" y="253.94" width="5.78" height="2.00" fill="#d2ecd2"/>
<rect x="429.53" y="253.54" width="5.78" height="2.00" fill="#d2ecd2"/>
<rect x="441.09" y="254.17" width="5.78" height="2.00" fill="#d2ecd2"/>
<rect x="464.20" y="255.28" width="5.78" height="2.00" fill="#d2ecd2"/>
<rect x="469.98" y="254.65" width="5.78" height="2.00" fill="#d2ecd2"/>
<rect x="475.76" y="253.71" width="5.78" height="2.75" fill="#d2ecd2"/>
<rect x="493.10" y="254.41" width="5.78" height="2.00" fill="#d2ecd2"/>
<rect x="504.66" y="254.09" width="5.78" height="2.82" fill="#d2ecd2"/>
<rect x="516.22" y="253.66" width="5.78" height="2.00" fill="#d2ecd2"/>
<rect x="522.00" y="254.00" width="5.78" height="2.00" fill="#d2ecd2"/>
<rect x="533.55" y="254.69" width="5.78" height="2.00" fill="#d2ecd2"/>
<rect x="539.33" y="254.50" width="5.78" height="2.21" fill="#d2ecd2"/>
<rect x="545.11" y="255.20" width="5.78" height="2.00" fill="#d2ecd2"/>
<rect x="550.89" y="253.62" width="5.78" height="2.09" fill="#d2ecd2"/>
<rect x="574.01" y="255.15" width="5.78" height="2.00" fill="#d2ecd2"/>
<rect x="579.79" y="256.19" width="5.78" height="2.00" fill="#d2ecd2"/>
<rect x="585.57" y="255.20" width="5.78" height="2.00" fill="#d2ecd2"/>
<rect x="637.58" y="254.49" width="5.78" height="2.00" fill="#d2ecd2"/>
<rect x="643.36" y="254.33" width="5.78" height="3.22" fill="#d2ecd2"/>
<rect x="649.14" y="255.24" width="5.78" height="2.00" fill="#d2ecd2"/>
<rect x="654.92" y="253.36" width="5.78" height="3.27" fill="#d2ecd2"/>
<rect x="660.70" y="253.87" width="5.78" height="2.35" fill="#d2ecd2"/>
<rect x="666.47" y="253.55" width="5.78" height="2.00" fill="#d2ecd2"/>
<rect x="678.03" y="254.03" width="5.78" height="2.00" fill="#d2ecd2"/>
<rect x="695.37" y="253.61" width="5.78" height="2.37" fill="#d2ecd2"/>
<rect x="701.15" y="253.45" width="5.78" height="2.00" fill="#d2ecd2"/>
<rect x="712.71" y="252.45" width="5.78" height="2.95" fill="#d2ecd2"/>
<rect x="724.27" y="253.80" width="5.78" height="2.01" fill="#d2ecd2"/>
<rect x="730.05" y="253.35" width="5.78" height="2.00" fill="#d2ecd2"/>
<rect x="735.83" y="254.73" width="5.78" height="2.00" fill="#d2ecd2"/>
<rect x="105.90" y="222.68" width="5.78" height="2.00" fill="#f9d2e4"/>
<rect x="111.68" y="222.51" width="5.78" height="4.68" fill="#f9d2e4"/>
<rect x="117.45" y="223.81" width="5.78" height="2.35" fill="#f9d2e4"/>
<rect x="123.23" y="222.64" width="5.78" height="3.23" fill="#f9d2e4"/>
<rect x="134.79" y="222.90" width="5.78" height="2.00" fill="#f9d2e4"/>
<rect x="140.57" y="223.86" width="5.78" height="2.50" fill="#f9d2e4"/>
<rect x="163.69" y="224.50" width="5.78" height="2.00" fill="#f9d2e4"/>
<rect x="175.25" y="222.62" width="5.78" height="2.00" fill="#f9d2e4"/>
<rect x="204.14" y="222.98" width="5.78" height="2.18" fill="#f9d2e4"/>
<rect x="209.92" y="223.36" width="5.78" height="2.42" fill="#f9d2e4"/>
<rect x="238.82" y="222.48" width="5.78" height="2.00" fill="#f9d2e4"/>
<rect x="256.15" y="222.90" width="5.78" height="2.00" fill="#f9d2e4"/>
<rect x="267.71" y="223.89" width="5.78" height="2.00" fill="#f9d2e4"/>
<rect x="296.61" y="223.09" width="5.78" height="2.00" fill="#f9d2e4"/>
<rect x="302.39" y="223.27" width="5.78" height="2.00" fill="#f9d2e4"/>
<rect x="308.17" y="225.75" width="5.78" height="2.00" fill="#f9d2e4"/>
<rect x="319.72" y="224.02" width="5.78" height="2.00" fill="#f9d2e4"/>
<rect x="325.50" y="222.04" width="5.78" height="2.42" fill="#f9d2e4"/>
<rect x="348.62" y="224.68" width="5.78" height="2.00" fill="#f9d2e4"/>
<rect x="389.07" y="225.11" width="5.78" height="2.00" fill="#f9d2e4"/>
<rect x="400.63" y="224.45" width="5.78" height="2.00" fill="#f9d2e4"/>
<rect x="406.41" y="222.06" width="5.78" height="2.64" fill="#f9d2e4"/>
<rect x="412.19" y="224.38" width="5.78" height="2.00" fill="#f9d2e4"/>
<rect x="423.75" y="223.64" width="5.78" height="2.31" fill="#f9d2e4"/>
<rect x="429.53" y="224.03" width="5.78" height="2.00" fill="#f9d2e4"/>
<rect x="441.09" y="224.89" width="5.78" height="2.00" fill="#f9d2e4"/>
<rect x="458.42" y="222.48" width="5.78" height="2.05" fill="#f9d2e4"/>
<rect x="469.98" y="222.13" width="5.78" height="2.00" fill="#f9d2e4"/>
<rect x="475.76" y="223.83" width="5.78" height="2.77" fill="#f9d2e4"/>
<rect x="481.54" y="224.08" width="5.78" height="2.70" fill="#f9d2e4"/>
<rect x="487.32" y="224.60" width="5.78" height="2.00" fill="#f9d2e4"/>
<rect x="493.10" y="226.09" width="5.78" height="2.86" fill="#f9d2e4"/>
<rect x="498.88" y="225.13" width="5.78" height="2.00" fill="#f9d2e4"/>
<rect x="504.66" y="225.38" width="5.78" height="2.25" fill="#f9d2e4"/>
<rect x="516.22" y="224.48" width="5.78" height="2.00" fill="#f9d2e4"/>
<rect x="522.00" y="225.03" width="5.78" height="2.00" fill="#f9d2e4"/>
<rect x="527.77" y="225.23" width="5.78" height="2.00" fill="#f9d2e4"/>
<rect x="533.55" y="224.04" width="5.78" height="2.00" fill="#f9d2e4"/>
<rect x="545.11" y="224.47" width="5.78" height="2.36" fill="#f9d2e4"/>
<rect x="550.89" y="223.62" width="5.78" height="2.00" fill="#f9d2e4"/>
<rect x="574.01" y="224.53" width="5.78" height="2.00" fill="#f9d2e4"/>
<rect x="591.35" y="223.75" width="5.78" height="2.00" fill="#f9d2e4"/>
<rect x="597.12" y="223.91" width="5.78" height="2.36" fill="#f9d2e4"/>
<rect x="608.68" y="223.69" width="5.78" height="3.05" fill="#f9d2e4"/>
<rect x="626.02" y="223.54" width="5.78" height="2.00" fill="#f9d2e4"/>
<rect x="637.58" y="222.05" width="5.78" height="2.04" fill="#f9d2e4"/>
<rect x="654.92" y="222.11" width="5.78" height="2.42" fill="#f9d2e4"/>
<rect x="660.70" y="220.23" width="5.78" height="2.47" fill="#f9d2e4"/>
<rect x="678.03" y="224.03" width="5.78" height="2.00" fill="#f9d2e4"/>
<rect x="683.81" y="224.01" width="5.78" height="2.00" fill="#f9d2e4"/>
<rect x="695.37" y="224.23" width="5.78" height="2.00" fill="#f9d2e4"/>
<rect x="718.49" y="224.91" width="5.78" height="2.00" fill="#f9d2e4"/>
<rect x="747.38" y="221.81" width="5.78" height="2.72" fill="#f9d2e4"/>
<rect x="758.94" y="222.85" width="5.78" height="2.00" fill="#f9d2e4"/>
<rect x="88.56" y="201.60" width="5.78" height="2.00" fill="#cef8fa"/>
<rect x="105.90" y="201.21" width="5.78" height="2.03" fill="#cef8fa"/>
<rect x="123.23" y="202.71" width="5.78" height="2.00" fill="#cef8fa"/>
<rect x="129.01" y="203.95" width="5.78" height="2.00" fill="#cef8fa"/>
<rect x="134.79" y="203.19" width="5.78" height="2.13" fill="#cef8fa"/>
<rect x="146.35" y="202.99" width="5.78" height="2.60" fill="#cef8fa"/>
<rect x="152.13" y="202.86" width="5.78" height="2.04" fill="#cef8fa"/>
<rect x="163.69" y="203.85" width="5.78" height="2.00" fill="#cef8fa"/>
<rect x="175.25" y="201.43" width="5.78" height="2.00" fill="#cef8fa"/>
<rect x="181.03" y="202.55" width="5.78" height="2.00" fill="#cef8fa"/>
<rect x="192.58" y="202.67" width="5.78" height="2.00" fill="#cef8fa"/>
<rect x="198.36" y="200.71" width="5.78" height="2.00" fill="#cef8fa"/>
<rect x="204.14" y="200.81" width="5.78" height="2.00" fill="#cef8fa"/>
<rect x="209.92" y="201.09" width="5.78" height="2.00" fill="#cef8fa"/>
<rect x="215.70" y="201.06" width="5.78" height="2.00" fill="#cef8fa"/>
<rect x="221.48" y="202.09" width="5.78" height="2.00" fill="#cef8fa"/>
<rect x="244.60" y="202.04" width="5.78" height="2.00" fill="#cef8fa"/>
<rect x="261.93" y="203.07" width="5.78" height="2.00" fill="#cef8fa"/>
<rect x="267.71" y="201.60" width="5.78" height="2.11" fill="#cef8fa"/>
<rect x="273.49" y="203.19" width="5.78" height="2.00" fill="#cef8fa"/>
<rect x="279.27" y="203.95" width="5.78" height="2.00" fill="#cef8fa"/>
<rect x="285.05" y="203.38" width="5.78" height="2.00" fill="#cef8fa"/>
<rect x="290.83" y="202.82" width="5.78" height="2.00" fill="#cef8fa"/>
<rect x="296.61" y="201.62" width="5.78" height="3.93" fill="#cef8fa"/>
<rect x="302.39" y="202.43" width="5.78" height="2.00" fill="#cef8fa"/>
<rect x="313.95" y="202.77" width="5.78" height="2.00" fill="#cef8fa"/>
<rect x="319.72" y="202.19" width="5.78" height="2.00" fill="#cef8fa"/>
<rect x="325.50" y="201.04" width="5.78" height="2.00" fill="#cef8fa"/>
<rect x="342.84" y="201.57" width="5.78" height="2.00" fill="#cef8fa"/>
<rect x="348.62" y="201.57" width="5.78" height="2.00" fill="#cef8fa"/>
<rect x="354.40" y="200.58" width="5.78" height="2.00" fill="#cef8fa"/>
<rect x="365.96" y="202.19" width="5.78" height="2.00" fill="#cef8fa"/>
<rect x="371.74" y="202.41" width="5.78" height="2.00" fill="#cef8fa"/>
<rect x="377.52" y="201.67" width="5.78" height="2.00" fill="#cef8fa"/>
<rect x="383.30" y="202.65" width="5.78" height="2.00" fill="#cef8fa"/>
<rect x="389.07" y="201.50" width="5.78" height="2.01" fill="#cef8fa"/>
<rect x="394.85" y="200.13" width="5.78" height="2.41" fill="#cef8fa"/>
<rect x="441.09" y="201.85" width="5.78" height="2.00" fill="#cef8fa"/>
<rect x="458.42" y="202.47" width="5.78" height="2.00" fill="#cef8fa"/>
<rect x="487.32" y="201.75" width="5.78" height="2.00" fill="#cef8fa"/>
<rect x="504.66" y="202.24" width="5.78" height="2.00" fill="#cef8fa"/>
<rect x="516.22" y="202.24" width="5.78" height="2.55" fill="#cef8fa"/>
<rect x="527.77" y="201.41" width="5.78" height="2.00" fill="#cef8fa"/>
<rect x="533.55" y="200.96" width="5.78" height="2.39" fill="#cef8fa"/>
<rect x="568.23" y="200.45" width="5.78" height="2.00" fill="#cef8fa"/>
<rect x="591.35" y="200.79" width="5.78" height="2.00" fill="#cef8fa"/>
<rect x="597.12" y="201.48" width="5.78" height="2.00" fill="#cef8fa"/>
<rect x="602.90" y="201.46" width="5.78" height="2.00" fill="#cef8fa"/>
<rect x="608.68" y="200.14" width="5.78" height="3.09" fill="#cef8fa"/>
<rect x="637.58" y="200.40" width="5.78" height="2.28" fill="#cef8fa"/>
<rect x="643.36" y="201.98" width="5.78" height="2.00" fill="#cef8fa"/>
<rect x="649.14" y="201.07" width="5.78" height="2.32" fill="#cef8fa"/>
<rect x="654.92" y="202.39" width="5.78" height="2.14" fill="#cef8fa"/>
<rect x="678.03" y="201.07" width="5.78" height="2.00" fill="#cef8fa"/>
<rect x="689.59" y="200.11" width="5.78" height="3.89" fill="#cef8fa"/>
<rect x="695.37" y="201.18" width="5.78" height="2.00" fill="#cef8fa"/>
<rect x="701.15" y="201.42" width="5.78" height="2.00" fill="#cef8fa"/>
<rect x="706.93" y="201.74" width="5.78" height="2.00" fill="#cef8fa"/>
<rect x="724.27" y="202.36" width="5.78" height="2.00" fill="#cef8fa"/>
<rect x="735.83" y="201.82" width="5.78" height="2.00" fill="#cef8fa"/>
<rect x="741.60" y="202.23" width="5.78" height="2.00" fill="#cef8fa"/>
<rect x="747.38" y="202.76" width="5.78" height="2.00" fill="#cef8fa"/>
<rect x="753.16" y="202.46" width="5.78" height="2.00" fill="#cef8fa"/>
<rect x="77.00" y="92.24" width="5.78" height="4.75" fill="#eef4cc"/>
<rect x="88.56" y="96.80" width="5.78" height="2.00" fill="#eef4cc"/>
<rect x="94.34" y="96.99" width="5.78" height="2.00" fill="#eef4cc"/>
<rect x="105.90" y="95.85" width="5.78" height="2.36" fill="#eef4cc"/>
<rect x="134.79" y="96.21" width="5.78" height="2.00" fill="#eef4cc"/>
<rect x="169.47" y="95.48" width="5.78" height="2.00" fill="#eef4cc"/>
<rect x="175.25" y="95.68" width="5.78" height="2.00" fill="#eef4cc"/>
<rect x="181.03" y="96.03" width="5.78" height="2.00" fill="#eef4cc"/>
<rect x="186.80" y="94.60" width="5.78" height="3.21" fill="#eef4cc"/>
<rect x="215.70" y="96.16" width="5.78" height="2.00" fill="#eef4cc"/>
<rect x="221.48" y="95.91" width="5.78" height="2.00" fill="#eef4cc"/>
<rect x="233.04" y="95.73" width="5.78" height="2.16" fill="#eef4cc"/>
<rect x="238.82" y="92.03" width="5.78" height="4.06" fill="#eef4cc"/>
<rect x="244.60" y="95.59" width="5.78" height="2.00" fill="#eef4cc"/>
<rect x="261.93" y="97.88" width="5.78" height="2.00" fill="#eef4cc"/>
<rect x="267.71" y="98.54" width="5.78" height="2.00" fill="#eef4cc"/>
<rect x="273.49" y="98.70" width="5.78" height="2.00" fill="#eef4cc"/>
<rect x="279.27" y="98.57" width="5.78" height="2.00" fill="#eef4cc"/>
<rect x="302.39" y="97.98" width="5.78" height="2.00" fill="#eef4cc"/>
<rect x="331.28" y="97.71" width="5.78" height="3.50" fill="#eef4cc"/>
<rect x="337.06" y="98.20" width="5.78" height="2.00" fill="#eef4cc"/>
<rect x="342.84" y="98.13" width="5.78" height="2.00" fill="#eef4cc"/>
<rect x="348.62" y="97.08" width="5.78" height="2.00" fill="#eef4cc"/>
<rect x="354.40" y="97.75" width="5.78" height="2.00" fill="#eef4cc"/>
<rect x="365.96" y="95.92" width="5.78" height="2.76" fill="#eef4cc"/>
<rect x="371.74" y="97.67" width="5.78" height="2.00" fill="#eef4cc"/>
<rect x="377.52" y="97.18" width="5.78" height="2.00" fill="#eef4cc"/>
<rect x="389.07" y="97.80" width="5.78" height="2.00" fill="#eef4cc"/>
<rect x="400.63" y="97.47" width="5.78" height="2.00" fill="#eef4cc"/>
<rect x="412.19" y="97.89" width="5.78" height="2.00" fill="#eef4cc"/>
<rect x="417.97" y="95.41" width="5.78" height="3.47" fill="#eef4cc"/>
<rect x="441.09" y="95.46" width="5.78" height="2.62" fill="#eef4cc"/>
<rect x="452.65" y="95.84" width="5.78" height="4.52" fill="#eef4cc"/>
<rect x="458.42" y="97.34" width="5.78" height="2.30" fill="#eef4cc"/>
<rect x="469.98" y="97.74" width="5.78" height="2.29" fill="#eef4cc"/>
<rect x="487.32" y="96.58" width="5.78" height="2.00" fill="#eef4cc"/>
<rect x="498.88" y="97.33" width="5.78" height="2.22" fill="#eef4cc"/>
<rect x="504.66" y="97.95" width="5.78" height="2.00" fill="#eef4cc"/>
<rect x="510.44" y="96.43" width="5.78" height="2.10" fill="#eef4cc"/>
<rect x="527.77" y="96.86" width="5.78" height="2.00" fill="#eef4cc"/>
<rect x="533.55" y="96.64" width="5.78" height="2.00" fill="#eef4cc"/>
<rect x="556.67" y="95.03" width="5.78" height="4.40" fill="#eef4cc"/>
<rect x="574.01" y="96.66" width="5.78" height="4.44" fill="#eef4cc"/>
<rect x="579.79" y="96.40" width="5.78" height="2.39" fill="#eef4cc"/>
<rect x="585.57" y="96.70" width="5.78" height="2.00" fill="#eef4cc"/>
<rect x="591.35" y="97.35" width="5.78" height="2.00" fill="#eef4cc"/>
<rect x="597.12" y="97.91" width="5.78" height="3.48" fill="#eef4cc"/>
<rect x="602.90" y="97.71" width="5.78" height="2.00" fill="#eef4cc"/>
<rect x="608.68" y="98.19" width="5.78" height="2.00" fill="#eef4cc"/>
<rect x="614.46" y="97.97" width="5.78" height="2.19" fill="#eef4cc"/>
<rect x="654.92" y="95.63" width="5.78" height="2.80" fill="#eef4cc"/>
<rect x="660.70" y="95.86" width="5.78" height="2.00" fill="#eef4cc"/>
<rect x="666.47" y="95.74" width="5.78" height="2.00" fill="#eef4cc"/>
<rect x="678.03" y="95.37" width="5.78" height="2.00" fill="#eef4cc"/>
<rect x="701.15" y="96.08" width="5.78" height="2.00" fill="#eef4cc"/>
<rect x="747.38" y="94.56" width="5.78" height="2.00" fill="#eef4cc"/>
<rect x="753.16" y="95.60" width="5.78" height="2.39" fill="#eef4cc"/>
<rect x="758.94" y="95.58" width="5.78" height="2.93" fill="#eef4cc"/>
<rect x="77.00" y="33.58" width="5.78" height="2.00" fill="#d2e2fa"/>
<rect x="82.78" y="34.98" width="5.78" height="2.00" fill="#d2e2fa"/>
<rect x="88.56" y="33.85" width="5.78" height="3.05" fill="#d2e2fa"/>
<rect x="94.34" y="34.12" width="5.78" height="2.00" fill="#d2e2fa"/>
<rect x="100.12" y="34.30" width="5.78" height="2.00" fill="#d2e2fa"/>
<rect x="111.68" y="32.49" width="5.78" height="2.06" fill="#d2e2fa"/>
<rect x="123.23" y="34.16" width="5.78" height="2.00" fill="#d2e2fa"/>
<rect x="129.01" y="32.93" width="5.78" height="3.07" fill="#d2e2fa"/>
<rect x="146.35" y="32.66" width="5.78" height="3.00" fill="#d2e2fa"/>
<rect x="163.69" y="34.61" width="5.78" height="2.44" fill="#d2e2fa"/>
<rect x="175.25" y="34.25" width="5.78" height="2.33" fill="#d2e2fa"/>
<rect x="181.03" y="35.73" width="5.78" height="6.25" fill="#d2e2fa"/>
<rect x="198.36" y="35.67" width="5.78" height="2.30" fill="#d2e2fa"/>
<rect x="227.26" y="38.25" width="5.78" height="2.00" fill="#d2e2fa"/>
<rect x="244.60" y="38.02" width="5.78" height="2.00" fill="#d2e2fa"/>
<rect x="285.05" y="37.65" width="5.78" height="2.00" fill="#d2e2fa"/>
<rect x="290.83" y="35.91" width="5.78" height="2.92" fill="#d2e2fa"/>
<rect x="308.17" y="38.09" width="5.78" height="2.00" fill="#d2e2fa"/>
<rect x="319.72" y="37.60" width="5.78" height="2.02" fill="#d2e2fa"/>
<rect x="331.28" y="38.42" width="5.78" height="2.76" fill="#d2e2fa"/>
<rect x="342.84" y="37.45" width="5.78" height="2.00" fill="#d2e2fa"/>
<rect x="354.40" y="39.41" width="5.78" height="2.00" fill="#d2e2fa"/>
<rect x="377.52" y="37.83" width="5.78" height="2.50" fill="#d2e2fa"/>
<rect x="389.07" y="38.71" width="5.78" height="2.08" fill="#d2e2fa"/>
<rect x="394.85" y="36.59" width="5.78" height="4.40" fill="#d2e2fa"/>
<rect x="406.41" y="36.56" width="5.78" height="2.50" fill="#d2e2fa"/>
<rect x="429.53" y="36.85" width="5.78" height="2.00" fill="#d2e2fa"/>
<rect x="435.31" y="37.19" width="5.78" height="2.00" fill="#d2e2fa"/>
<rect x="441.09" y="36.27" width="5.78" height="2.00" fill="#d2e2fa"/>
<rect x="446.87" y="35.94" width="5.78" height="2.00" fill="#d2e2fa"/>
<rect x="458.42" y="34.79" width="5.78" height="3.29" fill="#d2e2fa"/>
<rect x="464.20" y="36.09" width="5.78" height="2.00" fill="#d2e2fa"/>
<rect x="469.98" y="34.04" width="5.78" height="3.16" fill="#d2e2fa"/>
<rect x="481.54" y="35.23" width="5.78" height="2.00" fill="#d2e2fa"/>
<rect x="487.32" y="35.59" width="5.78" height="2.00" fill="#d2e2fa"/>
<rect x="498.88" y="35.17" width="5.78" height="2.22" fill="#d2e2fa"/>
<rect x="510.44" y="35.60" width="5.78" height="2.54" fill="#d2e2fa"/>
<rect x="522.00" y="37.63" width="5.78" height="2.00" fill="#d2e2fa"/>
<rect x="539.33" y="33.77" width="5.78" height="3.79" fill="#d2e2fa"/>
<rect x="562.45" y="36.13" width="5.78" height="4.47" fill="#d2e2fa"/>
<rect x="568.23" y="37.51" width="5.78" height="2.00" fill="#d2e2fa"/>
<rect x="574.01" y="36.05" width="5.78" height="2.35" fill="#d2e2fa"/>
<rect x="579.79" y="37.07" width="5.78" height="3.49" fill="#d2e2fa"/>
<rect x="585.57" y="34.16" width="5.78" height="3.95" fill="#d2e2fa"/>
<rect x="597.12" y="36.69" width="5.78" height="2.00" fill="#d2e2fa"/>
<rect x="602.90" y="35.81" width="5.78" height="2.38" fill="#d2e2fa"/>
<rect x="614.46" y="35.62" width="5.78" height="2.00" fill="#d2e2fa"/>
<rect x="626.02" y="36.64" width="5.78" height="2.72" fill="#d2e2fa"/>
<rect x="666.47" y="37.61" width="5.78" height="2.00" fill="#d2e2fa"/>
<rect x="689.59" y="35.53" width="5.78" height="2.00" fill="#d2e2fa"/>
<rect x="706.93" y="34.36" width="5.78" height="2.91" fill="#d2e2fa"/>
<rect x="718.49" y="33.01" width="5.78" height="2.00" fill="#d2e2fa"/>
<rect x="730.05" y="34.43" width="5.78" height="2.00" fill="#d2e2fa"/>
<rect x="735.83" y="34.96" width="5.78" height="2.00" fill="#d2e2fa"/>
<rect x="741.60" y="34.78" width="5.78" height="2.00" fill="#d2e2fa"/>
<path d="M77.50 237.00H83.28V237.00H89.06V234.00H94.84V234.00H100.62V235.00H106.40V235.00H112.18V235.00H117.95V236.00H123.73V236.00H129.51V235.00H135.29V235.00H141.07V237.00H146.85V237.00H152.63V238.00H158.41V238.00H164.19V235.00H169.97V235.00H175.75V235.00H181.53V236.00H187.30V235.00H193.08V235.00H198.86V235.00H204.64V235.00H210.42V235.00H216.20V235.00H221.98V235.00H227.76V235.00H233.54V236.00H239.32V236.00H245.10V236.00H250.88V236.00H256.65V236.00H262.43V236.00H268.21V236.00H273.99V236.00H279.77V235.00H285.55V234.00H291.33V234.00H297.11V234.00H302.89V235.00H308.67V235.00H314.45V235.00H320.22V235.00H326.00V236.00H331.78V236.00H337.56V236.00H343.34V236.00H349.12V236.00H354.90V235.00H360.68V235.00H366.46V235.00H372.24V225.00H378.02V217.00H383.80V236.00H389.57V236.00H395.35V236.00H401.13V236.00H406.91V236.00H412.69V236.00H418.47V236.00H424.25V236.00H430.03V236.00H435.81V236.00H441.59V236.00H447.37V236.00H453.15V235.00H458.92V235.00H464.70V234.00H470.48V234.00H476.26V234.00H482.04V235.00H487.82V237.00H493.60V237.00H499.38V237.00H505.16V237.00H510.94V238.00H516.72V238.00H522.50V237.00H528.27V237.00H534.05V237.00H539.83V237.00H545.61V237.00H551.39V237.00H557.17V237.00H562.95V237.00H568.73V236.00H574.51V237.00H580.29V236.00H586.07V236.00H591.85V236.00H597.62V237.00H603.40V237.00H609.18V237.00H614.96V236.00H620.74V236.00H626.52V236.00H632.30V238.00H638.08V238.00H643.86V237.00H649.64V237.00H655.42V237.00H661.20V236.00H666.97V236.00H672.75V236.00H678.53V236.00H684.31V236.00H690.09V236.00H695.87V236.00H701.65V235.00H707.43V235.00H713.21V235.00H718.99V235.00H724.77V235.00H730.55V235.00H736.33V235.00H742.10V235.00H747.88V235.00H753.66V235.00H759.44" fill="none" stroke="#3ce8f4" stroke-width="1.6" stroke-linejoin="miter"/>
<path d="M77.50 253.00H83.28V253.00H89.06V253.00H94.84V253.00H100.62V253.00H106.40V253.00H112.18V254.00H117.95V254.00H123.73V253.00H129.51V253.00H135.29V253.00H141.07V253.00H146.85V253.00H152.63V252.00H158.41V252.00H164.19V252.00H169.97V252.00H175.75V252.00H181.53V254.00H187.30V254.00H193.08V254.00H198.86V254.00H204.64V254.00H210.42V255.00H216.20V255.00H221.98V256.00H227.76V256.00H233.54V256.00H239.32V256.00H245.10V256.00H250.88V257.00H256.65V257.00H262.43V255.00H268.21V255.00H273.99V254.00H279.77V254.00H285.55V254.00H291.33V254.00H297.11V256.00H302.89V256.00H308.67V256.00H314.45V256.00H320.22V256.00H326.00V256.00H331.78V256.00H337.56V255.00H343.34V255.00H349.12V255.00H354.90V256.00H360.68V256.00H366.46V256.00H372.24V256.00H378.02V256.00H383.80V255.00H389.57V255.00H395.35V255.00H401.13V255.00H406.91V255.00H412.69V255.00H418.47V255.00H424.25V254.00H430.03V254.00H435.81V254.00H441.59V254.00H447.37V254.00H453.15V256.00H458.92V256.00H464.70V256.00H470.48V256.00H476.26V256.00H482.04V256.00H487.82V256.00H493.60V255.00H499.38V255.00H505.16V255.00H510.94V255.00H516.72V255.00H522.50V254.00H528.27V254.00H534.05V255.00H539.83V256.00H545.61V256.00H551.39V255.00H557.17V256.00H562.95V255.00H568.73V255.00H574.51V255.00H580.29V256.00H586.07V256.00H591.85V255.00H597.62V255.00H603.40V255.00H609.18V255.00H614.96V255.00H620.74V255.00H626.52V255.00H632.30V255.00H638.08V255.00H643.86V256.00H649.64V256.00H655.42V255.00H661.20V254.00H666.97V254.00H672.75V254.00H678.53V255.00H684.31V255.00H690.09V255.00H695.87V254.00H701.65V254.00H707.43V254.00H713.21V254.00H718.99V254.00H724.77V255.00H730.55V255.00H736.33V255.00H742.10V255.00H747.88V255.00H753.66V255.00H759.44V254.00H765.22" fill="none" stroke="#36a836" stroke-width="1.6" stroke-linejoin="miter"/>
<path d="M77.50 227.00H83.28V228.00H89.06V228.00H94.84V227.00H100.62V227.00H106.40V224.00H112.18V224.00H117.95V224.00H123.73V224.00H129.51V225.00H135.29V225.00H141.07V225.00H146.85V224.00H152.63V224.00H158.41V225.00H164.19V225.00H169.97V223.00H175.75V224.00H181.53V224.00H187.30V224.00H193.08V225.00H198.86V225.00H204.64V225.00H210.42V225.00H216.20V225.00H221.98V225.00H227.76V224.00H233.54V224.00H239.32V224.00H245.10V223.00H250.88V223.00H256.65V223.00H262.43V224.00H268.21V224.00H273.99V224.00H279.77V224.00H285.55V223.00H291.33V224.00H297.11V224.00H302.89V224.00H308.67V226.00H314.45V226.00H320.22V225.00H326.00V223.00H331.78V225.00H337.56V225.00H343.34V225.00H349.12V226.00H354.90V225.00H360.68V225.00H366.46V224.00H372.24V225.00H378.02V225.00H383.80V227.00H389.57V225.00H395.35V225.00H401.13V226.00H406.91V222.00H412.69V225.00H418.47V224.00H424.25V224.00H430.03V224.00H435.81V225.00H441.59V225.00H447.37V225.00H453.15V225.00H458.92V224.00H464.70V224.00H470.48V224.00H476.26V225.00H482.04V225.00H487.82V225.00H493.60V226.00H499.38V226.00H505.16V226.00H510.94V226.00H516.72V226.00H522.50V226.00H528.27V226.00H534.05V225.00H539.83V225.00H545.61V225.00H551.39V224.00H557.17V224.00H562.95V224.00H568.73V225.00H574.51V225.00H580.29V224.00H586.07V224.00H591.85V224.00H597.62V224.00H603.40V224.00H609.18V224.00H614.96V224.00H620.74V224.00H626.52V224.00H632.30V223.00H638.08V223.00H643.86V223.00H649.64V224.00H655.42V222.00H661.20V222.00H666.97V223.00H672.75V223.00H678.53V224.00H684.31V224.00H690.09V224.00H695.87V224.00H701.65V224.00H707.43V224.00H713.21V224.00H718.99V225.00H724.77V225.00H730.55V225.00H736.33V225.00H742.10V224.00H747.88V223.00H753.66V223.00H759.44V223.00H765.22" fill="none" stroke="#f03a8c" stroke-width="1.6" stroke-linejoin="miter"/>
<path d="M77.50 203.00H83.28V203.00H89.06V202.00H94.84V202.00H100.62V203.00H106.40V203.00H112.18V202.00H117.95V202.00H123.73V203.00H129.51V204.00H135.29V204.00H141.07V204.00H146.85V204.00H152.63V204.00H158.41V204.00H164.19V204.00H169.97V204.00H175.75V203.00H181.53V203.00H187.30V203.00H193.08V203.00H198.86V201.00H204.64V201.00H210.42V201.00H216.20V201.00H221.98V202.00H227.76V203.00H233.54V203.00H239.32V203.00H245.10V203.00H250.88V201.00H256.65V204.00H262.43V203.00H268.21V203.00H273.99V203.00H279.77V204.00H285.55V204.00H291.33V203.00H297.11V203.00H302.89V203.00H308.67V203.00H314.45V203.00H320.22V203.00H326.00V202.00H331.78V202.00H337.56V202.00H343.34V202.00H349.12V202.00H354.90V202.00H360.68V202.00H366.46V203.00H372.24V203.00H378.02V202.00H383.80V203.00H389.57V202.00H395.35V202.00H401.13V202.00H406.91V202.00H412.69V203.00H418.47V203.00H424.25V203.00H430.03V203.00H435.81V203.00H441.59V203.00H447.37V203.00H453.15V203.00H458.92V203.00H464.70V203.00H470.48V203.00H476.26V203.00H482.04V202.00H487.82V202.00H493.60V202.00H499.38V203.00H505.16V203.00H510.94V203.00H516.72V203.00H522.50V203.00H528.27V202.00H534.05V202.00H539.83V202.00H545.61V201.00H551.39V201.00H557.17V201.00H562.95V201.00H568.73V201.00H574.51V201.00H580.29V201.00H586.07V201.00H591.85V201.00H597.62V202.00H603.40V202.00H609.18V202.00H614.96V202.00H620.74V201.00H626.52V202.00H632.30V202.00H638.08V202.00H643.86V203.00H649.64V203.00H655.42V204.00H661.20V202.00H666.97V202.00H672.75V202.00H678.53V201.00H684.31V201.00H690.09V201.00H695.87V202.00H701.65V202.00H707.43V202.00H713.21V203.00H718.99V203.00H724.77V203.00H730.55V203.00H736.33V203.00H742.10V203.00H747.88V203.00H753.66V203.00H759.44" fill="none" stroke="#3ce8f4" stroke-width="1.6" stroke-linejoin="miter"/>
<path d="M77.50 96.00H83.28V97.00H89.06V97.00H94.84V97.00H100.62V96.00H106.40V96.00H112.18V96.00H117.95V96.00H123.73V96.00H129.51V96.00H135.29V96.00H141.07V96.00H146.85V96.00H152.63V97.00H158.41V96.00H164.19V96.00H169.97V96.00H175.75V96.00H181.53V96.00H187.30V96.00H193.08V96.00H198.86V95.00H204.64V95.00H210.42V96.00H216.20V96.00H221.98V96.00H227.76V96.00H233.54V96.00H239.32V96.00H245.10V96.00H250.88V99.00H256.65V99.00H262.43V99.00H268.21V99.00H273.99V99.00H279.77V99.00H285.55V100.00H291.33V100.00H297.11V100.00H302.89V99.00H308.67V100.00H314.45V100.00H320.22V100.00H326.00V99.00H331.78V99.00H337.56V99.00H343.34V99.00H349.12V98.00H354.90V98.00H360.68V98.00H366.46V98.00H372.24V98.00H378.02V98.00H383.80V98.00H389.57V98.00H395.35V98.00H401.13V98.00H406.91V98.00H412.69V98.00H418.47V98.00H424.25V98.00H430.03V98.00H435.81V98.00H441.59V98.00H447.37V99.00H453.15V99.00H458.92V99.00H464.70V98.00H470.48V98.00H476.26V98.00H482.04V97.00H487.82V97.00H493.60V98.00H499.38V98.00H505.16V98.00H510.94V97.00H516.72V98.00H522.50V98.00H528.27V98.00H534.05V98.00H539.83V98.00H545.61V98.00H551.39V98.00H557.17V98.00H562.95V99.00H568.73V99.00H574.51V99.00H580.29V98.00H586.07V98.00H591.85V98.00H597.62V98.00H603.40V98.00H609.18V98.00H614.96V98.00H620.74V98.00H626.52V97.00H632.30V97.00H638.08V97.00H643.86V97.00H649.64V97.00H655.42V97.00H661.20V96.00H666.97V96.00H672.75V96.00H678.53V96.00H684.31V97.00H690.09V97.00H695.87V97.00H701.65V97.00H707.43V97.00H713.21V96.00H718.99V97.00H724.77V97.00H730.55V97.00H736.33V96.00H742.10V96.00H747.88V96.00H753.66V96.00H759.44V96.00H765.22" fill="none" stroke="#c4dc34" stroke-width="1.6" stroke-linejoin="miter"/>
<path d="M77.50 35.00H83.28V35.00H89.06V35.00H94.84V35.00H100.62V34.00H106.40V34.00H112.18V34.00H117.95V35.00H123.73V35.00H129.51V35.00H135.29V35.00H141.07V35.00H146.85V35.00H152.63V35.00H158.41V35.00H164.19V35.00H169.97V35.00H175.75V35.00H181.53V38.00H187.30V39.00H193.08V38.00H198.86V38.00H204.64V38.00H210.42V38.00H216.20V38.00H221.98V38.00H227.76V39.00H233.54V37.00H239.32V37.00H245.10V39.00H250.88V39.00H256.65V38.00H262.43V38.00H268.21V38.00H273.99V38.00H279.77V38.00H285.55V38.00H291.33V38.00H297.11V38.00H302.89V39.00H308.67V39.00H314.45V38.00H320.22V38.00H326.00V38.00H331.78V38.00H337.56V38.00H343.34V38.00H349.12V39.00H354.90V39.00H360.68V39.00H366.46V39.00H372.24V39.00H378.02V39.00H383.80V39.00H389.57V39.00H395.35V39.00H401.13V39.00H406.91V38.00H412.69V38.00H418.47V37.00H424.25V37.00H430.03V37.00H435.81V37.00H441.59V37.00H447.37V37.00H453.15V37.00H458.92V37.00H464.70V37.00H470.48V37.00H476.26V36.00H482.04V36.00H487.82V36.00H493.60V37.00H499.38V37.00H505.16V37.00H510.94V37.00H516.72V37.00H522.50V38.00H528.27V36.00H534.05V36.00H539.83V37.00H545.61V37.00H551.39V37.00H557.17V37.00H562.95V38.00H568.73V38.00H574.51V38.00H580.29V37.00H586.07V37.00H591.85V37.00H597.62V37.00H603.40V37.00H609.18V37.00H614.96V37.00H620.74V38.00H626.52V37.00H632.30V38.00H638.08V39.00H643.86V38.00H649.64V38.00H655.42V38.00H661.20V38.00H666.97V38.00H672.75V38.00H678.53V38.00H684.31V36.00H690.09V36.00H695.87V36.00H701.65V36.00H707.43V36.00H713.21V36.00H718.99V35.00H724.77V35.00H730.55V35.00H736.33V36.00H742.10V36.00H747.88V36.00H753.66V36.00H759.44V36.00H765.22" fill="none" stroke="#3482ec" stroke-width="1.6" stroke-linejoin="miter"/>
<path d="M77.1 29 V268" stroke="#757575" stroke-width="1.5"/>
<path d="M72 264.2 H777" stroke="#757575" stroke-width="1.5"/>
<path d="M73.6 30 L77.1 24.5 L80.6 30 Z" fill="#8b1a1a"/>
<path d="M773 260.2 L778.7 264.2 L773 268.2 Z" fill="#8b1a1a"/>
<text x="402" y="27.2" font-family='"Liberation Mono", monospace' font-size="15" fill="#222" stroke="#222" stroke-width="0.2" text-anchor="middle">Rigi</text>
<text x="55.8" y="267.9" font-family='"Liberation Mono", monospace' font-size="11.8" fill="#222" stroke="#222" stroke-width="0.25" text-anchor="end" xml:space="preserve">0</text>
<text x="70.2" y="83.3" font-family='"Liberation Mono", monospace' font-size="11.8" fill="#222" stroke="#222" stroke-width="0.25" text-anchor="end" xml:space="preserve">10 m</text>
<text x="181.3" y="278.8" font-family='"Liberation Mono", monospace' font-size="11.8" fill="#222" stroke="#222" stroke-width="0.25" text-anchor="middle">12:00</text>
<text x="320.0" y="278.8" font-family='"Liberation Mono", monospace' font-size="11.8" fill="#222" stroke="#222" stroke-width="0.25" text-anchor="middle">14:00</text>
<text x="458.7" y="278.8" font-family='"Liberation Mono", monospace' font-size="11.8" fill="#222" stroke="#222" stroke-width="0.25" text-anchor="middle">16:00</text>
<text x="597.4" y="278.8" font-family='"Liberation Mono", monospace' font-size="11.8" fill="#222" stroke="#222" stroke-width="0.25" text-anchor="middle">18:00</text>
<text x="736.1" y="278.8" font-family='"Liberation Mono", monospace' font-size="11.8" fill="#222" stroke="#222" stroke-width="0.25" text-anchor="middle">20:00</text>
<text transform="translate(16.5,148) rotate(-90)" font-family='"Liberation Mono", monospace' font-size="13" fill="#333" text-anchor="middle">Seconds</text>
<text transform="translate(791.5,5) rotate(90)" font-family='"Liberation Mono", monospace' font-size="10.5" fill="#a8a8a8" textLength="127" lengthAdjust="spacingAndGlyphs">RRDTOOL / TOBI OETIKER</text>
<rect x="17.7" y="288.3" width="10" height="10" fill="#009f00" stroke="#111" stroke-width="1"/>
<text x="34.0" y="298.00" font-family='"Liberation Mono", monospace' font-size="13.5" fill="#2a2a2a" stroke="#2a2a2a" stroke-width="0.25" xml:space="preserve">median RTT from Sunrise F</text>
<text x="255.0" y="298.00" font-family='"Liberation Mono", monospace' font-size="13.5" fill="#2a2a2a" stroke="#2a2a2a" stroke-width="0.25" xml:space="preserve">461.1 us av md </text>
<text x="395.0" y="298.00" font-family='"Liberation Mono", monospace' font-size="13.5" fill="#2a2a2a" stroke="#2a2a2a" stroke-width="0.25" xml:space="preserve">  0.0 % av ls</text>
<text x="518.8" y="298.00" font-family='"Liberation Mono", monospace' font-size="13.5" fill="#2a2a2a" stroke="#2a2a2a" stroke-width="0.25" xml:space="preserve"> 97.2 us av sd</text>
<text x="650.7" y="298.00" font-family='"Liberation Mono", monospace' font-size="13.5" fill="#2a2a2a" stroke="#2a2a2a" stroke-width="0.25" xml:space="preserve">  4.7   am/as</text>
<rect x="17.7" y="304.6" width="10" height="10" fill="#00e8f4" stroke="#111" stroke-width="1"/>
<text x="34.0" y="314.25" font-family='"Liberation Mono", monospace' font-size="13.5" fill="#2a2a2a" stroke="#2a2a2a" stroke-width="0.25" xml:space="preserve">median RTT from Swissco PMP</text>
<text x="271.2" y="314.25" font-family='"Liberation Mono", monospace' font-size="13.5" fill="#2a2a2a" stroke="#2a2a2a" stroke-width="0.25" xml:space="preserve">  3.3 ms av md </text>
<text x="411.2" y="314.25" font-family='"Liberation Mono", monospace' font-size="13.5" fill="#2a2a2a" stroke="#2a2a2a" stroke-width="0.25" xml:space="preserve">  0.0 % av ls</text>
<text x="535.0" y="314.25" font-family='"Liberation Mono", monospace' font-size="13.5" fill="#2a2a2a" stroke="#2a2a2a" stroke-width="0.25" xml:space="preserve">139.3 us av sd</text>
<text x="666.9" y="314.25" font-family='"Liberation Mono", monospace' font-size="13.5" fill="#2a2a2a" stroke="#2a2a2a" stroke-width="0.25" xml:space="preserve"> 24.0   am/as</text>
<rect x="17.7" y="320.8" width="10" height="10" fill="#00e8f4" stroke="#111" stroke-width="1"/>
<text x="34.0" y="330.50" font-family='"Liberation Mono", monospace' font-size="13.5" fill="#2a2a2a" stroke="#2a2a2a" stroke-width="0.25" xml:space="preserve">median RTT from Switch F </text>
<text x="255.0" y="330.50" font-family='"Liberation Mono", monospace' font-size="13.5" fill="#2a2a2a" stroke="#2a2a2a" stroke-width="0.25" xml:space="preserve">  1.5 ms av md </text>
<text x="395.0" y="330.50" font-family='"Liberation Mono", monospace' font-size="13.5" fill="#2a2a2a" stroke="#2a2a2a" stroke-width="0.25" xml:space="preserve">  0.0 % av ls</text>
<text x="518.8" y="330.50" font-family='"Liberation Mono", monospace' font-size="13.5" fill="#2a2a2a" stroke="#2a2a2a" stroke-width="0.25" xml:space="preserve">  1.5 ms av sd</text>
<text x="650.7" y="330.50" font-family='"Liberation Mono", monospace' font-size="13.5" fill="#2a2a2a" stroke="#2a2a2a" stroke-width="0.25" xml:space="preserve">975.2 m am/as</text>
<rect x="17.7" y="337.1" width="10" height="10" fill="#ee0077" stroke="#111" stroke-width="1"/>
<text x="34.0" y="346.75" font-family='"Liberation Mono", monospace' font-size="13.5" fill="#2a2a2a" stroke="#2a2a2a" stroke-width="0.25" xml:space="preserve">median RTT from Swissco P2P</text>
<text x="271.2" y="346.75" font-family='"Liberation Mono", monospace' font-size="13.5" fill="#2a2a2a" stroke="#2a2a2a" stroke-width="0.25" xml:space="preserve">  2.1 ms av md </text>
<text x="411.2" y="346.75" font-family='"Liberation Mono", monospace' font-size="13.5" fill="#2a2a2a" stroke="#2a2a2a" stroke-width="0.25" xml:space="preserve">  0.0 % av ls</text>
<text x="535.0" y="346.75" font-family='"Liberation Mono", monospace' font-size="13.5" fill="#2a2a2a" stroke="#2a2a2a" stroke-width="0.25" xml:space="preserve">162.0 us av sd</text>
<text x="666.9" y="346.75" font-family='"Liberation Mono", monospace' font-size="13.5" fill="#2a2a2a" stroke="#2a2a2a" stroke-width="0.25" xml:space="preserve"> 13.0   am/as</text>
<rect x="17.7" y="353.3" width="10" height="10" fill="#0061ee" stroke="#111" stroke-width="1"/>
<text x="34.0" y="363.00" font-family='"Liberation Mono", monospace' font-size="13.5" fill="#2a2a2a" stroke="#2a2a2a" stroke-width="0.25" xml:space="preserve">median RTT from INIT7 F  </text>
<text x="255.0" y="363.00" font-family='"Liberation Mono", monospace' font-size="13.5" fill="#2a2a2a" stroke="#2a2a2a" stroke-width="0.25" xml:space="preserve"> 12.3 ms av md </text>
<text x="395.0" y="363.00" font-family='"Liberation Mono", monospace' font-size="13.5" fill="#2a2a2a" stroke="#2a2a2a" stroke-width="0.25" xml:space="preserve">  0.0 % av ls</text>
<text x="518.8" y="363.00" font-family='"Liberation Mono", monospace' font-size="13.5" fill="#2a2a2a" stroke="#2a2a2a" stroke-width="0.25" xml:space="preserve"> 91.7 us av sd</text>
<text x="650.7" y="363.00" font-family='"Liberation Mono", monospace' font-size="13.5" fill="#2a2a2a" stroke="#2a2a2a" stroke-width="0.25" xml:space="preserve">133.7   am/as</text>
<rect x="17.7" y="369.6" width="10" height="10" fill="#cce000" stroke="#111" stroke-width="1"/>
<text x="34.0" y="379.25" font-family='"Liberation Mono", monospace' font-size="13.5" fill="#2a2a2a" stroke="#2a2a2a" stroke-width="0.25" xml:space="preserve">median RTT from GGA F    </text>
<text x="255.0" y="379.25" font-family='"Liberation Mono", monospace' font-size="13.5" fill="#2a2a2a" stroke="#2a2a2a" stroke-width="0.25" xml:space="preserve">  9.0 ms av md </text>
<text x="395.0" y="379.25" font-family='"Liberation Mono", monospace' font-size="13.5" fill="#2a2a2a" stroke="#2a2a2a" stroke-width="0.25" xml:space="preserve">  0.0 % av ls</text>
<text x="518.8" y="379.25" font-family='"Liberation Mono", monospace' font-size="13.5" fill="#2a2a2a" stroke="#2a2a2a" stroke-width="0.25" xml:space="preserve">117.1 us av sd</text>
<text x="650.7" y="379.25" font-family='"Liberation Mono", monospace' font-size="13.5" fill="#2a2a2a" stroke="#2a2a2a" stroke-width="0.25" xml:space="preserve"> 76.8   am/as</text>
<text x="18" y="394.8" font-family='"Liberation Mono", monospace' font-size="13.5" fill="#2a2a2a" stroke="#2a2a2a" stroke-width="0.25" xml:space="preserve">ICMP Echo Pings (56 Bytes)</text>
<text x="786.7" y="394.8" font-family='"Liberation Mono", monospace' font-size="13.5" fill="#2a2a2a" stroke="#2a2a2a" stroke-width="0.25" text-anchor="end">Mon Sep 11 20:29:47 2023 CEST</text>
</svg>
</body></html>
